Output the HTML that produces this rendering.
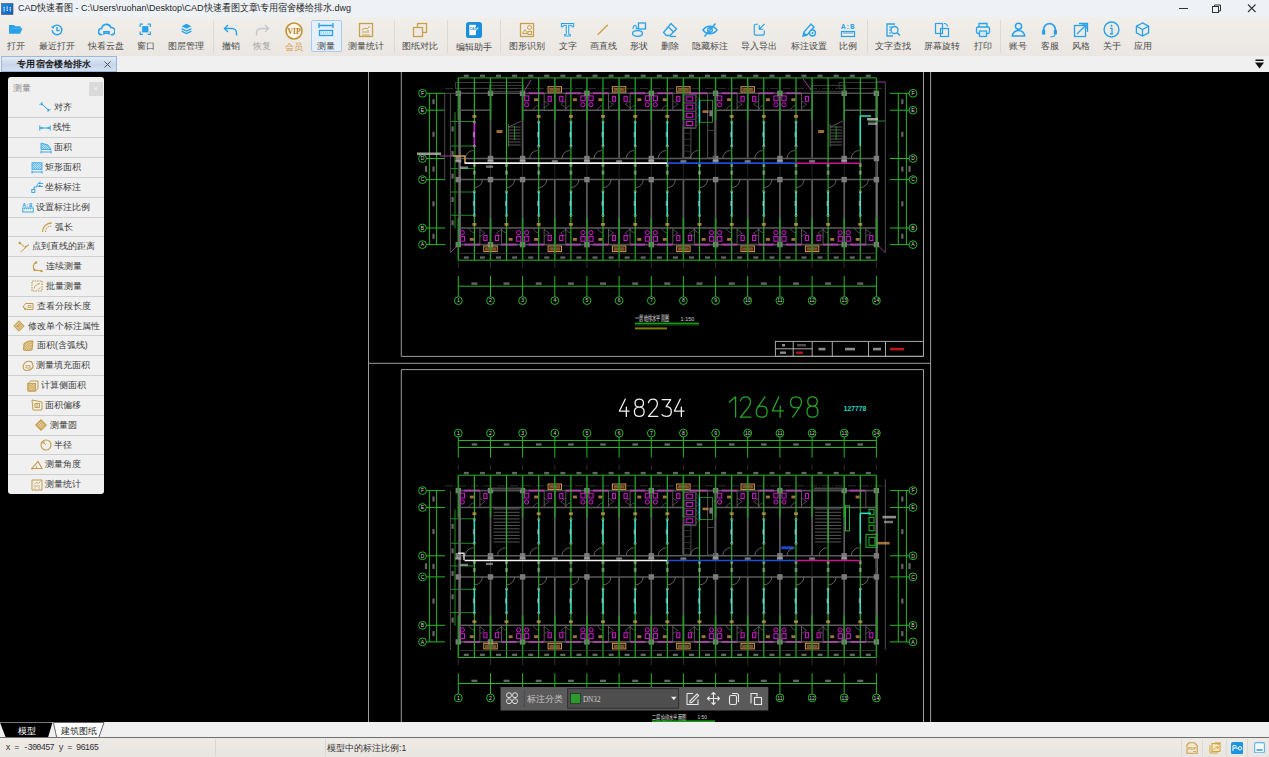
<!DOCTYPE html>
<html><head><meta charset="utf-8"><title>CAD快速看图</title>
<style>
*{margin:0;padding:0;box-sizing:border-box}
html,body{width:1269px;height:757px;overflow:hidden;background:#000;font-family:"Liberation Sans",sans-serif}
.abs{position:absolute}
#title{left:0;top:0;width:1269px;height:17px;background:#eef2f7}
#tb{left:0;top:17px;width:1269px;height:39px;background:linear-gradient(#f1efeb,#ebe6e1)}
#tabs{left:0;top:56px;width:1269px;height:16px;background:#f0f0f0}
.lbl{position:absolute;top:23px;font-size:8.6px;line-height:10px;color:#4a4a4a;white-space:nowrap;transform:translateX(-50%)}
.ico{position:absolute;top:6px;width:16px;height:16px}
.sep{position:absolute;top:3px;width:1px;height:33px;background:#dcd8d3}
#canvas{left:0;top:72px;width:1269px;height:650px;background:#000;overflow:hidden}
#btabs{left:0;top:722px;width:1269px;height:16px;background:#f0f0f0;border-bottom:1px solid #6e6e6e}
#status{left:0;top:738px;width:1269px;height:19px;background:linear-gradient(#eeebe7,#e9e5e0)}
#panel{left:7.7px;top:77.4px;width:96px;height:417px;background:#f0f0f0;border-radius:3px;overflow:hidden}
.pi{position:absolute;left:0;width:96px;height:19.82px;font-size:8.6px;color:#3c3c3c;white-space:nowrap}
</style></head><body>

<div id="title" class="abs">
<svg class="abs" style="left:1px;top:2.5px" width="12.5" height="12"><defs><linearGradient id="tg" x1="0" y1="0" x2="1" y2="1"><stop offset="0" stop-color="#1b8cf0"/><stop offset="1" stop-color="#0b5cb8"/></linearGradient></defs><rect x="0.5" y="0.5" width="11.5" height="11" fill="url(#tg)" stroke="#5a4a3a" stroke-width="0.6"/><path d="M3.2 4v4.5M6.3 3.5v5M9.3 4v4.5" stroke="#d8e8f8" stroke-width="1.4" stroke-dasharray="1.2 0.5"/></svg>
<div class="abs" style="left:18px;top:1px;font-size:9px;line-height:15px;color:#262626;white-space:nowrap;transform:scaleY(1.1);transform-origin:0 50%">CAD快速看图 - C:\Users\ruohan\Desktop\CAD快速看图文章\专用宿舍楼给排水.dwg</div>
<svg class="abs" style="left:1176px;top:2px" width="93" height="14"><path d="M3 6.5h9" stroke="#333" stroke-width="1"/><rect x="36.5" y="4.5" width="6" height="6" fill="none" stroke="#333"/><path d="M38.5 4.5v-1.5h6v6h-1.5" fill="none" stroke="#333"/><path d="M72 2.5l7.5 7.5M79.5 2.5L72 10" stroke="#333" stroke-width="1.1"/></svg>
</div>
<div id="tb" class="abs">
<svg class="ico" style="left:8.2px;top:4.8px;width:15.5px;height:15.5px" viewBox="0 0 16 16"><path d="M1 3h5l1.5 1.5H13v2H4L1 12z" fill="#27a2ea"/><path d="M3.5 6.5H15L12.5 12H1z" fill="#27a2ea"/></svg>
<div class="lbl" style="left:16.0px;top:24px;color:#4a4a4a">打开</div>
<svg class="ico" style="left:49.8px;top:5.6px;width:14px;height:14px" viewBox="0 0 16 16"><path d="M3.2 5.2A5.5 5.5 0 1 1 2.5 8" fill="none" stroke="#27a2ea" stroke-width="1.6"/><path d="M0.8 4.5l3.2-1 0.6 3.2z" fill="#27a2ea"/><path d="M8 4.5v4h3" fill="none" stroke="#27a2ea" stroke-width="1.6"/></svg>
<div class="lbl" style="left:56.8px;top:24px;color:#4a4a4a">最近打开</div>
<svg class="ico" style="left:97.5px;top:4.1px;width:17px;height:17px" viewBox="0 0 16 16"><path d="M4 13H3.5a3 3 0 0 1 0-6 4.5 4.5 0 0 1 8.7-0.8A3.4 3.4 0 0 1 13 13h-1" fill="none" stroke="#27a2ea" stroke-width="1.5"/><path d="M5.5 13v-3h5v3M5.5 11.5h5" fill="none" stroke="#27a2ea" stroke-width="1.3"/></svg>
<div class="lbl" style="left:106.0px;top:24px;color:#4a4a4a">快看云盘</div>
<svg class="ico" style="left:139.4px;top:6.3px;width:12.5px;height:12.5px" viewBox="0 0 16 16"><path d="M1.5 5V1.5H5M11 1.5h3.5V5M14.5 11v3.5H11M5 14.5H1.5V11" fill="none" stroke="#27a2ea" stroke-width="1.5"/><rect x="4" y="4" width="8" height="8" fill="#27a2ea"/></svg>
<div class="lbl" style="left:145.7px;top:24px;color:#4a4a4a">窗口</div>
<svg class="ico" style="left:179.5px;top:6.1px;width:13px;height:13px" viewBox="0 0 16 16"><path d="M8 1l6 3-6 3-6-3z" fill="#27a2ea"/><path d="M2 7l6 3 6-3M2 10l6 3 6-3" fill="none" stroke="#27a2ea" stroke-width="1.6"/></svg>
<div class="lbl" style="left:186.0px;top:24px;color:#4a4a4a">图层管理</div>
<div class="sep" style="left:212.9px"></div>
<svg class="ico" style="left:222.6px;top:4.6px;width:16px;height:16px" viewBox="0 0 16 16"><path d="M5 3L1.5 6.5 5 10" fill="none" stroke="#27a2ea" stroke-width="1.4"/><path d="M1.8 6.5H9a4.5 4.5 0 0 1 4.5 4.5v2.5" fill="none" stroke="#27a2ea" stroke-width="1.4"/></svg>
<div class="lbl" style="left:230.6px;top:24px;color:#4a4a4a">撤销</div>
<svg class="ico" style="left:253.8px;top:4.6px;width:16px;height:16px" viewBox="0 0 16 16"><path d="M11 3l3.5 3.5L11 10" fill="none" stroke="#c6c6c6" stroke-width="1.4"/><path d="M14.2 6.5H7a4.5 4.5 0 0 0-4.5 4.5v2.5" fill="none" stroke="#c6c6c6" stroke-width="1.4"/></svg>
<div class="lbl" style="left:261.8px;top:24px;color:#a8a8a8">恢复</div>
<svg class="ico" style="left:285.0px;top:4.5px;width:18px;height:18px" viewBox="0 0 18 18"><circle cx="9" cy="9" r="8" fill="#fff8e8" stroke="#c49136" stroke-width="1.6"/><text x="2.6" y="12" font-size="7.5" font-weight="bold" fill="#b27d20" font-family="Liberation Serif">VIP</text></svg>
<div class="lbl" style="left:294.0px;top:25px;color:#cf9f4d">会员</div>
<div class="abs" style="left:311.2px;top:3.1px;width:30.7px;height:32.3px;background:#e6f0fb;border:1px solid #a9c9ef;border-radius:2px"></div>
<svg class="ico" style="left:318.0px;top:4.6px;width:16px;height:16px" viewBox="0 0 16 16"><path d="M1 1v5M15 1v5M1 3.5h14" fill="none" stroke="#27a2ea" stroke-width="1.3"/><rect x="1.5" y="8.5" width="13" height="5" fill="none" stroke="#27a2ea" stroke-width="1.3"/><path d="M3 11h10" stroke="#27a2ea" stroke-width="0.8" stroke-dasharray="1 1"/></svg>
<div class="lbl" style="left:326.0px;top:24px;color:#4a4a4a">测量</div>
<svg class="ico" style="left:358.4px;top:4.6px;width:16px;height:16px" viewBox="0 0 16 16"><rect x="1.5" y="1.5" width="13" height="13" fill="none" stroke="#c9a04e" stroke-width="1.3"/><path d="M4 8l3-2 2 1 3-3M4 10h1M6 9v2M8 9v2M10 8v3" fill="none" stroke="#c9a04e" stroke-width="1"/><path d="M4 13h8" stroke="#c9a04e" stroke-width="1"/></svg>
<div class="lbl" style="left:366.4px;top:24px;color:#4a4a4a">测量统计</div>
<div class="sep" style="left:393.5px"></div>
<svg class="ico" style="left:412.2px;top:4.6px;width:16px;height:16px" viewBox="0 0 16 16"><rect x="5.5" y="1.5" width="9" height="9" fill="none" stroke="#c9a04e" stroke-width="1.3"/><rect x="1.5" y="5.5" width="9" height="9" fill="#eeeae5" stroke="#c9a04e" stroke-width="1.3"/></svg>
<div class="lbl" style="left:420.2px;top:24px;color:#4a4a4a">图纸对比</div>
<div class="sep" style="left:446.8px"></div>
<svg class="ico" style="left:465.6px;top:4.5px;width:16px;height:16px" viewBox="0 0 17 17"><rect x="0" y="0" width="17" height="17" rx="3" fill="#1a8fe0"/><path d="M3.5 3h7v11h-7z" fill="#fff"/><path d="M6 13l7-7" stroke="#fff" stroke-width="1.4"/><text x="4" y="8" font-size="3.5" fill="#1a8fe0" font-family="Liberation Sans" font-weight="bold">CAD</text></svg>
<div class="lbl" style="left:473.6px;top:25px;color:#4a4a4a">编辑助手</div>
<div class="sep" style="left:500.1px"></div>
<svg class="ico" style="left:519.2px;top:4.6px;width:16px;height:16px" viewBox="0 0 16 16"><rect x="1.5" y="1.5" width="13" height="13" fill="none" stroke="#c9a04e" stroke-width="1.3"/><path d="M3.5 11.5l2.5-4 2.5 4z" fill="none" stroke="#c9a04e" stroke-width="1"/><circle cx="10.5" cy="5.5" r="2" fill="none" stroke="#c9a04e" stroke-width="1"/><rect x="9" y="9.5" width="3.5" height="3" fill="none" stroke="#c9a04e" stroke-width="1"/></svg>
<div class="lbl" style="left:527.2px;top:24px;color:#4a4a4a">图形识别</div>
<svg class="ico" style="left:560.1px;top:5.1px;width:15px;height:15px" viewBox="0 0 16 16"><path d="M1.5 1.5h13v3.5h-1.5l-1-1.5H9.3v9.5l1.7 0.5v1.5H5v-1.5l1.7-0.5V3.5H4L3 5H1.5z" fill="#eaf5fc" stroke="#27a2ea" stroke-width="1.1"/></svg>
<div class="lbl" style="left:567.6px;top:24px;color:#4a4a4a">文字</div>
<svg class="ico" style="left:596.2px;top:5.8px;width:13.5px;height:13.5px" viewBox="0 0 16 16"><path d="M2 14L14 2" stroke="#c9a04e" stroke-width="1.5"/></svg>
<div class="lbl" style="left:603.0px;top:24px;color:#4a4a4a">画直线</div>
<svg class="ico" style="left:630.7px;top:4.6px;width:16px;height:16px" viewBox="0 0 16 16"><rect x="7.5" y="1" width="7" height="6" fill="none" stroke="#27a2ea" stroke-width="1.3"/><ellipse cx="6.5" cy="11.5" rx="5" ry="2.8" fill="none" stroke="#27a2ea" stroke-width="1.3"/><path d="M2 7c0-3 2-5 3-3s-1 4 2 2" fill="none" stroke="#27a2ea" stroke-width="1.1"/></svg>
<div class="lbl" style="left:638.7px;top:24px;color:#4a4a4a">形状</div>
<svg class="ico" style="left:662.0px;top:4.6px;width:16px;height:16px" viewBox="0 0 16 16"><path d="M9 1.5l5.5 5.5-6.5 6.5H4.5L1.5 10.5z" fill="none" stroke="#27a2ea" stroke-width="1.3"/><path d="M6 4.5l5.5 5.5" stroke="#27a2ea" stroke-width="1.3"/><path d="M8 14.5h6" stroke="#27a2ea" stroke-width="1.2"/></svg>
<div class="lbl" style="left:670.0px;top:24px;color:#4a4a4a">删除</div>
<svg class="ico" style="left:702.0px;top:4.6px;width:16px;height:16px" viewBox="0 0 16 16"><path d="M1 8c3.5-5 10.5-5 14 0-3.5 5-10.5 5-14 0z" fill="none" stroke="#27a2ea" stroke-width="1.4"/><circle cx="8" cy="8" r="2.3" fill="none" stroke="#27a2ea" stroke-width="1.4"/><path d="M2.5 14.5L13.5 1.5" stroke="#27a2ea" stroke-width="1.4"/></svg>
<div class="lbl" style="left:710.0px;top:24px;color:#4a4a4a">隐藏标注</div>
<svg class="ico" style="left:752.0px;top:5.3px;width:14.5px;height:14.5px" viewBox="0 0 16 16"><path d="M6.5 2.5H4a1.5 1.5 0 0 0-1.5 1.5v9a1.5 1.5 0 0 0 1.5 1.5h8a1.5 1.5 0 0 0 1.5-1.5V9.5" fill="none" stroke="#27a2ea" stroke-width="1.3"/><path d="M14 2L8 8M8 3.5V8h4.5" fill="none" stroke="#27a2ea" stroke-width="1.3"/></svg>
<div class="lbl" style="left:759.2px;top:24px;color:#4a4a4a">导入导出</div>
<svg class="ico" style="left:800.6px;top:4.6px;width:16px;height:16px" viewBox="0 0 16 16"><path d="M2 14l1-4 7-8 3 3-7 8z" fill="none" stroke="#27a2ea" stroke-width="1.4"/><path d="M2 14l1-4 3 3z" fill="#27a2ea"/><circle cx="11.5" cy="11" r="3" fill="#efebe6" stroke="#27a2ea" stroke-width="1.3"/><circle cx="11.5" cy="11" r="1" fill="#27a2ea"/></svg>
<div class="lbl" style="left:808.6px;top:24px;color:#4a4a4a">标注设置</div>
<svg class="ico" style="left:840.4px;top:4.6px;width:16px;height:16px" viewBox="0 0 16 16"><text x="1" y="7" font-size="7.5" font-family="Liberation Mono" font-weight="bold" fill="#27a2ea">A:B</text><rect x="1.5" y="9.5" width="13" height="5" fill="none" stroke="#27a2ea" stroke-width="1.2"/><path d="M4 10v2M6 10v2M8 10v2M10 10v2M12 10v2" stroke="#27a2ea" stroke-width="0.8"/></svg>
<div class="lbl" style="left:848.4px;top:24px;color:#4a4a4a">比例</div>
<div class="sep" style="left:866.8px"></div>
<svg class="ico" style="left:884.8px;top:4.6px;width:16px;height:16px" viewBox="0 0 16 16"><path d="M10 2H2v12h6" fill="none" stroke="#27a2ea" stroke-width="1.3"/><path d="M4 5h3M4 8h2M4 11h2" stroke="#27a2ea" stroke-width="1"/><circle cx="9.5" cy="8" r="3.5" fill="none" stroke="#27a2ea" stroke-width="1.3"/><path d="M12 10.5l3 3" stroke="#27a2ea" stroke-width="1.5"/></svg>
<div class="lbl" style="left:892.8px;top:24px;color:#4a4a4a">文字查找</div>
<svg class="ico" style="left:934.2px;top:4.6px;width:16px;height:16px" viewBox="0 0 16 16"><rect x="1.5" y="1.5" width="7" height="10" fill="none" stroke="#27a2ea" stroke-width="1.2"/><rect x="6.5" y="6.5" width="8" height="8" fill="none" stroke="#27a2ea" stroke-width="1.2"/><path d="M10 1.5c2 0 3.5 1 3.5 3" fill="none" stroke="#27a2ea" stroke-width="1.1"/></svg>
<div class="lbl" style="left:942.2px;top:24px;color:#4a4a4a">屏幕旋转</div>
<svg class="ico" style="left:974.5px;top:4.6px;width:16px;height:16px" viewBox="0 0 16 16"><path d="M4 5V1.5h8V5" fill="none" stroke="#27a2ea" stroke-width="1.3"/><rect x="1.5" y="5" width="13" height="6.5" rx="1.5" fill="none" stroke="#27a2ea" stroke-width="1.3"/><rect x="4.5" y="9" width="7" height="5.5" fill="#cfe9f8" stroke="#27a2ea" stroke-width="1.2"/></svg>
<div class="lbl" style="left:982.5px;top:24px;color:#4a4a4a">打印</div>
<div class="sep" style="left:1000.2px"></div>
<svg class="ico" style="left:1010.6px;top:5.1px;width:15px;height:15px" viewBox="0 0 16 16"><circle cx="8" cy="4.5" r="3.3" fill="none" stroke="#27a2ea" stroke-width="1.6"/><path d="M1.5 15a6.5 6 0 0 1 13 0z" fill="none" stroke="#27a2ea" stroke-width="1.6"/></svg>
<div class="lbl" style="left:1018.1px;top:24px;color:#4a4a4a">账号</div>
<svg class="ico" style="left:1041.0px;top:4.1px;width:17px;height:17px" viewBox="0 0 16 16"><path d="M2.5 10V8a5.5 5.5 0 0 1 11 0v2" fill="none" stroke="#27a2ea" stroke-width="1.5"/><rect x="1" y="8" width="3" height="5" rx="1.2" fill="#27a2ea"/><rect x="12" y="8" width="3" height="5" rx="1.2" fill="#27a2ea"/><path d="M13 13c0 1.5-2 2-4 2" fill="none" stroke="#27a2ea" stroke-width="1.1"/></svg>
<div class="lbl" style="left:1049.5px;top:24px;color:#4a4a4a">客服</div>
<svg class="ico" style="left:1072.6px;top:4.6px;width:16px;height:16px" viewBox="0 0 16 16"><path d="M6 1.5h8.5v8.5" fill="none" stroke="#27a2ea" stroke-width="1.3"/><rect x="1.5" y="3.5" width="11" height="11" fill="none" stroke="#27a2ea" stroke-width="1.3"/><path d="M4 12l9-9" stroke="#27a2ea" stroke-width="1.3"/><path d="M9 3h4v4" fill="none" stroke="#27a2ea" stroke-width="1.3"/></svg>
<div class="lbl" style="left:1080.6px;top:24px;color:#4a4a4a">风格</div>
<svg class="ico" style="left:1103.1px;top:4.1px;width:17px;height:17px" viewBox="0 0 16 16"><circle cx="8" cy="8" r="7" fill="none" stroke="#27a2ea" stroke-width="1.3"/><circle cx="8" cy="4.5" r="0.9" fill="#27a2ea"/><path d="M6.5 7h2v5M6.5 12h3" fill="none" stroke="#27a2ea" stroke-width="1.2"/></svg>
<div class="lbl" style="left:1111.6px;top:24px;color:#4a4a4a">关于</div>
<svg class="ico" style="left:1135.3px;top:5.1px;width:15px;height:15px" viewBox="0 0 16 16"><path d="M8 1l6.5 3.5v7L8 15 1.5 11.5v-7z" fill="none" stroke="#27a2ea" stroke-width="1.4"/><path d="M1.5 4.5L8 8l6.5-3.5M8 8v7" fill="none" stroke="#27a2ea" stroke-width="1.4"/></svg>
<div class="lbl" style="left:1142.8px;top:24px;color:#4a4a4a">应用</div>
</div>
<div id="tabs" class="abs">
<div class="abs" style="left:1px;top:0;width:116px;height:16px;border:1px solid #9bb7dc;background:linear-gradient(#e3ebf6,#c6d6eb 55%,#d5e1f1)"></div>
<div class="abs" style="left:17px;top:2px;font-size:9.4px;line-height:12px;font-weight:bold;color:#1e1e1e;white-space:nowrap;letter-spacing:0.35px">专用宿舍楼给排水</div>
<svg class="abs" style="left:103px;top:4px" width="9" height="9"><path d="M1.5 1.5l6 6M7.5 1.5l-6 6" stroke="#555" stroke-width="1"/></svg>
<svg class="abs" style="left:1254px;top:3px" width="11" height="10"><rect x="1.5" y="0.5" width="8" height="1.5" fill="#111"/><path d="M1 3.5h9l-4.5 6z" fill="#111"/></svg>
</div>
<div id="canvas" class="abs"><svg width="1269" height="650" viewBox="0 72 1269 650" shape-rendering="auto">
<line x1="368.5" y1="72.0" x2="368.5" y2="722.0" stroke="#9c9c9c" stroke-width="1"/>
<line x1="930.6" y1="72.0" x2="930.6" y2="722.0" stroke="#9c9c9c" stroke-width="1"/>
<line x1="368.5" y1="363.3" x2="930.6" y2="363.3" stroke="#9c9c9c" stroke-width="1"/>
<line x1="401.3" y1="72.0" x2="401.3" y2="356.4" stroke="#9c9c9c" stroke-width="1"/>
<line x1="923.5" y1="72.0" x2="923.5" y2="356.4" stroke="#9c9c9c" stroke-width="1"/>
<line x1="401.3" y1="356.4" x2="923.5" y2="356.4" stroke="#9c9c9c" stroke-width="1"/>
<line x1="401.3" y1="369.6" x2="923.5" y2="369.6" stroke="#9c9c9c" stroke-width="1"/>
<line x1="401.3" y1="369.6" x2="401.3" y2="722.0" stroke="#9c9c9c" stroke-width="1"/>
<line x1="923.5" y1="369.6" x2="923.5" y2="722.0" stroke="#9c9c9c" stroke-width="1"/>
<g transform="translate(0,0)">
<line x1="458.3" y1="77.9" x2="876.4" y2="77.9" stroke="#26b826" stroke-width="1"/>
<rect x="463.8" y="74.6" width="5.0" height="2.3" fill="#c8c8c8" opacity="0.5"/>
<rect x="479.9" y="74.6" width="5.0" height="2.3" fill="#c8c8c8" opacity="0.5"/>
<rect x="496.0" y="74.6" width="5.0" height="2.3" fill="#c8c8c8" opacity="0.5"/>
<rect x="512.1" y="74.6" width="5.0" height="2.3" fill="#c8c8c8" opacity="0.5"/>
<rect x="528.2" y="74.6" width="5.0" height="2.3" fill="#c8c8c8" opacity="0.5"/>
<rect x="544.2" y="74.6" width="5.0" height="2.3" fill="#c8c8c8" opacity="0.5"/>
<rect x="560.3" y="74.6" width="5.0" height="2.3" fill="#c8c8c8" opacity="0.5"/>
<rect x="576.4" y="74.6" width="5.0" height="2.3" fill="#c8c8c8" opacity="0.5"/>
<rect x="592.5" y="74.6" width="5.0" height="2.3" fill="#c8c8c8" opacity="0.5"/>
<rect x="608.6" y="74.6" width="5.0" height="2.3" fill="#c8c8c8" opacity="0.5"/>
<rect x="624.6" y="74.6" width="5.0" height="2.3" fill="#c8c8c8" opacity="0.5"/>
<rect x="640.7" y="74.6" width="5.0" height="2.3" fill="#c8c8c8" opacity="0.5"/>
<rect x="656.8" y="74.6" width="5.0" height="2.3" fill="#c8c8c8" opacity="0.5"/>
<rect x="672.9" y="74.6" width="5.0" height="2.3" fill="#c8c8c8" opacity="0.5"/>
<rect x="689.0" y="74.6" width="5.0" height="2.3" fill="#c8c8c8" opacity="0.5"/>
<rect x="705.0" y="74.6" width="5.0" height="2.3" fill="#c8c8c8" opacity="0.5"/>
<rect x="721.1" y="74.6" width="5.0" height="2.3" fill="#c8c8c8" opacity="0.5"/>
<rect x="737.2" y="74.6" width="5.0" height="2.3" fill="#c8c8c8" opacity="0.5"/>
<rect x="753.3" y="74.6" width="5.0" height="2.3" fill="#c8c8c8" opacity="0.5"/>
<rect x="769.4" y="74.6" width="5.0" height="2.3" fill="#c8c8c8" opacity="0.5"/>
<rect x="785.4" y="74.6" width="5.0" height="2.3" fill="#c8c8c8" opacity="0.5"/>
<rect x="801.5" y="74.6" width="5.0" height="2.3" fill="#c8c8c8" opacity="0.5"/>
<rect x="817.6" y="74.6" width="5.0" height="2.3" fill="#c8c8c8" opacity="0.5"/>
<rect x="833.7" y="74.6" width="5.0" height="2.3" fill="#c8c8c8" opacity="0.5"/>
<rect x="849.8" y="74.6" width="5.0" height="2.3" fill="#c8c8c8" opacity="0.5"/>
<rect x="865.8" y="74.6" width="5.0" height="2.3" fill="#c8c8c8" opacity="0.5"/>
<line x1="445.0" y1="88.6" x2="885.0" y2="88.6" stroke="#3c3c3c" stroke-width="0.8" stroke-dasharray="8 2 1 2"/>
<line x1="450.4" y1="93.3" x2="450.4" y2="252.6" stroke="#555" stroke-width="0.9"/>
<line x1="885.3" y1="82.0" x2="885.3" y2="252.6" stroke="#555" stroke-width="0.9"/>
<path d="M450.4 252.6L458.3 244.6" fill="none" stroke="#b040b0" stroke-width="0.8"/>
<path d="M877 244.6L885.3 252.6" fill="none" stroke="#b040b0" stroke-width="0.8"/>
<circle cx="422.5" cy="93.3" r="3.9" fill="none" stroke="#26b826" stroke-width="1"/>
<text x="422.5" y="95.1" font-size="5" text-anchor="middle" fill="#d8d8d8" font-family="Liberation Sans">F</text>
<circle cx="913.0" cy="93.3" r="3.9" fill="none" stroke="#26b826" stroke-width="1"/>
<text x="913.0" y="95.1" font-size="5" text-anchor="middle" fill="#d8d8d8" font-family="Liberation Sans">F</text>
<line x1="426.4" y1="93.3" x2="445.0" y2="93.3" stroke="#26b826" stroke-width="1"/>
<line x1="890.0" y1="93.3" x2="909.1" y2="93.3" stroke="#26b826" stroke-width="1"/>
<circle cx="422.5" cy="110.2" r="3.9" fill="none" stroke="#26b826" stroke-width="1"/>
<text x="422.5" y="112.0" font-size="5" text-anchor="middle" fill="#d8d8d8" font-family="Liberation Sans">E</text>
<circle cx="913.0" cy="110.2" r="3.9" fill="none" stroke="#26b826" stroke-width="1"/>
<text x="913.0" y="112.0" font-size="5" text-anchor="middle" fill="#d8d8d8" font-family="Liberation Sans">E</text>
<line x1="426.4" y1="110.2" x2="445.0" y2="110.2" stroke="#26b826" stroke-width="1"/>
<line x1="890.0" y1="110.2" x2="909.1" y2="110.2" stroke="#26b826" stroke-width="1"/>
<circle cx="422.5" cy="158.5" r="3.9" fill="none" stroke="#26b826" stroke-width="1"/>
<text x="422.5" y="160.3" font-size="5" text-anchor="middle" fill="#d8d8d8" font-family="Liberation Sans">D</text>
<circle cx="913.0" cy="158.5" r="3.9" fill="none" stroke="#26b826" stroke-width="1"/>
<text x="913.0" y="160.3" font-size="5" text-anchor="middle" fill="#d8d8d8" font-family="Liberation Sans">D</text>
<line x1="426.4" y1="158.5" x2="445.0" y2="158.5" stroke="#26b826" stroke-width="1"/>
<line x1="890.0" y1="158.5" x2="909.1" y2="158.5" stroke="#26b826" stroke-width="1"/>
<circle cx="422.5" cy="179.6" r="3.9" fill="none" stroke="#26b826" stroke-width="1"/>
<text x="422.5" y="181.4" font-size="5" text-anchor="middle" fill="#d8d8d8" font-family="Liberation Sans">C</text>
<circle cx="913.0" cy="179.6" r="3.9" fill="none" stroke="#26b826" stroke-width="1"/>
<text x="913.0" y="181.4" font-size="5" text-anchor="middle" fill="#d8d8d8" font-family="Liberation Sans">C</text>
<line x1="426.4" y1="179.6" x2="445.0" y2="179.6" stroke="#26b826" stroke-width="1"/>
<line x1="890.0" y1="179.6" x2="909.1" y2="179.6" stroke="#26b826" stroke-width="1"/>
<circle cx="422.5" cy="228.0" r="3.9" fill="none" stroke="#26b826" stroke-width="1"/>
<text x="422.5" y="229.8" font-size="5" text-anchor="middle" fill="#d8d8d8" font-family="Liberation Sans">B</text>
<circle cx="913.0" cy="228.0" r="3.9" fill="none" stroke="#26b826" stroke-width="1"/>
<text x="913.0" y="229.8" font-size="5" text-anchor="middle" fill="#d8d8d8" font-family="Liberation Sans">B</text>
<line x1="426.4" y1="228.0" x2="445.0" y2="228.0" stroke="#26b826" stroke-width="1"/>
<line x1="890.0" y1="228.0" x2="909.1" y2="228.0" stroke="#26b826" stroke-width="1"/>
<circle cx="422.5" cy="244.6" r="3.9" fill="none" stroke="#26b826" stroke-width="1"/>
<text x="422.5" y="246.4" font-size="5" text-anchor="middle" fill="#d8d8d8" font-family="Liberation Sans">A</text>
<circle cx="913.0" cy="244.6" r="3.9" fill="none" stroke="#26b826" stroke-width="1"/>
<text x="913.0" y="246.4" font-size="5" text-anchor="middle" fill="#d8d8d8" font-family="Liberation Sans">A</text>
<line x1="426.4" y1="244.6" x2="445.0" y2="244.6" stroke="#26b826" stroke-width="1"/>
<line x1="890.0" y1="244.6" x2="909.1" y2="244.6" stroke="#26b826" stroke-width="1"/>
<line x1="429.4" y1="93.3" x2="429.4" y2="244.6" stroke="#26b826" stroke-width="1"/>
<line x1="436.6" y1="93.3" x2="436.6" y2="244.6" stroke="#26b826" stroke-width="1"/>
<line x1="898.3" y1="93.3" x2="898.3" y2="244.6" stroke="#26b826" stroke-width="1"/>
<line x1="906.4" y1="93.3" x2="906.4" y2="244.6" stroke="#26b826" stroke-width="1"/>
<rect x="432.4" y="99.2" width="2.2" height="5.0" fill="#c8c8c8" opacity="0.5"/>
<rect x="901.2" y="99.2" width="2.2" height="5.0" fill="#c8c8c8" opacity="0.5"/>
<rect x="432.4" y="131.8" width="2.2" height="5.0" fill="#c8c8c8" opacity="0.5"/>
<rect x="901.2" y="131.8" width="2.2" height="5.0" fill="#c8c8c8" opacity="0.5"/>
<rect x="432.4" y="166.6" width="2.2" height="5.0" fill="#c8c8c8" opacity="0.5"/>
<rect x="901.2" y="166.6" width="2.2" height="5.0" fill="#c8c8c8" opacity="0.5"/>
<rect x="432.4" y="201.3" width="2.2" height="5.0" fill="#c8c8c8" opacity="0.5"/>
<rect x="901.2" y="201.3" width="2.2" height="5.0" fill="#c8c8c8" opacity="0.5"/>
<rect x="432.4" y="233.8" width="2.2" height="5.0" fill="#c8c8c8" opacity="0.5"/>
<rect x="901.2" y="233.8" width="2.2" height="5.0" fill="#c8c8c8" opacity="0.5"/>
<rect x="424.9" y="165.9" width="2.2" height="6.0" fill="#c8c8c8" opacity="0.5"/>
<rect x="908.4" y="165.9" width="2.2" height="6.0" fill="#c8c8c8" opacity="0.5"/>
<line x1="455.0" y1="112.2" x2="455.0" y2="228.6" stroke="#229a22" stroke-width="0.9"/>
<line x1="451.0" y1="121.5" x2="474.0" y2="121.5" stroke="#229a22" stroke-width="0.9"/>
<rect x="451.5" y="126.5" width="2.2" height="5.0" fill="#c8c8c8" opacity="0.5"/>
<line x1="451.0" y1="146.0" x2="474.0" y2="146.0" stroke="#229a22" stroke-width="0.9"/>
<rect x="451.5" y="151.0" width="2.2" height="5.0" fill="#c8c8c8" opacity="0.5"/>
<line x1="451.0" y1="168.6" x2="474.0" y2="168.6" stroke="#229a22" stroke-width="0.9"/>
<rect x="451.5" y="173.6" width="2.2" height="5.0" fill="#c8c8c8" opacity="0.5"/>
<line x1="451.0" y1="192.0" x2="474.0" y2="192.0" stroke="#229a22" stroke-width="0.9"/>
<rect x="451.5" y="197.0" width="2.2" height="5.0" fill="#c8c8c8" opacity="0.5"/>
<line x1="451.0" y1="215.3" x2="474.0" y2="215.3" stroke="#229a22" stroke-width="0.9"/>
<rect x="451.5" y="220.3" width="2.2" height="5.0" fill="#c8c8c8" opacity="0.5"/>
<line x1="459.6" y1="92.3" x2="459.6" y2="245.6" stroke="#6a6a6a" stroke-width="2.6"/>
<line x1="876.7" y1="92.3" x2="876.7" y2="245.6" stroke="#6a6a6a" stroke-width="2.4"/>
<line x1="459.6" y1="158.5" x2="876.7" y2="158.5" stroke="#5c5c5c" stroke-width="1.5"/>
<line x1="459.6" y1="179.6" x2="876.7" y2="179.6" stroke="#5c5c5c" stroke-width="1.5"/>
<line x1="459.6" y1="110.2" x2="490.5" y2="110.2" stroke="#5c5c5c" stroke-width="1.4"/>
<line x1="522.6" y1="110.2" x2="554.8" y2="110.2" stroke="#5c5c5c" stroke-width="1.4"/>
<line x1="554.8" y1="110.2" x2="586.9" y2="110.2" stroke="#5c5c5c" stroke-width="1.4"/>
<line x1="586.9" y1="110.2" x2="619.1" y2="110.2" stroke="#5c5c5c" stroke-width="1.4"/>
<line x1="619.1" y1="110.2" x2="651.3" y2="110.2" stroke="#5c5c5c" stroke-width="1.4"/>
<line x1="651.3" y1="110.2" x2="683.4" y2="110.2" stroke="#5c5c5c" stroke-width="1.4"/>
<line x1="715.6" y1="110.2" x2="747.7" y2="110.2" stroke="#5c5c5c" stroke-width="1.4"/>
<line x1="747.7" y1="110.2" x2="779.9" y2="110.2" stroke="#5c5c5c" stroke-width="1.4"/>
<line x1="779.9" y1="110.2" x2="812.1" y2="110.2" stroke="#5c5c5c" stroke-width="1.4"/>
<line x1="844.2" y1="110.2" x2="876.7" y2="110.2" stroke="#5c5c5c" stroke-width="1.4"/>
<line x1="459.6" y1="228.0" x2="876.7" y2="228.0" stroke="#5c5c5c" stroke-width="1.4"/>
<line x1="459.6" y1="93.3" x2="876.7" y2="93.3" stroke="#4e4e4e" stroke-width="1.6"/>
<line x1="459.6" y1="244.6" x2="876.7" y2="244.6" stroke="#4e4e4e" stroke-width="1.6"/>
<line x1="490.5" y1="93.3" x2="490.5" y2="158.5" stroke="#5c5c5c" stroke-width="1.7"/>
<line x1="490.5" y1="179.6" x2="490.5" y2="244.6" stroke="#5c5c5c" stroke-width="1.7"/>
<line x1="522.6" y1="93.3" x2="522.6" y2="158.5" stroke="#5c5c5c" stroke-width="1.7"/>
<line x1="522.6" y1="179.6" x2="522.6" y2="244.6" stroke="#5c5c5c" stroke-width="1.7"/>
<line x1="554.8" y1="93.3" x2="554.8" y2="158.5" stroke="#5c5c5c" stroke-width="1.7"/>
<line x1="554.8" y1="179.6" x2="554.8" y2="244.6" stroke="#5c5c5c" stroke-width="1.7"/>
<line x1="586.9" y1="93.3" x2="586.9" y2="158.5" stroke="#5c5c5c" stroke-width="1.7"/>
<line x1="586.9" y1="179.6" x2="586.9" y2="244.6" stroke="#5c5c5c" stroke-width="1.7"/>
<line x1="619.1" y1="93.3" x2="619.1" y2="158.5" stroke="#5c5c5c" stroke-width="1.7"/>
<line x1="619.1" y1="179.6" x2="619.1" y2="244.6" stroke="#5c5c5c" stroke-width="1.7"/>
<line x1="651.3" y1="93.3" x2="651.3" y2="158.5" stroke="#5c5c5c" stroke-width="1.7"/>
<line x1="651.3" y1="179.6" x2="651.3" y2="244.6" stroke="#5c5c5c" stroke-width="1.7"/>
<line x1="683.4" y1="93.3" x2="683.4" y2="158.5" stroke="#5c5c5c" stroke-width="1.7"/>
<line x1="683.4" y1="179.6" x2="683.4" y2="244.6" stroke="#5c5c5c" stroke-width="1.7"/>
<line x1="715.6" y1="93.3" x2="715.6" y2="158.5" stroke="#5c5c5c" stroke-width="1.7"/>
<line x1="715.6" y1="179.6" x2="715.6" y2="244.6" stroke="#5c5c5c" stroke-width="1.7"/>
<line x1="747.7" y1="93.3" x2="747.7" y2="158.5" stroke="#5c5c5c" stroke-width="1.7"/>
<line x1="747.7" y1="179.6" x2="747.7" y2="244.6" stroke="#5c5c5c" stroke-width="1.7"/>
<line x1="779.9" y1="93.3" x2="779.9" y2="158.5" stroke="#5c5c5c" stroke-width="1.7"/>
<line x1="779.9" y1="179.6" x2="779.9" y2="244.6" stroke="#5c5c5c" stroke-width="1.7"/>
<line x1="812.1" y1="93.3" x2="812.1" y2="158.5" stroke="#5c5c5c" stroke-width="1.7"/>
<line x1="812.1" y1="179.6" x2="812.1" y2="244.6" stroke="#5c5c5c" stroke-width="1.7"/>
<line x1="844.2" y1="93.3" x2="844.2" y2="158.5" stroke="#5c5c5c" stroke-width="1.7"/>
<line x1="844.2" y1="179.6" x2="844.2" y2="244.6" stroke="#5c5c5c" stroke-width="1.7"/>
<line x1="458.3" y1="158.5" x2="458.3" y2="179.6" stroke="#333" stroke-width="0.7"/>
<line x1="490.5" y1="158.5" x2="490.5" y2="179.6" stroke="#333" stroke-width="0.7"/>
<line x1="522.6" y1="158.5" x2="522.6" y2="179.6" stroke="#333" stroke-width="0.7"/>
<line x1="554.8" y1="158.5" x2="554.8" y2="179.6" stroke="#333" stroke-width="0.7"/>
<line x1="586.9" y1="158.5" x2="586.9" y2="179.6" stroke="#333" stroke-width="0.7"/>
<line x1="619.1" y1="158.5" x2="619.1" y2="179.6" stroke="#333" stroke-width="0.7"/>
<line x1="651.3" y1="158.5" x2="651.3" y2="179.6" stroke="#333" stroke-width="0.7"/>
<line x1="683.4" y1="158.5" x2="683.4" y2="179.6" stroke="#333" stroke-width="0.7"/>
<line x1="715.6" y1="158.5" x2="715.6" y2="179.6" stroke="#333" stroke-width="0.7"/>
<line x1="747.7" y1="158.5" x2="747.7" y2="179.6" stroke="#333" stroke-width="0.7"/>
<line x1="779.9" y1="158.5" x2="779.9" y2="179.6" stroke="#333" stroke-width="0.7"/>
<line x1="812.1" y1="158.5" x2="812.1" y2="179.6" stroke="#333" stroke-width="0.7"/>
<line x1="844.2" y1="158.5" x2="844.2" y2="179.6" stroke="#333" stroke-width="0.7"/>
<line x1="876.4" y1="158.5" x2="876.4" y2="179.6" stroke="#333" stroke-width="0.7"/>
<line x1="479.9" y1="228.0" x2="479.9" y2="244.6" stroke="#555" stroke-width="1.0"/>
<line x1="464.3" y1="244.6" x2="479.9" y2="244.6" stroke="#b040b0" stroke-width="1.8"/>
<circle cx="462.3" cy="232.6" r="2.1" fill="none" stroke="#e014e0" stroke-width="0.95"/>
<rect x="460.3" y="236.4" width="4.2" height="4.8" fill="none" stroke="#e014e0" stroke-width="0.95"/>
<rect x="483.8" y="235.5" width="3.2" height="5.0" fill="none" stroke="#e014e0" stroke-width="0.95"/>
<path d="M479.9 229.5l5 3.5-5 3.5" fill="none" stroke="#666" stroke-width="0.7"/>
<rect x="469.8" y="238.0" width="4.0" height="2.8" fill="#d89850" opacity="0.75"/>
<path d="M468.4 228.0q3 5 6 5" fill="none" stroke="#666" stroke-width="0.7"/>
<line x1="501.5" y1="228.0" x2="501.5" y2="244.6" stroke="#555" stroke-width="1.0"/>
<line x1="501.5" y1="244.6" x2="516.6" y2="244.6" stroke="#b040b0" stroke-width="1.8"/>
<circle cx="518.6" cy="232.6" r="2.1" fill="none" stroke="#e014e0" stroke-width="0.95"/>
<rect x="516.6" y="236.4" width="4.2" height="4.8" fill="none" stroke="#e014e0" stroke-width="0.95"/>
<rect x="495.4" y="235.5" width="3.2" height="5.0" fill="none" stroke="#e014e0" stroke-width="0.95"/>
<path d="M501.5 229.5l-5 3.5 5 3.5" fill="none" stroke="#666" stroke-width="0.7"/>
<rect x="508.6" y="238.0" width="4.0" height="2.8" fill="#d89850" opacity="0.75"/>
<path d="M500.5 228.0q3 5 6 5" fill="none" stroke="#666" stroke-width="0.7"/>
<line x1="544.2" y1="93.3" x2="544.2" y2="110.2" stroke="#555" stroke-width="1.0"/>
<line x1="528.6" y1="93.3" x2="544.2" y2="93.3" stroke="#b040b0" stroke-width="1.8"/>
<rect x="524.6" y="95.9" width="4.2" height="4.8" fill="none" stroke="#e014e0" stroke-width="0.95"/>
<circle cx="526.6" cy="104.7" r="2.1" fill="none" stroke="#e014e0" stroke-width="0.95"/>
<rect x="548.1" y="96.3" width="3.2" height="5.0" fill="none" stroke="#e014e0" stroke-width="0.95"/>
<path d="M544.2 100.8l5 3.5-5 3.5" fill="none" stroke="#666" stroke-width="0.7"/>
<rect x="534.1" y="98.3" width="4.0" height="2.8" fill="#d89850" opacity="0.75"/>
<path d="M532.7 110.2q3-5 6-5" fill="none" stroke="#666" stroke-width="0.7"/>
<line x1="544.2" y1="228.0" x2="544.2" y2="244.6" stroke="#555" stroke-width="1.0"/>
<line x1="528.6" y1="244.6" x2="544.2" y2="244.6" stroke="#b040b0" stroke-width="1.8"/>
<circle cx="526.6" cy="232.6" r="2.1" fill="none" stroke="#e014e0" stroke-width="0.95"/>
<rect x="524.6" y="236.4" width="4.2" height="4.8" fill="none" stroke="#e014e0" stroke-width="0.95"/>
<rect x="548.1" y="235.5" width="3.2" height="5.0" fill="none" stroke="#e014e0" stroke-width="0.95"/>
<path d="M544.2 229.5l5 3.5-5 3.5" fill="none" stroke="#666" stroke-width="0.7"/>
<rect x="534.1" y="238.0" width="4.0" height="2.8" fill="#d89850" opacity="0.75"/>
<path d="M532.7 228.0q3 5 6 5" fill="none" stroke="#666" stroke-width="0.7"/>
<line x1="565.8" y1="93.3" x2="565.8" y2="110.2" stroke="#555" stroke-width="1.0"/>
<line x1="565.8" y1="93.3" x2="580.9" y2="93.3" stroke="#b040b0" stroke-width="1.8"/>
<rect x="580.9" y="95.9" width="4.2" height="4.8" fill="none" stroke="#e014e0" stroke-width="0.95"/>
<circle cx="582.9" cy="104.7" r="2.1" fill="none" stroke="#e014e0" stroke-width="0.95"/>
<rect x="559.7" y="96.3" width="3.2" height="5.0" fill="none" stroke="#e014e0" stroke-width="0.95"/>
<path d="M565.8 100.8l-5 3.5 5 3.5" fill="none" stroke="#666" stroke-width="0.7"/>
<rect x="572.9" y="98.3" width="4.0" height="2.8" fill="#d89850" opacity="0.75"/>
<path d="M564.9 110.2q3-5 6-5" fill="none" stroke="#666" stroke-width="0.7"/>
<line x1="565.8" y1="228.0" x2="565.8" y2="244.6" stroke="#555" stroke-width="1.0"/>
<line x1="565.8" y1="244.6" x2="580.9" y2="244.6" stroke="#b040b0" stroke-width="1.8"/>
<circle cx="582.9" cy="232.6" r="2.1" fill="none" stroke="#e014e0" stroke-width="0.95"/>
<rect x="580.9" y="236.4" width="4.2" height="4.8" fill="none" stroke="#e014e0" stroke-width="0.95"/>
<rect x="559.7" y="235.5" width="3.2" height="5.0" fill="none" stroke="#e014e0" stroke-width="0.95"/>
<path d="M565.8 229.5l-5 3.5 5 3.5" fill="none" stroke="#666" stroke-width="0.7"/>
<rect x="572.9" y="238.0" width="4.0" height="2.8" fill="#d89850" opacity="0.75"/>
<path d="M564.9 228.0q3 5 6 5" fill="none" stroke="#666" stroke-width="0.7"/>
<line x1="608.5" y1="93.3" x2="608.5" y2="110.2" stroke="#555" stroke-width="1.0"/>
<line x1="592.9" y1="93.3" x2="608.5" y2="93.3" stroke="#b040b0" stroke-width="1.8"/>
<rect x="588.9" y="95.9" width="4.2" height="4.8" fill="none" stroke="#e014e0" stroke-width="0.95"/>
<circle cx="590.9" cy="104.7" r="2.1" fill="none" stroke="#e014e0" stroke-width="0.95"/>
<rect x="612.4" y="96.3" width="3.2" height="5.0" fill="none" stroke="#e014e0" stroke-width="0.95"/>
<path d="M608.5 100.8l5 3.5-5 3.5" fill="none" stroke="#666" stroke-width="0.7"/>
<rect x="598.4" y="98.3" width="4.0" height="2.8" fill="#d89850" opacity="0.75"/>
<path d="M597.0 110.2q3-5 6-5" fill="none" stroke="#666" stroke-width="0.7"/>
<line x1="608.5" y1="228.0" x2="608.5" y2="244.6" stroke="#555" stroke-width="1.0"/>
<line x1="592.9" y1="244.6" x2="608.5" y2="244.6" stroke="#b040b0" stroke-width="1.8"/>
<circle cx="590.9" cy="232.6" r="2.1" fill="none" stroke="#e014e0" stroke-width="0.95"/>
<rect x="588.9" y="236.4" width="4.2" height="4.8" fill="none" stroke="#e014e0" stroke-width="0.95"/>
<rect x="612.4" y="235.5" width="3.2" height="5.0" fill="none" stroke="#e014e0" stroke-width="0.95"/>
<path d="M608.5 229.5l5 3.5-5 3.5" fill="none" stroke="#666" stroke-width="0.7"/>
<rect x="598.4" y="238.0" width="4.0" height="2.8" fill="#d89850" opacity="0.75"/>
<path d="M597.0 228.0q3 5 6 5" fill="none" stroke="#666" stroke-width="0.7"/>
<line x1="630.1" y1="93.3" x2="630.1" y2="110.2" stroke="#555" stroke-width="1.0"/>
<line x1="630.1" y1="93.3" x2="645.3" y2="93.3" stroke="#b040b0" stroke-width="1.8"/>
<rect x="645.3" y="95.9" width="4.2" height="4.8" fill="none" stroke="#e014e0" stroke-width="0.95"/>
<circle cx="647.3" cy="104.7" r="2.1" fill="none" stroke="#e014e0" stroke-width="0.95"/>
<rect x="624.0" y="96.3" width="3.2" height="5.0" fill="none" stroke="#e014e0" stroke-width="0.95"/>
<path d="M630.1 100.8l-5 3.5 5 3.5" fill="none" stroke="#666" stroke-width="0.7"/>
<rect x="637.3" y="98.3" width="4.0" height="2.8" fill="#d89850" opacity="0.75"/>
<path d="M629.2 110.2q3-5 6-5" fill="none" stroke="#666" stroke-width="0.7"/>
<line x1="630.1" y1="228.0" x2="630.1" y2="244.6" stroke="#555" stroke-width="1.0"/>
<line x1="630.1" y1="244.6" x2="645.3" y2="244.6" stroke="#b040b0" stroke-width="1.8"/>
<circle cx="647.3" cy="232.6" r="2.1" fill="none" stroke="#e014e0" stroke-width="0.95"/>
<rect x="645.3" y="236.4" width="4.2" height="4.8" fill="none" stroke="#e014e0" stroke-width="0.95"/>
<rect x="624.0" y="235.5" width="3.2" height="5.0" fill="none" stroke="#e014e0" stroke-width="0.95"/>
<path d="M630.1 229.5l-5 3.5 5 3.5" fill="none" stroke="#666" stroke-width="0.7"/>
<rect x="637.3" y="238.0" width="4.0" height="2.8" fill="#d89850" opacity="0.75"/>
<path d="M629.2 228.0q3 5 6 5" fill="none" stroke="#666" stroke-width="0.7"/>
<line x1="672.8" y1="93.3" x2="672.8" y2="110.2" stroke="#555" stroke-width="1.0"/>
<line x1="657.3" y1="93.3" x2="672.8" y2="93.3" stroke="#b040b0" stroke-width="1.8"/>
<rect x="653.3" y="95.9" width="4.2" height="4.8" fill="none" stroke="#e014e0" stroke-width="0.95"/>
<circle cx="655.3" cy="104.7" r="2.1" fill="none" stroke="#e014e0" stroke-width="0.95"/>
<rect x="676.7" y="96.3" width="3.2" height="5.0" fill="none" stroke="#e014e0" stroke-width="0.95"/>
<path d="M672.8 100.8l5 3.5-5 3.5" fill="none" stroke="#666" stroke-width="0.7"/>
<rect x="662.8" y="98.3" width="4.0" height="2.8" fill="#d89850" opacity="0.75"/>
<path d="M661.3 110.2q3-5 6-5" fill="none" stroke="#666" stroke-width="0.7"/>
<line x1="672.8" y1="228.0" x2="672.8" y2="244.6" stroke="#555" stroke-width="1.0"/>
<line x1="657.3" y1="244.6" x2="672.8" y2="244.6" stroke="#b040b0" stroke-width="1.8"/>
<circle cx="655.3" cy="232.6" r="2.1" fill="none" stroke="#e014e0" stroke-width="0.95"/>
<rect x="653.3" y="236.4" width="4.2" height="4.8" fill="none" stroke="#e014e0" stroke-width="0.95"/>
<rect x="676.7" y="235.5" width="3.2" height="5.0" fill="none" stroke="#e014e0" stroke-width="0.95"/>
<path d="M672.8 229.5l5 3.5-5 3.5" fill="none" stroke="#666" stroke-width="0.7"/>
<rect x="662.8" y="238.0" width="4.0" height="2.8" fill="#d89850" opacity="0.75"/>
<path d="M661.3 228.0q3 5 6 5" fill="none" stroke="#666" stroke-width="0.7"/>
<line x1="694.4" y1="228.0" x2="694.4" y2="244.6" stroke="#555" stroke-width="1.0"/>
<line x1="694.4" y1="244.6" x2="709.6" y2="244.6" stroke="#b040b0" stroke-width="1.8"/>
<circle cx="711.6" cy="232.6" r="2.1" fill="none" stroke="#e014e0" stroke-width="0.95"/>
<rect x="709.6" y="236.4" width="4.2" height="4.8" fill="none" stroke="#e014e0" stroke-width="0.95"/>
<rect x="688.3" y="235.5" width="3.2" height="5.0" fill="none" stroke="#e014e0" stroke-width="0.95"/>
<path d="M694.4 229.5l-5 3.5 5 3.5" fill="none" stroke="#666" stroke-width="0.7"/>
<rect x="701.6" y="238.0" width="4.0" height="2.8" fill="#d89850" opacity="0.75"/>
<path d="M693.5 228.0q3 5 6 5" fill="none" stroke="#666" stroke-width="0.7"/>
<line x1="737.1" y1="93.3" x2="737.1" y2="110.2" stroke="#555" stroke-width="1.0"/>
<line x1="721.6" y1="93.3" x2="737.1" y2="93.3" stroke="#b040b0" stroke-width="1.8"/>
<rect x="717.6" y="95.9" width="4.2" height="4.8" fill="none" stroke="#e014e0" stroke-width="0.95"/>
<circle cx="719.6" cy="104.7" r="2.1" fill="none" stroke="#e014e0" stroke-width="0.95"/>
<rect x="741.0" y="96.3" width="3.2" height="5.0" fill="none" stroke="#e014e0" stroke-width="0.95"/>
<path d="M737.1 100.8l5 3.5-5 3.5" fill="none" stroke="#666" stroke-width="0.7"/>
<rect x="727.1" y="98.3" width="4.0" height="2.8" fill="#d89850" opacity="0.75"/>
<path d="M725.7 110.2q3-5 6-5" fill="none" stroke="#666" stroke-width="0.7"/>
<line x1="737.1" y1="228.0" x2="737.1" y2="244.6" stroke="#555" stroke-width="1.0"/>
<line x1="721.6" y1="244.6" x2="737.1" y2="244.6" stroke="#b040b0" stroke-width="1.8"/>
<circle cx="719.6" cy="232.6" r="2.1" fill="none" stroke="#e014e0" stroke-width="0.95"/>
<rect x="717.6" y="236.4" width="4.2" height="4.8" fill="none" stroke="#e014e0" stroke-width="0.95"/>
<rect x="741.0" y="235.5" width="3.2" height="5.0" fill="none" stroke="#e014e0" stroke-width="0.95"/>
<path d="M737.1 229.5l5 3.5-5 3.5" fill="none" stroke="#666" stroke-width="0.7"/>
<rect x="727.1" y="238.0" width="4.0" height="2.8" fill="#d89850" opacity="0.75"/>
<path d="M725.7 228.0q3 5 6 5" fill="none" stroke="#666" stroke-width="0.7"/>
<line x1="758.7" y1="93.3" x2="758.7" y2="110.2" stroke="#555" stroke-width="1.0"/>
<line x1="758.7" y1="93.3" x2="773.9" y2="93.3" stroke="#b040b0" stroke-width="1.8"/>
<rect x="773.9" y="95.9" width="4.2" height="4.8" fill="none" stroke="#e014e0" stroke-width="0.95"/>
<circle cx="775.9" cy="104.7" r="2.1" fill="none" stroke="#e014e0" stroke-width="0.95"/>
<rect x="752.6" y="96.3" width="3.2" height="5.0" fill="none" stroke="#e014e0" stroke-width="0.95"/>
<path d="M758.7 100.8l-5 3.5 5 3.5" fill="none" stroke="#666" stroke-width="0.7"/>
<rect x="765.9" y="98.3" width="4.0" height="2.8" fill="#d89850" opacity="0.75"/>
<path d="M757.8 110.2q3-5 6-5" fill="none" stroke="#666" stroke-width="0.7"/>
<line x1="758.7" y1="228.0" x2="758.7" y2="244.6" stroke="#555" stroke-width="1.0"/>
<line x1="758.7" y1="244.6" x2="773.9" y2="244.6" stroke="#b040b0" stroke-width="1.8"/>
<circle cx="775.9" cy="232.6" r="2.1" fill="none" stroke="#e014e0" stroke-width="0.95"/>
<rect x="773.9" y="236.4" width="4.2" height="4.8" fill="none" stroke="#e014e0" stroke-width="0.95"/>
<rect x="752.6" y="235.5" width="3.2" height="5.0" fill="none" stroke="#e014e0" stroke-width="0.95"/>
<path d="M758.7 229.5l-5 3.5 5 3.5" fill="none" stroke="#666" stroke-width="0.7"/>
<rect x="765.9" y="238.0" width="4.0" height="2.8" fill="#d89850" opacity="0.75"/>
<path d="M757.8 228.0q3 5 6 5" fill="none" stroke="#666" stroke-width="0.7"/>
<line x1="801.5" y1="93.3" x2="801.5" y2="110.2" stroke="#555" stroke-width="1.0"/>
<line x1="785.9" y1="93.3" x2="801.5" y2="93.3" stroke="#b040b0" stroke-width="1.8"/>
<rect x="781.9" y="95.9" width="4.2" height="4.8" fill="none" stroke="#e014e0" stroke-width="0.95"/>
<circle cx="783.9" cy="104.7" r="2.1" fill="none" stroke="#e014e0" stroke-width="0.95"/>
<rect x="805.4" y="96.3" width="3.2" height="5.0" fill="none" stroke="#e014e0" stroke-width="0.95"/>
<path d="M801.5 100.8l5 3.5-5 3.5" fill="none" stroke="#666" stroke-width="0.7"/>
<rect x="791.4" y="98.3" width="4.0" height="2.8" fill="#d89850" opacity="0.75"/>
<path d="M790.0 110.2q3-5 6-5" fill="none" stroke="#666" stroke-width="0.7"/>
<line x1="801.5" y1="228.0" x2="801.5" y2="244.6" stroke="#555" stroke-width="1.0"/>
<line x1="785.9" y1="244.6" x2="801.5" y2="244.6" stroke="#b040b0" stroke-width="1.8"/>
<circle cx="783.9" cy="232.6" r="2.1" fill="none" stroke="#e014e0" stroke-width="0.95"/>
<rect x="781.9" y="236.4" width="4.2" height="4.8" fill="none" stroke="#e014e0" stroke-width="0.95"/>
<rect x="805.4" y="235.5" width="3.2" height="5.0" fill="none" stroke="#e014e0" stroke-width="0.95"/>
<path d="M801.5 229.5l5 3.5-5 3.5" fill="none" stroke="#666" stroke-width="0.7"/>
<rect x="791.4" y="238.0" width="4.0" height="2.8" fill="#d89850" opacity="0.75"/>
<path d="M790.0 228.0q3 5 6 5" fill="none" stroke="#666" stroke-width="0.7"/>
<line x1="823.1" y1="228.0" x2="823.1" y2="244.6" stroke="#555" stroke-width="1.0"/>
<line x1="823.1" y1="244.6" x2="838.2" y2="244.6" stroke="#b040b0" stroke-width="1.8"/>
<circle cx="840.2" cy="232.6" r="2.1" fill="none" stroke="#e014e0" stroke-width="0.95"/>
<rect x="838.2" y="236.4" width="4.2" height="4.8" fill="none" stroke="#e014e0" stroke-width="0.95"/>
<rect x="817.0" y="235.5" width="3.2" height="5.0" fill="none" stroke="#e014e0" stroke-width="0.95"/>
<path d="M823.1 229.5l-5 3.5 5 3.5" fill="none" stroke="#666" stroke-width="0.7"/>
<rect x="830.2" y="238.0" width="4.0" height="2.8" fill="#d89850" opacity="0.75"/>
<path d="M822.1 228.0q3 5 6 5" fill="none" stroke="#666" stroke-width="0.7"/>
<line x1="865.8" y1="228.0" x2="865.8" y2="244.6" stroke="#555" stroke-width="1.0"/>
<line x1="850.2" y1="244.6" x2="865.8" y2="244.6" stroke="#b040b0" stroke-width="1.8"/>
<circle cx="848.2" cy="232.6" r="2.1" fill="none" stroke="#e014e0" stroke-width="0.95"/>
<rect x="846.2" y="236.4" width="4.2" height="4.8" fill="none" stroke="#e014e0" stroke-width="0.95"/>
<rect x="869.7" y="235.5" width="3.2" height="5.0" fill="none" stroke="#e014e0" stroke-width="0.95"/>
<path d="M865.8 229.5l5 3.5-5 3.5" fill="none" stroke="#666" stroke-width="0.7"/>
<rect x="855.7" y="238.0" width="4.0" height="2.8" fill="#d89850" opacity="0.75"/>
<path d="M854.3 228.0q3 5 6 5" fill="none" stroke="#666" stroke-width="0.7"/>
<rect x="455.6" y="90.6" width="5.4" height="5.4" fill="#7c7c7c" stroke="none" stroke-width="1"/>
<rect x="455.6" y="155.8" width="5.4" height="5.4" fill="#7c7c7c" stroke="none" stroke-width="1"/>
<rect x="455.6" y="176.9" width="5.4" height="5.4" fill="#7c7c7c" stroke="none" stroke-width="1"/>
<rect x="455.6" y="241.9" width="5.4" height="5.4" fill="#7c7c7c" stroke="none" stroke-width="1"/>
<rect x="487.8" y="90.6" width="5.4" height="5.4" fill="#7c7c7c" stroke="none" stroke-width="1"/>
<rect x="487.8" y="155.8" width="5.4" height="5.4" fill="#7c7c7c" stroke="none" stroke-width="1"/>
<rect x="487.8" y="176.9" width="5.4" height="5.4" fill="#7c7c7c" stroke="none" stroke-width="1"/>
<rect x="487.8" y="241.9" width="5.4" height="5.4" fill="#7c7c7c" stroke="none" stroke-width="1"/>
<rect x="519.9" y="90.6" width="5.4" height="5.4" fill="#7c7c7c" stroke="none" stroke-width="1"/>
<rect x="519.9" y="155.8" width="5.4" height="5.4" fill="#7c7c7c" stroke="none" stroke-width="1"/>
<rect x="519.9" y="176.9" width="5.4" height="5.4" fill="#7c7c7c" stroke="none" stroke-width="1"/>
<rect x="519.9" y="241.9" width="5.4" height="5.4" fill="#7c7c7c" stroke="none" stroke-width="1"/>
<rect x="584.2" y="90.6" width="5.4" height="5.4" fill="#7c7c7c" stroke="none" stroke-width="1"/>
<rect x="584.2" y="155.8" width="5.4" height="5.4" fill="#7c7c7c" stroke="none" stroke-width="1"/>
<rect x="584.2" y="176.9" width="5.4" height="5.4" fill="#7c7c7c" stroke="none" stroke-width="1"/>
<rect x="584.2" y="241.9" width="5.4" height="5.4" fill="#7c7c7c" stroke="none" stroke-width="1"/>
<rect x="648.6" y="90.6" width="5.4" height="5.4" fill="#7c7c7c" stroke="none" stroke-width="1"/>
<rect x="648.6" y="155.8" width="5.4" height="5.4" fill="#7c7c7c" stroke="none" stroke-width="1"/>
<rect x="648.6" y="176.9" width="5.4" height="5.4" fill="#7c7c7c" stroke="none" stroke-width="1"/>
<rect x="648.6" y="241.9" width="5.4" height="5.4" fill="#7c7c7c" stroke="none" stroke-width="1"/>
<rect x="712.9" y="90.6" width="5.4" height="5.4" fill="#7c7c7c" stroke="none" stroke-width="1"/>
<rect x="712.9" y="155.8" width="5.4" height="5.4" fill="#7c7c7c" stroke="none" stroke-width="1"/>
<rect x="712.9" y="176.9" width="5.4" height="5.4" fill="#7c7c7c" stroke="none" stroke-width="1"/>
<rect x="712.9" y="241.9" width="5.4" height="5.4" fill="#7c7c7c" stroke="none" stroke-width="1"/>
<rect x="777.2" y="90.6" width="5.4" height="5.4" fill="#7c7c7c" stroke="none" stroke-width="1"/>
<rect x="777.2" y="155.8" width="5.4" height="5.4" fill="#7c7c7c" stroke="none" stroke-width="1"/>
<rect x="777.2" y="176.9" width="5.4" height="5.4" fill="#7c7c7c" stroke="none" stroke-width="1"/>
<rect x="777.2" y="241.9" width="5.4" height="5.4" fill="#7c7c7c" stroke="none" stroke-width="1"/>
<rect x="841.5" y="90.6" width="5.4" height="5.4" fill="#7c7c7c" stroke="none" stroke-width="1"/>
<rect x="841.5" y="155.8" width="5.4" height="5.4" fill="#7c7c7c" stroke="none" stroke-width="1"/>
<rect x="841.5" y="176.9" width="5.4" height="5.4" fill="#7c7c7c" stroke="none" stroke-width="1"/>
<rect x="841.5" y="241.9" width="5.4" height="5.4" fill="#7c7c7c" stroke="none" stroke-width="1"/>
<rect x="873.7" y="90.6" width="5.4" height="5.4" fill="#7c7c7c" stroke="none" stroke-width="1"/>
<rect x="873.7" y="155.8" width="5.4" height="5.4" fill="#7c7c7c" stroke="none" stroke-width="1"/>
<rect x="873.7" y="176.9" width="5.4" height="5.4" fill="#7c7c7c" stroke="none" stroke-width="1"/>
<rect x="873.7" y="241.9" width="5.4" height="5.4" fill="#7c7c7c" stroke="none" stroke-width="1"/>
<rect x="548.1" y="86.7" width="13.4" height="5.4" fill="none" stroke="#d89850" stroke-width="1.0"/>
<rect x="549.3" y="87.9" width="11.0" height="3.4" fill="#d89850" opacity="0.55"/>
<rect x="612.4" y="86.7" width="13.4" height="5.4" fill="none" stroke="#d89850" stroke-width="1.0"/>
<rect x="613.6" y="87.9" width="11.0" height="3.4" fill="#d89850" opacity="0.55"/>
<rect x="676.7" y="86.7" width="13.4" height="5.4" fill="none" stroke="#d89850" stroke-width="1.0"/>
<rect x="677.9" y="87.9" width="11.0" height="3.4" fill="#d89850" opacity="0.55"/>
<rect x="741.0" y="86.7" width="13.4" height="5.4" fill="none" stroke="#d89850" stroke-width="1.0"/>
<rect x="742.2" y="87.9" width="11.0" height="3.4" fill="#d89850" opacity="0.55"/>
<rect x="483.8" y="246.0" width="13.4" height="5.6" fill="none" stroke="#d89850" stroke-width="1.0"/>
<rect x="485.0" y="247.2" width="11.0" height="3.6" fill="#d89850" opacity="0.55"/>
<rect x="548.1" y="246.0" width="13.4" height="5.6" fill="none" stroke="#d89850" stroke-width="1.0"/>
<rect x="549.3" y="247.2" width="11.0" height="3.6" fill="#d89850" opacity="0.55"/>
<rect x="612.4" y="246.0" width="13.4" height="5.6" fill="none" stroke="#d89850" stroke-width="1.0"/>
<rect x="613.6" y="247.2" width="11.0" height="3.6" fill="#d89850" opacity="0.55"/>
<rect x="676.7" y="246.0" width="13.4" height="5.6" fill="none" stroke="#d89850" stroke-width="1.0"/>
<rect x="677.9" y="247.2" width="11.0" height="3.6" fill="#d89850" opacity="0.55"/>
<rect x="741.0" y="246.0" width="13.4" height="5.6" fill="none" stroke="#d89850" stroke-width="1.0"/>
<rect x="742.2" y="247.2" width="11.0" height="3.6" fill="#d89850" opacity="0.55"/>
<rect x="805.4" y="246.0" width="13.4" height="5.6" fill="none" stroke="#d89850" stroke-width="1.0"/>
<rect x="806.6" y="247.2" width="11.0" height="3.6" fill="#d89850" opacity="0.55"/>
<line x1="689.4" y1="93.3" x2="707.4" y2="93.3" stroke="#b040b0" stroke-width="1.8"/>
<rect x="683.4" y="94.8" width="12.6" height="33.5" fill="none" stroke="#555" stroke-width="1.0"/>
<rect x="683.9" y="95.1" width="11.6" height="7.6" fill="none" stroke="#4a4a4a" stroke-width="0.8"/>
<rect x="686.2" y="96.9" width="6.5" height="4.0" fill="none" stroke="#e014e0" stroke-width="1.0"/>
<path d="M696.0 96.3l3 2.5-3 2.5" fill="none" stroke="#666" stroke-width="0.6"/>
<rect x="683.9" y="103.3" width="11.6" height="7.6" fill="none" stroke="#4a4a4a" stroke-width="0.8"/>
<rect x="686.2" y="105.1" width="6.5" height="4.0" fill="none" stroke="#e014e0" stroke-width="1.0"/>
<path d="M696.0 104.5l3 2.5-3 2.5" fill="none" stroke="#666" stroke-width="0.6"/>
<rect x="683.9" y="111.5" width="11.6" height="7.6" fill="none" stroke="#4a4a4a" stroke-width="0.8"/>
<rect x="686.2" y="113.3" width="6.5" height="4.0" fill="none" stroke="#e014e0" stroke-width="1.0"/>
<path d="M696.0 112.7l3 2.5-3 2.5" fill="none" stroke="#666" stroke-width="0.6"/>
<rect x="683.9" y="119.7" width="11.6" height="7.6" fill="none" stroke="#4a4a4a" stroke-width="0.8"/>
<rect x="686.2" y="121.5" width="6.5" height="4.0" fill="none" stroke="#e014e0" stroke-width="1.0"/>
<path d="M696.0 120.9l3 2.5-3 2.5" fill="none" stroke="#666" stroke-width="0.6"/>
<rect x="682.9" y="127.3" width="8.0" height="30.2" fill="none" stroke="#555" stroke-width="0.9"/>
<line x1="682.9" y1="133.3" x2="690.9" y2="133.3" stroke="#444" stroke-width="0.7"/>
<line x1="682.9" y1="139.3" x2="690.9" y2="139.3" stroke="#444" stroke-width="0.7"/>
<line x1="682.9" y1="145.3" x2="690.9" y2="145.3" stroke="#444" stroke-width="0.7"/>
<line x1="682.9" y1="151.3" x2="690.9" y2="151.3" stroke="#444" stroke-width="0.7"/>
<line x1="682.9" y1="157.3" x2="690.9" y2="157.3" stroke="#444" stroke-width="0.7"/>
<line x1="707.6" y1="93.3" x2="707.6" y2="158.5" stroke="#555" stroke-width="1.0"/>
<line x1="714.8" y1="93.3" x2="714.8" y2="158.5" stroke="#555" stroke-width="1.0"/>
<rect x="707.6" y="130.3" width="7.2" height="27.2" fill="none" stroke="#4a4a4a" stroke-width="0.8"/>
<rect x="699.5" y="100.3" width="13.0" height="22.0" fill="none" stroke="#229a22" stroke-width="0.9"/>
<rect x="702.5" y="110.3" width="6.0" height="2.6" fill="#d89850" opacity="0.75"/>
<rect x="709.4" y="110.3" width="3.0" height="6.0" fill="#c8c8c8" opacity="0.6"/>
<line x1="508.5" y1="127.0" x2="520.6" y2="127.0" stroke="#6a6a6a" stroke-width="0.8"/>
<line x1="508.5" y1="130.0" x2="520.6" y2="130.0" stroke="#6a6a6a" stroke-width="0.8"/>
<line x1="508.5" y1="133.0" x2="520.6" y2="133.0" stroke="#6a6a6a" stroke-width="0.8"/>
<line x1="508.5" y1="136.0" x2="520.6" y2="136.0" stroke="#6a6a6a" stroke-width="0.8"/>
<line x1="508.5" y1="139.0" x2="520.6" y2="139.0" stroke="#6a6a6a" stroke-width="0.8"/>
<line x1="508.5" y1="142.0" x2="520.6" y2="142.0" stroke="#6a6a6a" stroke-width="0.8"/>
<line x1="508.5" y1="145.0" x2="520.6" y2="145.0" stroke="#6a6a6a" stroke-width="0.8"/>
<path d="M508.5 127l13-6" fill="none" stroke="#6a6a6a" stroke-width="0.8"/>
<line x1="508.5" y1="124.0" x2="508.5" y2="147.0" stroke="#6a6a6a" stroke-width="0.8"/>
<line x1="514.5" y1="126.0" x2="514.5" y2="140.0" stroke="#229a22" stroke-width="0.9"/>
<rect x="496.5" y="130.0" width="6.0" height="3.0" fill="#d89850" opacity="0.7"/>
<rect x="489.5" y="85.3" width="34.2" height="6.0" fill="none" stroke="#4a4a4a" stroke-width="0.8"/>
<line x1="830.1" y1="127.0" x2="842.2" y2="127.0" stroke="#6a6a6a" stroke-width="0.8"/>
<line x1="830.1" y1="130.0" x2="842.2" y2="130.0" stroke="#6a6a6a" stroke-width="0.8"/>
<line x1="830.1" y1="133.0" x2="842.2" y2="133.0" stroke="#6a6a6a" stroke-width="0.8"/>
<line x1="830.1" y1="136.0" x2="842.2" y2="136.0" stroke="#6a6a6a" stroke-width="0.8"/>
<line x1="830.1" y1="139.0" x2="842.2" y2="139.0" stroke="#6a6a6a" stroke-width="0.8"/>
<line x1="830.1" y1="142.0" x2="842.2" y2="142.0" stroke="#6a6a6a" stroke-width="0.8"/>
<line x1="830.1" y1="145.0" x2="842.2" y2="145.0" stroke="#6a6a6a" stroke-width="0.8"/>
<path d="M830.1 127l13-6" fill="none" stroke="#6a6a6a" stroke-width="0.8"/>
<line x1="830.1" y1="124.0" x2="830.1" y2="147.0" stroke="#6a6a6a" stroke-width="0.8"/>
<line x1="836.1" y1="126.0" x2="836.1" y2="140.0" stroke="#229a22" stroke-width="0.9"/>
<rect x="818.1" y="130.0" width="6.0" height="3.0" fill="#d89850" opacity="0.7"/>
<rect x="811.1" y="85.3" width="34.2" height="6.0" fill="none" stroke="#4a4a4a" stroke-width="0.8"/>
<rect x="455.5" y="82.6" width="67.0" height="5.7" fill="none" stroke="#4a4a4a" stroke-width="0.8"/>
<line x1="444.7" y1="93.3" x2="444.7" y2="180.5" stroke="#555" stroke-width="0.9"/>
<line x1="444.7" y1="93.3" x2="459.6" y2="93.3" stroke="#555" stroke-width="0.9"/>
<path d="M524.6 90.5L531.1 80" fill="none" stroke="#b040b0" stroke-width="0.9"/>
<path d="M811.1 90L803.1 79" fill="none" stroke="#b040b0" stroke-width="0.9"/>
<rect x="839.0" y="82.5" width="38.0" height="6.0" fill="none" stroke="#444" stroke-width="0.8"/>
<line x1="877.0" y1="82.0" x2="885.3" y2="82.0" stroke="#b040b0" stroke-width="0.9"/>
<path d="M453 156h12v7" fill="none" stroke="#d89850" stroke-width="1.6"/>
<rect x="417.0" y="152.5" width="24.0" height="2.6" fill="#c8c8c8" opacity="0.75"/>
<line x1="440.0" y1="156.0" x2="453.0" y2="156.0" stroke="#b040b0" stroke-width="0.9"/>
<line x1="474.4" y1="77.9" x2="474.4" y2="260.2" stroke="#26b826" stroke-width="1.15"/>
<line x1="506.5" y1="77.9" x2="506.5" y2="260.2" stroke="#26b826" stroke-width="1.15"/>
<line x1="538.7" y1="77.9" x2="538.7" y2="260.2" stroke="#26b826" stroke-width="1.15"/>
<line x1="570.9" y1="77.9" x2="570.9" y2="260.2" stroke="#26b826" stroke-width="1.15"/>
<line x1="603.0" y1="77.9" x2="603.0" y2="260.2" stroke="#26b826" stroke-width="1.15"/>
<line x1="635.2" y1="77.9" x2="635.2" y2="260.2" stroke="#26b826" stroke-width="1.15"/>
<line x1="667.3" y1="77.9" x2="667.3" y2="260.2" stroke="#26b826" stroke-width="1.15"/>
<line x1="699.5" y1="77.9" x2="699.5" y2="260.2" stroke="#26b826" stroke-width="1.15"/>
<line x1="731.7" y1="77.9" x2="731.7" y2="260.2" stroke="#26b826" stroke-width="1.15"/>
<line x1="763.8" y1="77.9" x2="763.8" y2="260.2" stroke="#26b826" stroke-width="1.15"/>
<line x1="796.0" y1="77.9" x2="796.0" y2="260.2" stroke="#26b826" stroke-width="1.15"/>
<line x1="828.1" y1="77.9" x2="828.1" y2="260.2" stroke="#26b826" stroke-width="1.15"/>
<line x1="860.3" y1="77.9" x2="860.3" y2="260.2" stroke="#26b826" stroke-width="1.15"/>
<line x1="458.3" y1="77.9" x2="458.3" y2="119.8" stroke="#229a22" stroke-width="1.5"/>
<line x1="458.3" y1="218.2" x2="458.3" y2="260.2" stroke="#229a22" stroke-width="1.5"/>
<line x1="490.5" y1="77.9" x2="490.5" y2="119.8" stroke="#229a22" stroke-width="1.5"/>
<line x1="490.5" y1="218.2" x2="490.5" y2="260.2" stroke="#229a22" stroke-width="1.5"/>
<line x1="522.6" y1="77.9" x2="522.6" y2="119.8" stroke="#229a22" stroke-width="1.5"/>
<line x1="522.6" y1="218.2" x2="522.6" y2="260.2" stroke="#229a22" stroke-width="1.5"/>
<line x1="554.8" y1="77.9" x2="554.8" y2="119.8" stroke="#229a22" stroke-width="1.5"/>
<line x1="554.8" y1="218.2" x2="554.8" y2="260.2" stroke="#229a22" stroke-width="1.5"/>
<line x1="586.9" y1="77.9" x2="586.9" y2="119.8" stroke="#229a22" stroke-width="1.5"/>
<line x1="586.9" y1="218.2" x2="586.9" y2="260.2" stroke="#229a22" stroke-width="1.5"/>
<line x1="619.1" y1="77.9" x2="619.1" y2="119.8" stroke="#229a22" stroke-width="1.5"/>
<line x1="619.1" y1="218.2" x2="619.1" y2="260.2" stroke="#229a22" stroke-width="1.5"/>
<line x1="651.3" y1="77.9" x2="651.3" y2="119.8" stroke="#229a22" stroke-width="1.5"/>
<line x1="651.3" y1="218.2" x2="651.3" y2="260.2" stroke="#229a22" stroke-width="1.5"/>
<line x1="683.4" y1="77.9" x2="683.4" y2="119.8" stroke="#229a22" stroke-width="1.5"/>
<line x1="683.4" y1="218.2" x2="683.4" y2="260.2" stroke="#229a22" stroke-width="1.5"/>
<line x1="715.6" y1="77.9" x2="715.6" y2="119.8" stroke="#229a22" stroke-width="1.5"/>
<line x1="715.6" y1="218.2" x2="715.6" y2="260.2" stroke="#229a22" stroke-width="1.5"/>
<line x1="747.7" y1="77.9" x2="747.7" y2="119.8" stroke="#229a22" stroke-width="1.5"/>
<line x1="747.7" y1="218.2" x2="747.7" y2="260.2" stroke="#229a22" stroke-width="1.5"/>
<line x1="779.9" y1="77.9" x2="779.9" y2="119.8" stroke="#229a22" stroke-width="1.5"/>
<line x1="779.9" y1="218.2" x2="779.9" y2="260.2" stroke="#229a22" stroke-width="1.5"/>
<line x1="812.1" y1="77.9" x2="812.1" y2="119.8" stroke="#229a22" stroke-width="1.5"/>
<line x1="812.1" y1="218.2" x2="812.1" y2="260.2" stroke="#229a22" stroke-width="1.5"/>
<line x1="844.2" y1="77.9" x2="844.2" y2="119.8" stroke="#229a22" stroke-width="1.5"/>
<line x1="844.2" y1="218.2" x2="844.2" y2="260.2" stroke="#229a22" stroke-width="1.5"/>
<line x1="876.4" y1="77.9" x2="876.4" y2="119.8" stroke="#229a22" stroke-width="1.5"/>
<line x1="876.4" y1="218.2" x2="876.4" y2="260.2" stroke="#229a22" stroke-width="1.5"/>
<path d="M465.4 158.5A8 8 0 0 1 473.4 150.5" fill="none" stroke="#777" stroke-width="0.8"/>
<path d="M482.4 179.6A8 8 0 0 1 474.4 187.6" fill="none" stroke="#777" stroke-width="0.8"/>
<path d="M514.5 179.6A8 8 0 0 1 506.5 187.6" fill="none" stroke="#777" stroke-width="0.8"/>
<path d="M529.7 158.5A8 8 0 0 1 537.7 150.5" fill="none" stroke="#777" stroke-width="0.8"/>
<path d="M546.7 179.6A8 8 0 0 1 538.7 187.6" fill="none" stroke="#777" stroke-width="0.8"/>
<path d="M561.9 158.5A8 8 0 0 1 569.9 150.5" fill="none" stroke="#777" stroke-width="0.8"/>
<path d="M578.9 179.6A8 8 0 0 1 570.9 187.6" fill="none" stroke="#777" stroke-width="0.8"/>
<path d="M594.0 158.5A8 8 0 0 1 602.0 150.5" fill="none" stroke="#777" stroke-width="0.8"/>
<path d="M611.0 179.6A8 8 0 0 1 603.0 187.6" fill="none" stroke="#777" stroke-width="0.8"/>
<path d="M626.2 158.5A8 8 0 0 1 634.2 150.5" fill="none" stroke="#777" stroke-width="0.8"/>
<path d="M643.2 179.6A8 8 0 0 1 635.2 187.6" fill="none" stroke="#777" stroke-width="0.8"/>
<path d="M658.3 158.5A8 8 0 0 1 666.3 150.5" fill="none" stroke="#777" stroke-width="0.8"/>
<path d="M675.3 179.6A8 8 0 0 1 667.3 187.6" fill="none" stroke="#777" stroke-width="0.8"/>
<path d="M690.5 158.5A8 8 0 0 1 698.5 150.5" fill="none" stroke="#777" stroke-width="0.8"/>
<path d="M707.5 179.6A8 8 0 0 1 699.5 187.6" fill="none" stroke="#777" stroke-width="0.8"/>
<path d="M722.7 158.5A8 8 0 0 1 730.7 150.5" fill="none" stroke="#777" stroke-width="0.8"/>
<path d="M739.7 179.6A8 8 0 0 1 731.7 187.6" fill="none" stroke="#777" stroke-width="0.8"/>
<path d="M754.8 158.5A8 8 0 0 1 762.8 150.5" fill="none" stroke="#777" stroke-width="0.8"/>
<path d="M771.8 179.6A8 8 0 0 1 763.8 187.6" fill="none" stroke="#777" stroke-width="0.8"/>
<path d="M787.0 158.5A8 8 0 0 1 795.0 150.5" fill="none" stroke="#777" stroke-width="0.8"/>
<path d="M804.0 179.6A8 8 0 0 1 796.0 187.6" fill="none" stroke="#777" stroke-width="0.8"/>
<path d="M836.1 179.6A8 8 0 0 1 828.1 187.6" fill="none" stroke="#777" stroke-width="0.8"/>
<path d="M851.3 158.5A8 8 0 0 1 859.3 150.5" fill="none" stroke="#777" stroke-width="0.8"/>
<path d="M868.3 179.6A8 8 0 0 1 860.3 187.6" fill="none" stroke="#777" stroke-width="0.8"/>
<line x1="474.4" y1="122.2" x2="474.4" y2="146.0" stroke="#e014e0" stroke-width="1.5"/>
<circle cx="474.4" cy="122.2" r="1.2" fill="none" stroke="#bbb" stroke-width="0.6"/>
<circle cx="474.4" cy="146.0" r="1.2" fill="none" stroke="#bbb" stroke-width="0.6"/>
<rect x="472.8" y="132.0" width="2.0" height="5.0" fill="#c8c8c8" opacity="0.55"/>
<rect x="472.4" y="115.0" width="4.0" height="2.8" fill="#d89850" opacity="0.75"/>
<line x1="474.4" y1="191.8" x2="474.4" y2="215.5" stroke="#30e0c8" stroke-width="1.5"/>
<circle cx="474.4" cy="191.8" r="1.2" fill="none" stroke="#bbb" stroke-width="0.6"/>
<circle cx="474.4" cy="215.5" r="1.2" fill="none" stroke="#bbb" stroke-width="0.6"/>
<rect x="472.8" y="201.0" width="2.0" height="5.0" fill="#c8c8c8" opacity="0.55"/>
<rect x="472.4" y="223.0" width="4.0" height="2.8" fill="#d89850" opacity="0.75"/>
<rect x="472.9" y="163.0" width="3.0" height="4.0" fill="#c8c8c8" opacity="0.45"/>
<rect x="472.9" y="170.6" width="3.0" height="4.0" fill="#c8c8c8" opacity="0.45"/>
<line x1="506.5" y1="191.8" x2="506.5" y2="215.5" stroke="#30e0c8" stroke-width="1.5"/>
<circle cx="506.5" cy="191.8" r="1.2" fill="none" stroke="#bbb" stroke-width="0.6"/>
<circle cx="506.5" cy="215.5" r="1.2" fill="none" stroke="#bbb" stroke-width="0.6"/>
<rect x="504.9" y="201.0" width="2.0" height="5.0" fill="#c8c8c8" opacity="0.55"/>
<rect x="504.5" y="223.0" width="4.0" height="2.8" fill="#d89850" opacity="0.75"/>
<rect x="505.0" y="163.0" width="3.0" height="4.0" fill="#c8c8c8" opacity="0.45"/>
<rect x="505.0" y="170.6" width="3.0" height="4.0" fill="#c8c8c8" opacity="0.45"/>
<line x1="538.7" y1="122.2" x2="538.7" y2="146.0" stroke="#30e0c8" stroke-width="1.5"/>
<circle cx="538.7" cy="122.2" r="1.2" fill="none" stroke="#bbb" stroke-width="0.6"/>
<circle cx="538.7" cy="146.0" r="1.2" fill="none" stroke="#bbb" stroke-width="0.6"/>
<rect x="537.1" y="132.0" width="2.0" height="5.0" fill="#c8c8c8" opacity="0.55"/>
<rect x="536.7" y="115.0" width="4.0" height="2.8" fill="#d89850" opacity="0.75"/>
<line x1="538.7" y1="191.8" x2="538.7" y2="215.5" stroke="#30e0c8" stroke-width="1.5"/>
<circle cx="538.7" cy="191.8" r="1.2" fill="none" stroke="#bbb" stroke-width="0.6"/>
<circle cx="538.7" cy="215.5" r="1.2" fill="none" stroke="#bbb" stroke-width="0.6"/>
<rect x="537.1" y="201.0" width="2.0" height="5.0" fill="#c8c8c8" opacity="0.55"/>
<rect x="536.7" y="223.0" width="4.0" height="2.8" fill="#d89850" opacity="0.75"/>
<rect x="537.2" y="163.0" width="3.0" height="4.0" fill="#c8c8c8" opacity="0.45"/>
<rect x="537.2" y="170.6" width="3.0" height="4.0" fill="#c8c8c8" opacity="0.45"/>
<line x1="570.9" y1="122.2" x2="570.9" y2="146.0" stroke="#30e0c8" stroke-width="1.5"/>
<circle cx="570.9" cy="122.2" r="1.2" fill="none" stroke="#bbb" stroke-width="0.6"/>
<circle cx="570.9" cy="146.0" r="1.2" fill="none" stroke="#bbb" stroke-width="0.6"/>
<rect x="569.3" y="132.0" width="2.0" height="5.0" fill="#c8c8c8" opacity="0.55"/>
<rect x="568.9" y="115.0" width="4.0" height="2.8" fill="#d89850" opacity="0.75"/>
<line x1="570.9" y1="191.8" x2="570.9" y2="215.5" stroke="#30e0c8" stroke-width="1.5"/>
<circle cx="570.9" cy="191.8" r="1.2" fill="none" stroke="#bbb" stroke-width="0.6"/>
<circle cx="570.9" cy="215.5" r="1.2" fill="none" stroke="#bbb" stroke-width="0.6"/>
<rect x="569.3" y="201.0" width="2.0" height="5.0" fill="#c8c8c8" opacity="0.55"/>
<rect x="568.9" y="223.0" width="4.0" height="2.8" fill="#d89850" opacity="0.75"/>
<rect x="569.4" y="163.0" width="3.0" height="4.0" fill="#c8c8c8" opacity="0.45"/>
<rect x="569.4" y="170.6" width="3.0" height="4.0" fill="#c8c8c8" opacity="0.45"/>
<line x1="603.0" y1="122.2" x2="603.0" y2="146.0" stroke="#30e0c8" stroke-width="1.5"/>
<circle cx="603.0" cy="122.2" r="1.2" fill="none" stroke="#bbb" stroke-width="0.6"/>
<circle cx="603.0" cy="146.0" r="1.2" fill="none" stroke="#bbb" stroke-width="0.6"/>
<rect x="601.4" y="132.0" width="2.0" height="5.0" fill="#c8c8c8" opacity="0.55"/>
<rect x="601.0" y="115.0" width="4.0" height="2.8" fill="#d89850" opacity="0.75"/>
<line x1="603.0" y1="191.8" x2="603.0" y2="215.5" stroke="#30e0c8" stroke-width="1.5"/>
<circle cx="603.0" cy="191.8" r="1.2" fill="none" stroke="#bbb" stroke-width="0.6"/>
<circle cx="603.0" cy="215.5" r="1.2" fill="none" stroke="#bbb" stroke-width="0.6"/>
<rect x="601.4" y="201.0" width="2.0" height="5.0" fill="#c8c8c8" opacity="0.55"/>
<rect x="601.0" y="223.0" width="4.0" height="2.8" fill="#d89850" opacity="0.75"/>
<rect x="601.5" y="163.0" width="3.0" height="4.0" fill="#c8c8c8" opacity="0.45"/>
<rect x="601.5" y="170.6" width="3.0" height="4.0" fill="#c8c8c8" opacity="0.45"/>
<line x1="635.2" y1="122.2" x2="635.2" y2="146.0" stroke="#30e0c8" stroke-width="1.5"/>
<circle cx="635.2" cy="122.2" r="1.2" fill="none" stroke="#bbb" stroke-width="0.6"/>
<circle cx="635.2" cy="146.0" r="1.2" fill="none" stroke="#bbb" stroke-width="0.6"/>
<rect x="633.6" y="132.0" width="2.0" height="5.0" fill="#c8c8c8" opacity="0.55"/>
<rect x="633.2" y="115.0" width="4.0" height="2.8" fill="#d89850" opacity="0.75"/>
<line x1="635.2" y1="191.8" x2="635.2" y2="215.5" stroke="#30e0c8" stroke-width="1.5"/>
<circle cx="635.2" cy="191.8" r="1.2" fill="none" stroke="#bbb" stroke-width="0.6"/>
<circle cx="635.2" cy="215.5" r="1.2" fill="none" stroke="#bbb" stroke-width="0.6"/>
<rect x="633.6" y="201.0" width="2.0" height="5.0" fill="#c8c8c8" opacity="0.55"/>
<rect x="633.2" y="223.0" width="4.0" height="2.8" fill="#d89850" opacity="0.75"/>
<rect x="633.7" y="163.0" width="3.0" height="4.0" fill="#c8c8c8" opacity="0.45"/>
<rect x="633.7" y="170.6" width="3.0" height="4.0" fill="#c8c8c8" opacity="0.45"/>
<line x1="667.3" y1="122.2" x2="667.3" y2="146.0" stroke="#30e0c8" stroke-width="1.5"/>
<circle cx="667.3" cy="122.2" r="1.2" fill="none" stroke="#bbb" stroke-width="0.6"/>
<circle cx="667.3" cy="146.0" r="1.2" fill="none" stroke="#bbb" stroke-width="0.6"/>
<rect x="665.7" y="132.0" width="2.0" height="5.0" fill="#c8c8c8" opacity="0.55"/>
<rect x="665.3" y="115.0" width="4.0" height="2.8" fill="#d89850" opacity="0.75"/>
<line x1="667.3" y1="191.8" x2="667.3" y2="215.5" stroke="#30e0c8" stroke-width="1.5"/>
<circle cx="667.3" cy="191.8" r="1.2" fill="none" stroke="#bbb" stroke-width="0.6"/>
<circle cx="667.3" cy="215.5" r="1.2" fill="none" stroke="#bbb" stroke-width="0.6"/>
<rect x="665.7" y="201.0" width="2.0" height="5.0" fill="#c8c8c8" opacity="0.55"/>
<rect x="665.3" y="223.0" width="4.0" height="2.8" fill="#d89850" opacity="0.75"/>
<rect x="665.8" y="163.0" width="3.0" height="4.0" fill="#c8c8c8" opacity="0.45"/>
<rect x="665.8" y="170.6" width="3.0" height="4.0" fill="#c8c8c8" opacity="0.45"/>
<line x1="699.5" y1="191.8" x2="699.5" y2="215.5" stroke="#30e0c8" stroke-width="1.5"/>
<circle cx="699.5" cy="191.8" r="1.2" fill="none" stroke="#bbb" stroke-width="0.6"/>
<circle cx="699.5" cy="215.5" r="1.2" fill="none" stroke="#bbb" stroke-width="0.6"/>
<rect x="697.9" y="201.0" width="2.0" height="5.0" fill="#c8c8c8" opacity="0.55"/>
<rect x="697.5" y="223.0" width="4.0" height="2.8" fill="#d89850" opacity="0.75"/>
<rect x="698.0" y="163.0" width="3.0" height="4.0" fill="#c8c8c8" opacity="0.45"/>
<rect x="698.0" y="170.6" width="3.0" height="4.0" fill="#c8c8c8" opacity="0.45"/>
<line x1="731.7" y1="122.2" x2="731.7" y2="146.0" stroke="#30e0c8" stroke-width="1.5"/>
<circle cx="731.7" cy="122.2" r="1.2" fill="none" stroke="#bbb" stroke-width="0.6"/>
<circle cx="731.7" cy="146.0" r="1.2" fill="none" stroke="#bbb" stroke-width="0.6"/>
<rect x="730.1" y="132.0" width="2.0" height="5.0" fill="#c8c8c8" opacity="0.55"/>
<rect x="729.7" y="115.0" width="4.0" height="2.8" fill="#d89850" opacity="0.75"/>
<line x1="731.7" y1="191.8" x2="731.7" y2="215.5" stroke="#30e0c8" stroke-width="1.5"/>
<circle cx="731.7" cy="191.8" r="1.2" fill="none" stroke="#bbb" stroke-width="0.6"/>
<circle cx="731.7" cy="215.5" r="1.2" fill="none" stroke="#bbb" stroke-width="0.6"/>
<rect x="730.1" y="201.0" width="2.0" height="5.0" fill="#c8c8c8" opacity="0.55"/>
<rect x="729.7" y="223.0" width="4.0" height="2.8" fill="#d89850" opacity="0.75"/>
<rect x="730.2" y="163.0" width="3.0" height="4.0" fill="#c8c8c8" opacity="0.45"/>
<rect x="730.2" y="170.6" width="3.0" height="4.0" fill="#c8c8c8" opacity="0.45"/>
<line x1="763.8" y1="122.2" x2="763.8" y2="146.0" stroke="#30e0c8" stroke-width="1.5"/>
<circle cx="763.8" cy="122.2" r="1.2" fill="none" stroke="#bbb" stroke-width="0.6"/>
<circle cx="763.8" cy="146.0" r="1.2" fill="none" stroke="#bbb" stroke-width="0.6"/>
<rect x="762.2" y="132.0" width="2.0" height="5.0" fill="#c8c8c8" opacity="0.55"/>
<rect x="761.8" y="115.0" width="4.0" height="2.8" fill="#d89850" opacity="0.75"/>
<line x1="763.8" y1="191.8" x2="763.8" y2="215.5" stroke="#30e0c8" stroke-width="1.5"/>
<circle cx="763.8" cy="191.8" r="1.2" fill="none" stroke="#bbb" stroke-width="0.6"/>
<circle cx="763.8" cy="215.5" r="1.2" fill="none" stroke="#bbb" stroke-width="0.6"/>
<rect x="762.2" y="201.0" width="2.0" height="5.0" fill="#c8c8c8" opacity="0.55"/>
<rect x="761.8" y="223.0" width="4.0" height="2.8" fill="#d89850" opacity="0.75"/>
<rect x="762.3" y="163.0" width="3.0" height="4.0" fill="#c8c8c8" opacity="0.45"/>
<rect x="762.3" y="170.6" width="3.0" height="4.0" fill="#c8c8c8" opacity="0.45"/>
<line x1="796.0" y1="122.2" x2="796.0" y2="146.0" stroke="#30e0c8" stroke-width="1.5"/>
<circle cx="796.0" cy="122.2" r="1.2" fill="none" stroke="#bbb" stroke-width="0.6"/>
<circle cx="796.0" cy="146.0" r="1.2" fill="none" stroke="#bbb" stroke-width="0.6"/>
<rect x="794.4" y="132.0" width="2.0" height="5.0" fill="#c8c8c8" opacity="0.55"/>
<rect x="794.0" y="115.0" width="4.0" height="2.8" fill="#d89850" opacity="0.75"/>
<line x1="796.0" y1="191.8" x2="796.0" y2="215.5" stroke="#30e0c8" stroke-width="1.5"/>
<circle cx="796.0" cy="191.8" r="1.2" fill="none" stroke="#bbb" stroke-width="0.6"/>
<circle cx="796.0" cy="215.5" r="1.2" fill="none" stroke="#bbb" stroke-width="0.6"/>
<rect x="794.4" y="201.0" width="2.0" height="5.0" fill="#c8c8c8" opacity="0.55"/>
<rect x="794.0" y="223.0" width="4.0" height="2.8" fill="#d89850" opacity="0.75"/>
<rect x="794.5" y="163.0" width="3.0" height="4.0" fill="#c8c8c8" opacity="0.45"/>
<rect x="794.5" y="170.6" width="3.0" height="4.0" fill="#c8c8c8" opacity="0.45"/>
<line x1="828.1" y1="191.8" x2="828.1" y2="215.5" stroke="#30e0c8" stroke-width="1.5"/>
<circle cx="828.1" cy="191.8" r="1.2" fill="none" stroke="#bbb" stroke-width="0.6"/>
<circle cx="828.1" cy="215.5" r="1.2" fill="none" stroke="#bbb" stroke-width="0.6"/>
<rect x="826.5" y="201.0" width="2.0" height="5.0" fill="#c8c8c8" opacity="0.55"/>
<rect x="826.1" y="223.0" width="4.0" height="2.8" fill="#d89850" opacity="0.75"/>
<rect x="826.6" y="163.0" width="3.0" height="4.0" fill="#c8c8c8" opacity="0.45"/>
<rect x="826.6" y="170.6" width="3.0" height="4.0" fill="#c8c8c8" opacity="0.45"/>
<line x1="860.3" y1="191.8" x2="860.3" y2="215.5" stroke="#30e0c8" stroke-width="1.5"/>
<circle cx="860.3" cy="191.8" r="1.2" fill="none" stroke="#bbb" stroke-width="0.6"/>
<circle cx="860.3" cy="215.5" r="1.2" fill="none" stroke="#bbb" stroke-width="0.6"/>
<rect x="858.7" y="201.0" width="2.0" height="5.0" fill="#c8c8c8" opacity="0.55"/>
<rect x="858.3" y="223.0" width="4.0" height="2.8" fill="#d89850" opacity="0.75"/>
<rect x="858.8" y="163.0" width="3.0" height="4.0" fill="#c8c8c8" opacity="0.45"/>
<rect x="858.8" y="170.6" width="3.0" height="4.0" fill="#c8c8c8" opacity="0.45"/>
<line x1="699.5" y1="100.3" x2="699.5" y2="122.3" stroke="#30e0c8" stroke-width="1.5"/>
<line x1="860.3" y1="116.0" x2="860.3" y2="146.0" stroke="#30e0c8" stroke-width="1.5"/>
<line x1="860.3" y1="116.0" x2="871.0" y2="116.0" stroke="#30e0c8" stroke-width="1.5"/>
<line x1="868.0" y1="121.0" x2="885.0" y2="121.0" stroke="#229a22" stroke-width="0.9"/>
<rect x="867.0" y="118.0" width="11.0" height="2.4" fill="#c8c8c8" opacity="0.8"/>
<rect x="868.0" y="122.5" width="9.0" height="2.4" fill="#c8c8c8" opacity="0.65"/>
<line x1="464.6" y1="163.2" x2="667.3" y2="163.2" stroke="#f2f2f2" stroke-width="1.7"/>
<line x1="667.3" y1="163.2" x2="796.0" y2="163.2" stroke="#1e4ed8" stroke-width="1.7"/>
<line x1="796.0" y1="163.2" x2="860.3" y2="163.2" stroke="#d0108c" stroke-width="1.5"/>
<rect x="455.3" y="160.2" width="6.0" height="2.2" fill="#c8c8c8" opacity="0.6"/>
<rect x="487.5" y="160.2" width="6.0" height="2.2" fill="#c8c8c8" opacity="0.6"/>
<rect x="519.6" y="160.2" width="6.0" height="2.2" fill="#c8c8c8" opacity="0.6"/>
<rect x="551.8" y="160.2" width="6.0" height="2.2" fill="#c8c8c8" opacity="0.6"/>
<rect x="583.9" y="160.2" width="6.0" height="2.2" fill="#c8c8c8" opacity="0.6"/>
<rect x="616.1" y="160.2" width="6.0" height="2.2" fill="#c8c8c8" opacity="0.6"/>
<rect x="648.3" y="160.2" width="6.0" height="2.2" fill="#c8c8c8" opacity="0.6"/>
<rect x="680.4" y="160.2" width="6.0" height="2.2" fill="#c8c8c8" opacity="0.6"/>
<rect x="712.6" y="160.2" width="6.0" height="2.2" fill="#c8c8c8" opacity="0.6"/>
<rect x="744.7" y="160.2" width="6.0" height="2.2" fill="#c8c8c8" opacity="0.6"/>
<rect x="776.9" y="160.2" width="6.0" height="2.2" fill="#c8c8c8" opacity="0.6"/>
<rect x="809.1" y="160.2" width="6.0" height="2.2" fill="#c8c8c8" opacity="0.6"/>
<rect x="841.2" y="160.2" width="6.0" height="2.2" fill="#c8c8c8" opacity="0.6"/>
<rect x="460.0" y="166.5" width="8.0" height="2.3" fill="#c8c8c8" opacity="0.6"/>
<rect x="486.0" y="165.5" width="7.0" height="2.3" fill="#c8c8c8" opacity="0.6"/>
<line x1="459.6" y1="253.3" x2="876.7" y2="253.3" stroke="#444" stroke-width="0.8"/>
<line x1="458.3" y1="260.2" x2="876.4" y2="260.2" stroke="#26b826" stroke-width="1"/>
<rect x="463.8" y="256.4" width="5.0" height="2.3" fill="#c8c8c8" opacity="0.5"/>
<rect x="479.9" y="256.4" width="5.0" height="2.3" fill="#c8c8c8" opacity="0.5"/>
<rect x="496.0" y="256.4" width="5.0" height="2.3" fill="#c8c8c8" opacity="0.5"/>
<rect x="512.1" y="256.4" width="5.0" height="2.3" fill="#c8c8c8" opacity="0.5"/>
<rect x="528.2" y="256.4" width="5.0" height="2.3" fill="#c8c8c8" opacity="0.5"/>
<rect x="544.2" y="256.4" width="5.0" height="2.3" fill="#c8c8c8" opacity="0.5"/>
<rect x="560.3" y="256.4" width="5.0" height="2.3" fill="#c8c8c8" opacity="0.5"/>
<rect x="576.4" y="256.4" width="5.0" height="2.3" fill="#c8c8c8" opacity="0.5"/>
<rect x="592.5" y="256.4" width="5.0" height="2.3" fill="#c8c8c8" opacity="0.5"/>
<rect x="608.6" y="256.4" width="5.0" height="2.3" fill="#c8c8c8" opacity="0.5"/>
<rect x="624.6" y="256.4" width="5.0" height="2.3" fill="#c8c8c8" opacity="0.5"/>
<rect x="640.7" y="256.4" width="5.0" height="2.3" fill="#c8c8c8" opacity="0.5"/>
<rect x="656.8" y="256.4" width="5.0" height="2.3" fill="#c8c8c8" opacity="0.5"/>
<rect x="672.9" y="256.4" width="5.0" height="2.3" fill="#c8c8c8" opacity="0.5"/>
<rect x="689.0" y="256.4" width="5.0" height="2.3" fill="#c8c8c8" opacity="0.5"/>
<rect x="705.0" y="256.4" width="5.0" height="2.3" fill="#c8c8c8" opacity="0.5"/>
<rect x="721.1" y="256.4" width="5.0" height="2.3" fill="#c8c8c8" opacity="0.5"/>
<rect x="737.2" y="256.4" width="5.0" height="2.3" fill="#c8c8c8" opacity="0.5"/>
<rect x="753.3" y="256.4" width="5.0" height="2.3" fill="#c8c8c8" opacity="0.5"/>
<rect x="769.4" y="256.4" width="5.0" height="2.3" fill="#c8c8c8" opacity="0.5"/>
<rect x="785.4" y="256.4" width="5.0" height="2.3" fill="#c8c8c8" opacity="0.5"/>
<rect x="801.5" y="256.4" width="5.0" height="2.3" fill="#c8c8c8" opacity="0.5"/>
<rect x="817.6" y="256.4" width="5.0" height="2.3" fill="#c8c8c8" opacity="0.5"/>
<rect x="833.7" y="256.4" width="5.0" height="2.3" fill="#c8c8c8" opacity="0.5"/>
<rect x="849.8" y="256.4" width="5.0" height="2.3" fill="#c8c8c8" opacity="0.5"/>
<rect x="865.8" y="256.4" width="5.0" height="2.3" fill="#c8c8c8" opacity="0.5"/>
<line x1="458.3" y1="260.2" x2="458.3" y2="268.0" stroke="#3a3a3a" stroke-width="0.8"/>
<line x1="458.3" y1="276.0" x2="458.3" y2="296.7" stroke="#26b826" stroke-width="1"/>
<line x1="490.5" y1="260.2" x2="490.5" y2="268.0" stroke="#3a3a3a" stroke-width="0.8"/>
<line x1="490.5" y1="276.0" x2="490.5" y2="296.7" stroke="#26b826" stroke-width="1"/>
<line x1="522.6" y1="260.2" x2="522.6" y2="268.0" stroke="#3a3a3a" stroke-width="0.8"/>
<line x1="522.6" y1="276.0" x2="522.6" y2="296.7" stroke="#26b826" stroke-width="1"/>
<line x1="554.8" y1="260.2" x2="554.8" y2="268.0" stroke="#3a3a3a" stroke-width="0.8"/>
<line x1="554.8" y1="276.0" x2="554.8" y2="296.7" stroke="#26b826" stroke-width="1"/>
<line x1="586.9" y1="260.2" x2="586.9" y2="268.0" stroke="#3a3a3a" stroke-width="0.8"/>
<line x1="586.9" y1="276.0" x2="586.9" y2="296.7" stroke="#26b826" stroke-width="1"/>
<line x1="619.1" y1="260.2" x2="619.1" y2="268.0" stroke="#3a3a3a" stroke-width="0.8"/>
<line x1="619.1" y1="276.0" x2="619.1" y2="296.7" stroke="#26b826" stroke-width="1"/>
<line x1="651.3" y1="260.2" x2="651.3" y2="268.0" stroke="#3a3a3a" stroke-width="0.8"/>
<line x1="651.3" y1="276.0" x2="651.3" y2="296.7" stroke="#26b826" stroke-width="1"/>
<line x1="683.4" y1="260.2" x2="683.4" y2="268.0" stroke="#3a3a3a" stroke-width="0.8"/>
<line x1="683.4" y1="276.0" x2="683.4" y2="296.7" stroke="#26b826" stroke-width="1"/>
<line x1="715.6" y1="260.2" x2="715.6" y2="268.0" stroke="#3a3a3a" stroke-width="0.8"/>
<line x1="715.6" y1="276.0" x2="715.6" y2="296.7" stroke="#26b826" stroke-width="1"/>
<line x1="747.7" y1="260.2" x2="747.7" y2="268.0" stroke="#3a3a3a" stroke-width="0.8"/>
<line x1="747.7" y1="276.0" x2="747.7" y2="296.7" stroke="#26b826" stroke-width="1"/>
<line x1="779.9" y1="260.2" x2="779.9" y2="268.0" stroke="#3a3a3a" stroke-width="0.8"/>
<line x1="779.9" y1="276.0" x2="779.9" y2="296.7" stroke="#26b826" stroke-width="1"/>
<line x1="812.1" y1="260.2" x2="812.1" y2="268.0" stroke="#3a3a3a" stroke-width="0.8"/>
<line x1="812.1" y1="276.0" x2="812.1" y2="296.7" stroke="#26b826" stroke-width="1"/>
<line x1="844.2" y1="260.2" x2="844.2" y2="268.0" stroke="#3a3a3a" stroke-width="0.8"/>
<line x1="844.2" y1="276.0" x2="844.2" y2="296.7" stroke="#26b826" stroke-width="1"/>
<line x1="876.4" y1="260.2" x2="876.4" y2="268.0" stroke="#3a3a3a" stroke-width="0.8"/>
<line x1="876.4" y1="276.0" x2="876.4" y2="296.7" stroke="#26b826" stroke-width="1"/>
<line x1="458.3" y1="286.2" x2="876.4" y2="286.2" stroke="#26b826" stroke-width="1"/>
<rect x="471.4" y="282.4" width="6.0" height="2.4" fill="#c8c8c8" opacity="0.5"/>
<rect x="503.5" y="282.4" width="6.0" height="2.4" fill="#c8c8c8" opacity="0.5"/>
<rect x="535.7" y="282.4" width="6.0" height="2.4" fill="#c8c8c8" opacity="0.5"/>
<rect x="567.9" y="282.4" width="6.0" height="2.4" fill="#c8c8c8" opacity="0.5"/>
<rect x="600.0" y="282.4" width="6.0" height="2.4" fill="#c8c8c8" opacity="0.5"/>
<rect x="632.2" y="282.4" width="6.0" height="2.4" fill="#c8c8c8" opacity="0.5"/>
<rect x="664.3" y="282.4" width="6.0" height="2.4" fill="#c8c8c8" opacity="0.5"/>
<rect x="696.5" y="282.4" width="6.0" height="2.4" fill="#c8c8c8" opacity="0.5"/>
<rect x="728.7" y="282.4" width="6.0" height="2.4" fill="#c8c8c8" opacity="0.5"/>
<rect x="760.8" y="282.4" width="6.0" height="2.4" fill="#c8c8c8" opacity="0.5"/>
<rect x="793.0" y="282.4" width="6.0" height="2.4" fill="#c8c8c8" opacity="0.5"/>
<rect x="825.1" y="282.4" width="6.0" height="2.4" fill="#c8c8c8" opacity="0.5"/>
<rect x="857.3" y="282.4" width="6.0" height="2.4" fill="#c8c8c8" opacity="0.5"/>
<circle cx="458.3" cy="300.6" r="3.9" fill="none" stroke="#26b826" stroke-width="1"/>
<text x="458.3" y="302.4" font-size="5" text-anchor="middle" fill="#d8d8d8" font-family="Liberation Sans">1</text>
<circle cx="490.5" cy="300.6" r="3.9" fill="none" stroke="#26b826" stroke-width="1"/>
<text x="490.5" y="302.4" font-size="5" text-anchor="middle" fill="#d8d8d8" font-family="Liberation Sans">2</text>
<circle cx="522.6" cy="300.6" r="3.9" fill="none" stroke="#26b826" stroke-width="1"/>
<text x="522.6" y="302.4" font-size="5" text-anchor="middle" fill="#d8d8d8" font-family="Liberation Sans">3</text>
<circle cx="554.8" cy="300.6" r="3.9" fill="none" stroke="#26b826" stroke-width="1"/>
<text x="554.8" y="302.4" font-size="5" text-anchor="middle" fill="#d8d8d8" font-family="Liberation Sans">4</text>
<circle cx="586.9" cy="300.6" r="3.9" fill="none" stroke="#26b826" stroke-width="1"/>
<text x="586.9" y="302.4" font-size="5" text-anchor="middle" fill="#d8d8d8" font-family="Liberation Sans">5</text>
<circle cx="619.1" cy="300.6" r="3.9" fill="none" stroke="#26b826" stroke-width="1"/>
<text x="619.1" y="302.4" font-size="5" text-anchor="middle" fill="#d8d8d8" font-family="Liberation Sans">6</text>
<circle cx="651.3" cy="300.6" r="3.9" fill="none" stroke="#26b826" stroke-width="1"/>
<text x="651.3" y="302.4" font-size="5" text-anchor="middle" fill="#d8d8d8" font-family="Liberation Sans">7</text>
<circle cx="683.4" cy="300.6" r="3.9" fill="none" stroke="#26b826" stroke-width="1"/>
<text x="683.4" y="302.4" font-size="5" text-anchor="middle" fill="#d8d8d8" font-family="Liberation Sans">8</text>
<circle cx="715.6" cy="300.6" r="3.9" fill="none" stroke="#26b826" stroke-width="1"/>
<text x="715.6" y="302.4" font-size="5" text-anchor="middle" fill="#d8d8d8" font-family="Liberation Sans">9</text>
<circle cx="747.7" cy="300.6" r="3.9" fill="none" stroke="#26b826" stroke-width="1"/>
<text x="747.7" y="302.4" font-size="5" text-anchor="middle" fill="#d8d8d8" font-family="Liberation Sans">10</text>
<circle cx="779.9" cy="300.6" r="3.9" fill="none" stroke="#26b826" stroke-width="1"/>
<text x="779.9" y="302.4" font-size="5" text-anchor="middle" fill="#d8d8d8" font-family="Liberation Sans">11</text>
<circle cx="812.1" cy="300.6" r="3.9" fill="none" stroke="#26b826" stroke-width="1"/>
<text x="812.1" y="302.4" font-size="5" text-anchor="middle" fill="#d8d8d8" font-family="Liberation Sans">12</text>
<circle cx="844.2" cy="300.6" r="3.9" fill="none" stroke="#26b826" stroke-width="1"/>
<text x="844.2" y="302.4" font-size="5" text-anchor="middle" fill="#d8d8d8" font-family="Liberation Sans">13</text>
<circle cx="876.4" cy="300.6" r="3.9" fill="none" stroke="#26b826" stroke-width="1"/>
<text x="876.4" y="302.4" font-size="5" text-anchor="middle" fill="#d8d8d8" font-family="Liberation Sans">14</text>
</g>
<g transform="translate(0,397.3)">
<circle cx="458.3" cy="35.8" r="3.9" fill="none" stroke="#26b826" stroke-width="1"/>
<text x="458.3" y="37.6" font-size="5" text-anchor="middle" fill="#d8d8d8" font-family="Liberation Sans">1</text>
<line x1="458.3" y1="39.7" x2="458.3" y2="60.3" stroke="#26b826" stroke-width="1"/>
<circle cx="490.5" cy="35.8" r="3.9" fill="none" stroke="#26b826" stroke-width="1"/>
<text x="490.5" y="37.6" font-size="5" text-anchor="middle" fill="#d8d8d8" font-family="Liberation Sans">2</text>
<line x1="490.5" y1="39.7" x2="490.5" y2="60.3" stroke="#26b826" stroke-width="1"/>
<circle cx="522.6" cy="35.8" r="3.9" fill="none" stroke="#26b826" stroke-width="1"/>
<text x="522.6" y="37.6" font-size="5" text-anchor="middle" fill="#d8d8d8" font-family="Liberation Sans">3</text>
<line x1="522.6" y1="39.7" x2="522.6" y2="60.3" stroke="#26b826" stroke-width="1"/>
<circle cx="554.8" cy="35.8" r="3.9" fill="none" stroke="#26b826" stroke-width="1"/>
<text x="554.8" y="37.6" font-size="5" text-anchor="middle" fill="#d8d8d8" font-family="Liberation Sans">4</text>
<line x1="554.8" y1="39.7" x2="554.8" y2="60.3" stroke="#26b826" stroke-width="1"/>
<circle cx="586.9" cy="35.8" r="3.9" fill="none" stroke="#26b826" stroke-width="1"/>
<text x="586.9" y="37.6" font-size="5" text-anchor="middle" fill="#d8d8d8" font-family="Liberation Sans">5</text>
<line x1="586.9" y1="39.7" x2="586.9" y2="60.3" stroke="#26b826" stroke-width="1"/>
<circle cx="619.1" cy="35.8" r="3.9" fill="none" stroke="#26b826" stroke-width="1"/>
<text x="619.1" y="37.6" font-size="5" text-anchor="middle" fill="#d8d8d8" font-family="Liberation Sans">6</text>
<line x1="619.1" y1="39.7" x2="619.1" y2="60.3" stroke="#26b826" stroke-width="1"/>
<circle cx="651.3" cy="35.8" r="3.9" fill="none" stroke="#26b826" stroke-width="1"/>
<text x="651.3" y="37.6" font-size="5" text-anchor="middle" fill="#d8d8d8" font-family="Liberation Sans">7</text>
<line x1="651.3" y1="39.7" x2="651.3" y2="60.3" stroke="#26b826" stroke-width="1"/>
<circle cx="683.4" cy="35.8" r="3.9" fill="none" stroke="#26b826" stroke-width="1"/>
<text x="683.4" y="37.6" font-size="5" text-anchor="middle" fill="#d8d8d8" font-family="Liberation Sans">8</text>
<line x1="683.4" y1="39.7" x2="683.4" y2="60.3" stroke="#26b826" stroke-width="1"/>
<circle cx="715.6" cy="35.8" r="3.9" fill="none" stroke="#26b826" stroke-width="1"/>
<text x="715.6" y="37.6" font-size="5" text-anchor="middle" fill="#d8d8d8" font-family="Liberation Sans">9</text>
<line x1="715.6" y1="39.7" x2="715.6" y2="60.3" stroke="#26b826" stroke-width="1"/>
<circle cx="747.7" cy="35.8" r="3.9" fill="none" stroke="#26b826" stroke-width="1"/>
<text x="747.7" y="37.6" font-size="5" text-anchor="middle" fill="#d8d8d8" font-family="Liberation Sans">10</text>
<line x1="747.7" y1="39.7" x2="747.7" y2="60.3" stroke="#26b826" stroke-width="1"/>
<circle cx="779.9" cy="35.8" r="3.9" fill="none" stroke="#26b826" stroke-width="1"/>
<text x="779.9" y="37.6" font-size="5" text-anchor="middle" fill="#d8d8d8" font-family="Liberation Sans">11</text>
<line x1="779.9" y1="39.7" x2="779.9" y2="60.3" stroke="#26b826" stroke-width="1"/>
<circle cx="812.1" cy="35.8" r="3.9" fill="none" stroke="#26b826" stroke-width="1"/>
<text x="812.1" y="37.6" font-size="5" text-anchor="middle" fill="#d8d8d8" font-family="Liberation Sans">12</text>
<line x1="812.1" y1="39.7" x2="812.1" y2="60.3" stroke="#26b826" stroke-width="1"/>
<circle cx="844.2" cy="35.8" r="3.9" fill="none" stroke="#26b826" stroke-width="1"/>
<text x="844.2" y="37.6" font-size="5" text-anchor="middle" fill="#d8d8d8" font-family="Liberation Sans">13</text>
<line x1="844.2" y1="39.7" x2="844.2" y2="60.3" stroke="#26b826" stroke-width="1"/>
<circle cx="876.4" cy="35.8" r="3.9" fill="none" stroke="#26b826" stroke-width="1"/>
<text x="876.4" y="37.6" font-size="5" text-anchor="middle" fill="#d8d8d8" font-family="Liberation Sans">14</text>
<line x1="876.4" y1="39.7" x2="876.4" y2="60.3" stroke="#26b826" stroke-width="1"/>
<line x1="458.3" y1="43.2" x2="876.4" y2="43.2" stroke="#26b826" stroke-width="1"/>
<line x1="458.3" y1="50.2" x2="876.4" y2="50.2" stroke="#26b826" stroke-width="1"/>
<rect x="471.6" y="46.0" width="5.6" height="2.4" fill="#c8c8c8" opacity="0.5"/>
<rect x="503.7" y="46.0" width="5.6" height="2.4" fill="#c8c8c8" opacity="0.5"/>
<rect x="535.9" y="46.0" width="5.6" height="2.4" fill="#c8c8c8" opacity="0.5"/>
<rect x="568.1" y="46.0" width="5.6" height="2.4" fill="#c8c8c8" opacity="0.5"/>
<rect x="600.2" y="46.0" width="5.6" height="2.4" fill="#c8c8c8" opacity="0.5"/>
<rect x="632.4" y="46.0" width="5.6" height="2.4" fill="#c8c8c8" opacity="0.5"/>
<rect x="664.5" y="46.0" width="5.6" height="2.4" fill="#c8c8c8" opacity="0.5"/>
<rect x="696.7" y="46.0" width="5.6" height="2.4" fill="#c8c8c8" opacity="0.5"/>
<rect x="728.9" y="46.0" width="5.6" height="2.4" fill="#c8c8c8" opacity="0.5"/>
<rect x="761.0" y="46.0" width="5.6" height="2.4" fill="#c8c8c8" opacity="0.5"/>
<rect x="793.2" y="46.0" width="5.6" height="2.4" fill="#c8c8c8" opacity="0.5"/>
<rect x="825.3" y="46.0" width="5.6" height="2.4" fill="#c8c8c8" opacity="0.5"/>
<rect x="857.5" y="46.0" width="5.6" height="2.4" fill="#c8c8c8" opacity="0.5"/>
<line x1="458.3" y1="67.5" x2="458.3" y2="72.5" stroke="#3a3a3a" stroke-width="0.8"/>
<line x1="490.5" y1="67.5" x2="490.5" y2="72.5" stroke="#3a3a3a" stroke-width="0.8"/>
<line x1="522.6" y1="67.5" x2="522.6" y2="72.5" stroke="#3a3a3a" stroke-width="0.8"/>
<line x1="554.8" y1="67.5" x2="554.8" y2="72.5" stroke="#3a3a3a" stroke-width="0.8"/>
<line x1="586.9" y1="67.5" x2="586.9" y2="72.5" stroke="#3a3a3a" stroke-width="0.8"/>
<line x1="619.1" y1="67.5" x2="619.1" y2="72.5" stroke="#3a3a3a" stroke-width="0.8"/>
<line x1="651.3" y1="67.5" x2="651.3" y2="72.5" stroke="#3a3a3a" stroke-width="0.8"/>
<line x1="683.4" y1="67.5" x2="683.4" y2="72.5" stroke="#3a3a3a" stroke-width="0.8"/>
<line x1="715.6" y1="67.5" x2="715.6" y2="72.5" stroke="#3a3a3a" stroke-width="0.8"/>
<line x1="747.7" y1="67.5" x2="747.7" y2="72.5" stroke="#3a3a3a" stroke-width="0.8"/>
<line x1="779.9" y1="67.5" x2="779.9" y2="72.5" stroke="#3a3a3a" stroke-width="0.8"/>
<line x1="812.1" y1="67.5" x2="812.1" y2="72.5" stroke="#3a3a3a" stroke-width="0.8"/>
<line x1="844.2" y1="67.5" x2="844.2" y2="72.5" stroke="#3a3a3a" stroke-width="0.8"/>
<line x1="876.4" y1="67.5" x2="876.4" y2="72.5" stroke="#3a3a3a" stroke-width="0.8"/>
<line x1="458.3" y1="77.9" x2="876.4" y2="77.9" stroke="#26b826" stroke-width="1"/>
<rect x="463.8" y="74.6" width="5.0" height="2.3" fill="#c8c8c8" opacity="0.5"/>
<rect x="479.9" y="74.6" width="5.0" height="2.3" fill="#c8c8c8" opacity="0.5"/>
<rect x="496.0" y="74.6" width="5.0" height="2.3" fill="#c8c8c8" opacity="0.5"/>
<rect x="512.1" y="74.6" width="5.0" height="2.3" fill="#c8c8c8" opacity="0.5"/>
<rect x="528.2" y="74.6" width="5.0" height="2.3" fill="#c8c8c8" opacity="0.5"/>
<rect x="544.2" y="74.6" width="5.0" height="2.3" fill="#c8c8c8" opacity="0.5"/>
<rect x="560.3" y="74.6" width="5.0" height="2.3" fill="#c8c8c8" opacity="0.5"/>
<rect x="576.4" y="74.6" width="5.0" height="2.3" fill="#c8c8c8" opacity="0.5"/>
<rect x="592.5" y="74.6" width="5.0" height="2.3" fill="#c8c8c8" opacity="0.5"/>
<rect x="608.6" y="74.6" width="5.0" height="2.3" fill="#c8c8c8" opacity="0.5"/>
<rect x="624.6" y="74.6" width="5.0" height="2.3" fill="#c8c8c8" opacity="0.5"/>
<rect x="640.7" y="74.6" width="5.0" height="2.3" fill="#c8c8c8" opacity="0.5"/>
<rect x="656.8" y="74.6" width="5.0" height="2.3" fill="#c8c8c8" opacity="0.5"/>
<rect x="672.9" y="74.6" width="5.0" height="2.3" fill="#c8c8c8" opacity="0.5"/>
<rect x="689.0" y="74.6" width="5.0" height="2.3" fill="#c8c8c8" opacity="0.5"/>
<rect x="705.0" y="74.6" width="5.0" height="2.3" fill="#c8c8c8" opacity="0.5"/>
<rect x="721.1" y="74.6" width="5.0" height="2.3" fill="#c8c8c8" opacity="0.5"/>
<rect x="737.2" y="74.6" width="5.0" height="2.3" fill="#c8c8c8" opacity="0.5"/>
<rect x="753.3" y="74.6" width="5.0" height="2.3" fill="#c8c8c8" opacity="0.5"/>
<rect x="769.4" y="74.6" width="5.0" height="2.3" fill="#c8c8c8" opacity="0.5"/>
<rect x="785.4" y="74.6" width="5.0" height="2.3" fill="#c8c8c8" opacity="0.5"/>
<rect x="801.5" y="74.6" width="5.0" height="2.3" fill="#c8c8c8" opacity="0.5"/>
<rect x="817.6" y="74.6" width="5.0" height="2.3" fill="#c8c8c8" opacity="0.5"/>
<rect x="833.7" y="74.6" width="5.0" height="2.3" fill="#c8c8c8" opacity="0.5"/>
<rect x="849.8" y="74.6" width="5.0" height="2.3" fill="#c8c8c8" opacity="0.5"/>
<rect x="865.8" y="74.6" width="5.0" height="2.3" fill="#c8c8c8" opacity="0.5"/>
<line x1="445.0" y1="88.6" x2="885.0" y2="88.6" stroke="#3c3c3c" stroke-width="0.8" stroke-dasharray="8 2 1 2"/>
<line x1="450.4" y1="93.3" x2="450.4" y2="252.6" stroke="#555" stroke-width="0.9"/>
<line x1="885.3" y1="82.0" x2="885.3" y2="252.6" stroke="#555" stroke-width="0.9"/>
<circle cx="422.5" cy="93.3" r="3.9" fill="none" stroke="#26b826" stroke-width="1"/>
<text x="422.5" y="95.1" font-size="5" text-anchor="middle" fill="#d8d8d8" font-family="Liberation Sans">F</text>
<circle cx="913.0" cy="93.3" r="3.9" fill="none" stroke="#26b826" stroke-width="1"/>
<text x="913.0" y="95.1" font-size="5" text-anchor="middle" fill="#d8d8d8" font-family="Liberation Sans">F</text>
<line x1="426.4" y1="93.3" x2="445.0" y2="93.3" stroke="#26b826" stroke-width="1"/>
<line x1="890.0" y1="93.3" x2="909.1" y2="93.3" stroke="#26b826" stroke-width="1"/>
<circle cx="422.5" cy="110.2" r="3.9" fill="none" stroke="#26b826" stroke-width="1"/>
<text x="422.5" y="112.0" font-size="5" text-anchor="middle" fill="#d8d8d8" font-family="Liberation Sans">E</text>
<circle cx="913.0" cy="110.2" r="3.9" fill="none" stroke="#26b826" stroke-width="1"/>
<text x="913.0" y="112.0" font-size="5" text-anchor="middle" fill="#d8d8d8" font-family="Liberation Sans">E</text>
<line x1="426.4" y1="110.2" x2="445.0" y2="110.2" stroke="#26b826" stroke-width="1"/>
<line x1="890.0" y1="110.2" x2="909.1" y2="110.2" stroke="#26b826" stroke-width="1"/>
<circle cx="422.5" cy="158.5" r="3.9" fill="none" stroke="#26b826" stroke-width="1"/>
<text x="422.5" y="160.3" font-size="5" text-anchor="middle" fill="#d8d8d8" font-family="Liberation Sans">D</text>
<circle cx="913.0" cy="158.5" r="3.9" fill="none" stroke="#26b826" stroke-width="1"/>
<text x="913.0" y="160.3" font-size="5" text-anchor="middle" fill="#d8d8d8" font-family="Liberation Sans">D</text>
<line x1="426.4" y1="158.5" x2="445.0" y2="158.5" stroke="#26b826" stroke-width="1"/>
<line x1="890.0" y1="158.5" x2="909.1" y2="158.5" stroke="#26b826" stroke-width="1"/>
<circle cx="422.5" cy="179.6" r="3.9" fill="none" stroke="#26b826" stroke-width="1"/>
<text x="422.5" y="181.4" font-size="5" text-anchor="middle" fill="#d8d8d8" font-family="Liberation Sans">C</text>
<circle cx="913.0" cy="179.6" r="3.9" fill="none" stroke="#26b826" stroke-width="1"/>
<text x="913.0" y="181.4" font-size="5" text-anchor="middle" fill="#d8d8d8" font-family="Liberation Sans">C</text>
<line x1="426.4" y1="179.6" x2="445.0" y2="179.6" stroke="#26b826" stroke-width="1"/>
<line x1="890.0" y1="179.6" x2="909.1" y2="179.6" stroke="#26b826" stroke-width="1"/>
<circle cx="422.5" cy="228.0" r="3.9" fill="none" stroke="#26b826" stroke-width="1"/>
<text x="422.5" y="229.8" font-size="5" text-anchor="middle" fill="#d8d8d8" font-family="Liberation Sans">B</text>
<circle cx="913.0" cy="228.0" r="3.9" fill="none" stroke="#26b826" stroke-width="1"/>
<text x="913.0" y="229.8" font-size="5" text-anchor="middle" fill="#d8d8d8" font-family="Liberation Sans">B</text>
<line x1="426.4" y1="228.0" x2="445.0" y2="228.0" stroke="#26b826" stroke-width="1"/>
<line x1="890.0" y1="228.0" x2="909.1" y2="228.0" stroke="#26b826" stroke-width="1"/>
<circle cx="422.5" cy="244.6" r="3.9" fill="none" stroke="#26b826" stroke-width="1"/>
<text x="422.5" y="246.4" font-size="5" text-anchor="middle" fill="#d8d8d8" font-family="Liberation Sans">A</text>
<circle cx="913.0" cy="244.6" r="3.9" fill="none" stroke="#26b826" stroke-width="1"/>
<text x="913.0" y="246.4" font-size="5" text-anchor="middle" fill="#d8d8d8" font-family="Liberation Sans">A</text>
<line x1="426.4" y1="244.6" x2="445.0" y2="244.6" stroke="#26b826" stroke-width="1"/>
<line x1="890.0" y1="244.6" x2="909.1" y2="244.6" stroke="#26b826" stroke-width="1"/>
<line x1="429.4" y1="93.3" x2="429.4" y2="244.6" stroke="#26b826" stroke-width="1"/>
<line x1="436.6" y1="93.3" x2="436.6" y2="244.6" stroke="#26b826" stroke-width="1"/>
<line x1="898.3" y1="93.3" x2="898.3" y2="244.6" stroke="#26b826" stroke-width="1"/>
<line x1="906.4" y1="93.3" x2="906.4" y2="244.6" stroke="#26b826" stroke-width="1"/>
<rect x="432.4" y="99.2" width="2.2" height="5.0" fill="#c8c8c8" opacity="0.5"/>
<rect x="901.2" y="99.2" width="2.2" height="5.0" fill="#c8c8c8" opacity="0.5"/>
<rect x="432.4" y="131.8" width="2.2" height="5.0" fill="#c8c8c8" opacity="0.5"/>
<rect x="901.2" y="131.8" width="2.2" height="5.0" fill="#c8c8c8" opacity="0.5"/>
<rect x="432.4" y="166.6" width="2.2" height="5.0" fill="#c8c8c8" opacity="0.5"/>
<rect x="901.2" y="166.6" width="2.2" height="5.0" fill="#c8c8c8" opacity="0.5"/>
<rect x="432.4" y="201.3" width="2.2" height="5.0" fill="#c8c8c8" opacity="0.5"/>
<rect x="901.2" y="201.3" width="2.2" height="5.0" fill="#c8c8c8" opacity="0.5"/>
<rect x="432.4" y="233.8" width="2.2" height="5.0" fill="#c8c8c8" opacity="0.5"/>
<rect x="901.2" y="233.8" width="2.2" height="5.0" fill="#c8c8c8" opacity="0.5"/>
<rect x="424.9" y="165.9" width="2.2" height="6.0" fill="#c8c8c8" opacity="0.5"/>
<rect x="908.4" y="165.9" width="2.2" height="6.0" fill="#c8c8c8" opacity="0.5"/>
<line x1="455.0" y1="112.2" x2="455.0" y2="228.6" stroke="#229a22" stroke-width="0.9"/>
<line x1="451.0" y1="121.5" x2="474.0" y2="121.5" stroke="#229a22" stroke-width="0.9"/>
<rect x="451.5" y="126.5" width="2.2" height="5.0" fill="#c8c8c8" opacity="0.5"/>
<line x1="451.0" y1="146.0" x2="474.0" y2="146.0" stroke="#229a22" stroke-width="0.9"/>
<rect x="451.5" y="151.0" width="2.2" height="5.0" fill="#c8c8c8" opacity="0.5"/>
<line x1="451.0" y1="168.6" x2="474.0" y2="168.6" stroke="#229a22" stroke-width="0.9"/>
<rect x="451.5" y="173.6" width="2.2" height="5.0" fill="#c8c8c8" opacity="0.5"/>
<line x1="451.0" y1="192.0" x2="474.0" y2="192.0" stroke="#229a22" stroke-width="0.9"/>
<rect x="451.5" y="197.0" width="2.2" height="5.0" fill="#c8c8c8" opacity="0.5"/>
<line x1="451.0" y1="215.3" x2="474.0" y2="215.3" stroke="#229a22" stroke-width="0.9"/>
<rect x="451.5" y="220.3" width="2.2" height="5.0" fill="#c8c8c8" opacity="0.5"/>
<line x1="459.6" y1="92.3" x2="459.6" y2="245.6" stroke="#6a6a6a" stroke-width="2.6"/>
<line x1="876.7" y1="92.3" x2="876.7" y2="245.6" stroke="#6a6a6a" stroke-width="2.4"/>
<line x1="459.6" y1="158.5" x2="876.7" y2="158.5" stroke="#5c5c5c" stroke-width="1.5"/>
<line x1="459.6" y1="179.6" x2="876.7" y2="179.6" stroke="#5c5c5c" stroke-width="1.5"/>
<line x1="459.6" y1="110.2" x2="490.5" y2="110.2" stroke="#5c5c5c" stroke-width="1.4"/>
<line x1="490.5" y1="110.2" x2="522.6" y2="110.2" stroke="#5c5c5c" stroke-width="1.4"/>
<line x1="522.6" y1="110.2" x2="554.8" y2="110.2" stroke="#5c5c5c" stroke-width="1.4"/>
<line x1="554.8" y1="110.2" x2="586.9" y2="110.2" stroke="#5c5c5c" stroke-width="1.4"/>
<line x1="586.9" y1="110.2" x2="619.1" y2="110.2" stroke="#5c5c5c" stroke-width="1.4"/>
<line x1="619.1" y1="110.2" x2="651.3" y2="110.2" stroke="#5c5c5c" stroke-width="1.4"/>
<line x1="651.3" y1="110.2" x2="683.4" y2="110.2" stroke="#5c5c5c" stroke-width="1.4"/>
<line x1="715.6" y1="110.2" x2="747.7" y2="110.2" stroke="#5c5c5c" stroke-width="1.4"/>
<line x1="747.7" y1="110.2" x2="779.9" y2="110.2" stroke="#5c5c5c" stroke-width="1.4"/>
<line x1="779.9" y1="110.2" x2="812.1" y2="110.2" stroke="#5c5c5c" stroke-width="1.4"/>
<line x1="812.1" y1="110.2" x2="844.2" y2="110.2" stroke="#5c5c5c" stroke-width="1.4"/>
<line x1="844.2" y1="110.2" x2="876.7" y2="110.2" stroke="#5c5c5c" stroke-width="1.4"/>
<line x1="459.6" y1="228.0" x2="876.7" y2="228.0" stroke="#5c5c5c" stroke-width="1.4"/>
<line x1="459.6" y1="93.3" x2="876.7" y2="93.3" stroke="#4e4e4e" stroke-width="1.6"/>
<line x1="459.6" y1="244.6" x2="876.7" y2="244.6" stroke="#4e4e4e" stroke-width="1.6"/>
<line x1="490.5" y1="93.3" x2="490.5" y2="158.5" stroke="#5c5c5c" stroke-width="1.7"/>
<line x1="490.5" y1="179.6" x2="490.5" y2="244.6" stroke="#5c5c5c" stroke-width="1.7"/>
<line x1="522.6" y1="93.3" x2="522.6" y2="158.5" stroke="#5c5c5c" stroke-width="1.7"/>
<line x1="522.6" y1="179.6" x2="522.6" y2="244.6" stroke="#5c5c5c" stroke-width="1.7"/>
<line x1="554.8" y1="93.3" x2="554.8" y2="158.5" stroke="#5c5c5c" stroke-width="1.7"/>
<line x1="554.8" y1="179.6" x2="554.8" y2="244.6" stroke="#5c5c5c" stroke-width="1.7"/>
<line x1="586.9" y1="93.3" x2="586.9" y2="158.5" stroke="#5c5c5c" stroke-width="1.7"/>
<line x1="586.9" y1="179.6" x2="586.9" y2="244.6" stroke="#5c5c5c" stroke-width="1.7"/>
<line x1="619.1" y1="93.3" x2="619.1" y2="158.5" stroke="#5c5c5c" stroke-width="1.7"/>
<line x1="619.1" y1="179.6" x2="619.1" y2="244.6" stroke="#5c5c5c" stroke-width="1.7"/>
<line x1="651.3" y1="93.3" x2="651.3" y2="158.5" stroke="#5c5c5c" stroke-width="1.7"/>
<line x1="651.3" y1="179.6" x2="651.3" y2="244.6" stroke="#5c5c5c" stroke-width="1.7"/>
<line x1="683.4" y1="93.3" x2="683.4" y2="158.5" stroke="#5c5c5c" stroke-width="1.7"/>
<line x1="683.4" y1="179.6" x2="683.4" y2="244.6" stroke="#5c5c5c" stroke-width="1.7"/>
<line x1="715.6" y1="93.3" x2="715.6" y2="158.5" stroke="#5c5c5c" stroke-width="1.7"/>
<line x1="715.6" y1="179.6" x2="715.6" y2="244.6" stroke="#5c5c5c" stroke-width="1.7"/>
<line x1="747.7" y1="93.3" x2="747.7" y2="158.5" stroke="#5c5c5c" stroke-width="1.7"/>
<line x1="747.7" y1="179.6" x2="747.7" y2="244.6" stroke="#5c5c5c" stroke-width="1.7"/>
<line x1="779.9" y1="93.3" x2="779.9" y2="158.5" stroke="#5c5c5c" stroke-width="1.7"/>
<line x1="779.9" y1="179.6" x2="779.9" y2="244.6" stroke="#5c5c5c" stroke-width="1.7"/>
<line x1="812.1" y1="93.3" x2="812.1" y2="158.5" stroke="#5c5c5c" stroke-width="1.7"/>
<line x1="812.1" y1="179.6" x2="812.1" y2="244.6" stroke="#5c5c5c" stroke-width="1.7"/>
<line x1="844.2" y1="93.3" x2="844.2" y2="158.5" stroke="#5c5c5c" stroke-width="1.7"/>
<line x1="844.2" y1="179.6" x2="844.2" y2="244.6" stroke="#5c5c5c" stroke-width="1.7"/>
<line x1="458.3" y1="158.5" x2="458.3" y2="179.6" stroke="#333" stroke-width="0.7"/>
<line x1="490.5" y1="158.5" x2="490.5" y2="179.6" stroke="#333" stroke-width="0.7"/>
<line x1="522.6" y1="158.5" x2="522.6" y2="179.6" stroke="#333" stroke-width="0.7"/>
<line x1="554.8" y1="158.5" x2="554.8" y2="179.6" stroke="#333" stroke-width="0.7"/>
<line x1="586.9" y1="158.5" x2="586.9" y2="179.6" stroke="#333" stroke-width="0.7"/>
<line x1="619.1" y1="158.5" x2="619.1" y2="179.6" stroke="#333" stroke-width="0.7"/>
<line x1="651.3" y1="158.5" x2="651.3" y2="179.6" stroke="#333" stroke-width="0.7"/>
<line x1="683.4" y1="158.5" x2="683.4" y2="179.6" stroke="#333" stroke-width="0.7"/>
<line x1="715.6" y1="158.5" x2="715.6" y2="179.6" stroke="#333" stroke-width="0.7"/>
<line x1="747.7" y1="158.5" x2="747.7" y2="179.6" stroke="#333" stroke-width="0.7"/>
<line x1="779.9" y1="158.5" x2="779.9" y2="179.6" stroke="#333" stroke-width="0.7"/>
<line x1="812.1" y1="158.5" x2="812.1" y2="179.6" stroke="#333" stroke-width="0.7"/>
<line x1="844.2" y1="158.5" x2="844.2" y2="179.6" stroke="#333" stroke-width="0.7"/>
<line x1="876.4" y1="158.5" x2="876.4" y2="179.6" stroke="#333" stroke-width="0.7"/>
<line x1="479.9" y1="93.3" x2="479.9" y2="110.2" stroke="#555" stroke-width="1.0"/>
<line x1="464.3" y1="93.3" x2="479.9" y2="93.3" stroke="#b040b0" stroke-width="1.8"/>
<rect x="460.3" y="95.9" width="4.2" height="4.8" fill="none" stroke="#e014e0" stroke-width="0.95"/>
<circle cx="462.3" cy="104.7" r="2.1" fill="none" stroke="#e014e0" stroke-width="0.95"/>
<rect x="483.8" y="96.3" width="3.2" height="5.0" fill="none" stroke="#e014e0" stroke-width="0.95"/>
<path d="M479.9 100.8l5 3.5-5 3.5" fill="none" stroke="#666" stroke-width="0.7"/>
<rect x="469.8" y="98.3" width="4.0" height="2.8" fill="#d89850" opacity="0.75"/>
<path d="M468.4 110.2q3-5 6-5" fill="none" stroke="#666" stroke-width="0.7"/>
<line x1="479.9" y1="228.0" x2="479.9" y2="244.6" stroke="#555" stroke-width="1.0"/>
<line x1="464.3" y1="244.6" x2="479.9" y2="244.6" stroke="#b040b0" stroke-width="1.8"/>
<circle cx="462.3" cy="232.6" r="2.1" fill="none" stroke="#e014e0" stroke-width="0.95"/>
<rect x="460.3" y="236.4" width="4.2" height="4.8" fill="none" stroke="#e014e0" stroke-width="0.95"/>
<rect x="483.8" y="235.5" width="3.2" height="5.0" fill="none" stroke="#e014e0" stroke-width="0.95"/>
<path d="M479.9 229.5l5 3.5-5 3.5" fill="none" stroke="#666" stroke-width="0.7"/>
<rect x="469.8" y="238.0" width="4.0" height="2.8" fill="#d89850" opacity="0.75"/>
<path d="M468.4 228.0q3 5 6 5" fill="none" stroke="#666" stroke-width="0.7"/>
<line x1="501.5" y1="228.0" x2="501.5" y2="244.6" stroke="#555" stroke-width="1.0"/>
<line x1="501.5" y1="244.6" x2="516.6" y2="244.6" stroke="#b040b0" stroke-width="1.8"/>
<circle cx="518.6" cy="232.6" r="2.1" fill="none" stroke="#e014e0" stroke-width="0.95"/>
<rect x="516.6" y="236.4" width="4.2" height="4.8" fill="none" stroke="#e014e0" stroke-width="0.95"/>
<rect x="495.4" y="235.5" width="3.2" height="5.0" fill="none" stroke="#e014e0" stroke-width="0.95"/>
<path d="M501.5 229.5l-5 3.5 5 3.5" fill="none" stroke="#666" stroke-width="0.7"/>
<rect x="508.6" y="238.0" width="4.0" height="2.8" fill="#d89850" opacity="0.75"/>
<path d="M500.5 228.0q3 5 6 5" fill="none" stroke="#666" stroke-width="0.7"/>
<line x1="544.2" y1="93.3" x2="544.2" y2="110.2" stroke="#555" stroke-width="1.0"/>
<line x1="528.6" y1="93.3" x2="544.2" y2="93.3" stroke="#b040b0" stroke-width="1.8"/>
<rect x="524.6" y="95.9" width="4.2" height="4.8" fill="none" stroke="#e014e0" stroke-width="0.95"/>
<circle cx="526.6" cy="104.7" r="2.1" fill="none" stroke="#e014e0" stroke-width="0.95"/>
<rect x="548.1" y="96.3" width="3.2" height="5.0" fill="none" stroke="#e014e0" stroke-width="0.95"/>
<path d="M544.2 100.8l5 3.5-5 3.5" fill="none" stroke="#666" stroke-width="0.7"/>
<rect x="534.1" y="98.3" width="4.0" height="2.8" fill="#d89850" opacity="0.75"/>
<path d="M532.7 110.2q3-5 6-5" fill="none" stroke="#666" stroke-width="0.7"/>
<line x1="544.2" y1="228.0" x2="544.2" y2="244.6" stroke="#555" stroke-width="1.0"/>
<line x1="528.6" y1="244.6" x2="544.2" y2="244.6" stroke="#b040b0" stroke-width="1.8"/>
<circle cx="526.6" cy="232.6" r="2.1" fill="none" stroke="#e014e0" stroke-width="0.95"/>
<rect x="524.6" y="236.4" width="4.2" height="4.8" fill="none" stroke="#e014e0" stroke-width="0.95"/>
<rect x="548.1" y="235.5" width="3.2" height="5.0" fill="none" stroke="#e014e0" stroke-width="0.95"/>
<path d="M544.2 229.5l5 3.5-5 3.5" fill="none" stroke="#666" stroke-width="0.7"/>
<rect x="534.1" y="238.0" width="4.0" height="2.8" fill="#d89850" opacity="0.75"/>
<path d="M532.7 228.0q3 5 6 5" fill="none" stroke="#666" stroke-width="0.7"/>
<line x1="565.8" y1="93.3" x2="565.8" y2="110.2" stroke="#555" stroke-width="1.0"/>
<line x1="565.8" y1="93.3" x2="580.9" y2="93.3" stroke="#b040b0" stroke-width="1.8"/>
<rect x="580.9" y="95.9" width="4.2" height="4.8" fill="none" stroke="#e014e0" stroke-width="0.95"/>
<circle cx="582.9" cy="104.7" r="2.1" fill="none" stroke="#e014e0" stroke-width="0.95"/>
<rect x="559.7" y="96.3" width="3.2" height="5.0" fill="none" stroke="#e014e0" stroke-width="0.95"/>
<path d="M565.8 100.8l-5 3.5 5 3.5" fill="none" stroke="#666" stroke-width="0.7"/>
<rect x="572.9" y="98.3" width="4.0" height="2.8" fill="#d89850" opacity="0.75"/>
<path d="M564.9 110.2q3-5 6-5" fill="none" stroke="#666" stroke-width="0.7"/>
<line x1="565.8" y1="228.0" x2="565.8" y2="244.6" stroke="#555" stroke-width="1.0"/>
<line x1="565.8" y1="244.6" x2="580.9" y2="244.6" stroke="#b040b0" stroke-width="1.8"/>
<circle cx="582.9" cy="232.6" r="2.1" fill="none" stroke="#e014e0" stroke-width="0.95"/>
<rect x="580.9" y="236.4" width="4.2" height="4.8" fill="none" stroke="#e014e0" stroke-width="0.95"/>
<rect x="559.7" y="235.5" width="3.2" height="5.0" fill="none" stroke="#e014e0" stroke-width="0.95"/>
<path d="M565.8 229.5l-5 3.5 5 3.5" fill="none" stroke="#666" stroke-width="0.7"/>
<rect x="572.9" y="238.0" width="4.0" height="2.8" fill="#d89850" opacity="0.75"/>
<path d="M564.9 228.0q3 5 6 5" fill="none" stroke="#666" stroke-width="0.7"/>
<line x1="608.5" y1="93.3" x2="608.5" y2="110.2" stroke="#555" stroke-width="1.0"/>
<line x1="592.9" y1="93.3" x2="608.5" y2="93.3" stroke="#b040b0" stroke-width="1.8"/>
<rect x="588.9" y="95.9" width="4.2" height="4.8" fill="none" stroke="#e014e0" stroke-width="0.95"/>
<circle cx="590.9" cy="104.7" r="2.1" fill="none" stroke="#e014e0" stroke-width="0.95"/>
<rect x="612.4" y="96.3" width="3.2" height="5.0" fill="none" stroke="#e014e0" stroke-width="0.95"/>
<path d="M608.5 100.8l5 3.5-5 3.5" fill="none" stroke="#666" stroke-width="0.7"/>
<rect x="598.4" y="98.3" width="4.0" height="2.8" fill="#d89850" opacity="0.75"/>
<path d="M597.0 110.2q3-5 6-5" fill="none" stroke="#666" stroke-width="0.7"/>
<line x1="608.5" y1="228.0" x2="608.5" y2="244.6" stroke="#555" stroke-width="1.0"/>
<line x1="592.9" y1="244.6" x2="608.5" y2="244.6" stroke="#b040b0" stroke-width="1.8"/>
<circle cx="590.9" cy="232.6" r="2.1" fill="none" stroke="#e014e0" stroke-width="0.95"/>
<rect x="588.9" y="236.4" width="4.2" height="4.8" fill="none" stroke="#e014e0" stroke-width="0.95"/>
<rect x="612.4" y="235.5" width="3.2" height="5.0" fill="none" stroke="#e014e0" stroke-width="0.95"/>
<path d="M608.5 229.5l5 3.5-5 3.5" fill="none" stroke="#666" stroke-width="0.7"/>
<rect x="598.4" y="238.0" width="4.0" height="2.8" fill="#d89850" opacity="0.75"/>
<path d="M597.0 228.0q3 5 6 5" fill="none" stroke="#666" stroke-width="0.7"/>
<line x1="630.1" y1="93.3" x2="630.1" y2="110.2" stroke="#555" stroke-width="1.0"/>
<line x1="630.1" y1="93.3" x2="645.3" y2="93.3" stroke="#b040b0" stroke-width="1.8"/>
<rect x="645.3" y="95.9" width="4.2" height="4.8" fill="none" stroke="#e014e0" stroke-width="0.95"/>
<circle cx="647.3" cy="104.7" r="2.1" fill="none" stroke="#e014e0" stroke-width="0.95"/>
<rect x="624.0" y="96.3" width="3.2" height="5.0" fill="none" stroke="#e014e0" stroke-width="0.95"/>
<path d="M630.1 100.8l-5 3.5 5 3.5" fill="none" stroke="#666" stroke-width="0.7"/>
<rect x="637.3" y="98.3" width="4.0" height="2.8" fill="#d89850" opacity="0.75"/>
<path d="M629.2 110.2q3-5 6-5" fill="none" stroke="#666" stroke-width="0.7"/>
<line x1="630.1" y1="228.0" x2="630.1" y2="244.6" stroke="#555" stroke-width="1.0"/>
<line x1="630.1" y1="244.6" x2="645.3" y2="244.6" stroke="#b040b0" stroke-width="1.8"/>
<circle cx="647.3" cy="232.6" r="2.1" fill="none" stroke="#e014e0" stroke-width="0.95"/>
<rect x="645.3" y="236.4" width="4.2" height="4.8" fill="none" stroke="#e014e0" stroke-width="0.95"/>
<rect x="624.0" y="235.5" width="3.2" height="5.0" fill="none" stroke="#e014e0" stroke-width="0.95"/>
<path d="M630.1 229.5l-5 3.5 5 3.5" fill="none" stroke="#666" stroke-width="0.7"/>
<rect x="637.3" y="238.0" width="4.0" height="2.8" fill="#d89850" opacity="0.75"/>
<path d="M629.2 228.0q3 5 6 5" fill="none" stroke="#666" stroke-width="0.7"/>
<line x1="672.8" y1="93.3" x2="672.8" y2="110.2" stroke="#555" stroke-width="1.0"/>
<line x1="657.3" y1="93.3" x2="672.8" y2="93.3" stroke="#b040b0" stroke-width="1.8"/>
<rect x="653.3" y="95.9" width="4.2" height="4.8" fill="none" stroke="#e014e0" stroke-width="0.95"/>
<circle cx="655.3" cy="104.7" r="2.1" fill="none" stroke="#e014e0" stroke-width="0.95"/>
<rect x="676.7" y="96.3" width="3.2" height="5.0" fill="none" stroke="#e014e0" stroke-width="0.95"/>
<path d="M672.8 100.8l5 3.5-5 3.5" fill="none" stroke="#666" stroke-width="0.7"/>
<rect x="662.8" y="98.3" width="4.0" height="2.8" fill="#d89850" opacity="0.75"/>
<path d="M661.3 110.2q3-5 6-5" fill="none" stroke="#666" stroke-width="0.7"/>
<line x1="672.8" y1="228.0" x2="672.8" y2="244.6" stroke="#555" stroke-width="1.0"/>
<line x1="657.3" y1="244.6" x2="672.8" y2="244.6" stroke="#b040b0" stroke-width="1.8"/>
<circle cx="655.3" cy="232.6" r="2.1" fill="none" stroke="#e014e0" stroke-width="0.95"/>
<rect x="653.3" y="236.4" width="4.2" height="4.8" fill="none" stroke="#e014e0" stroke-width="0.95"/>
<rect x="676.7" y="235.5" width="3.2" height="5.0" fill="none" stroke="#e014e0" stroke-width="0.95"/>
<path d="M672.8 229.5l5 3.5-5 3.5" fill="none" stroke="#666" stroke-width="0.7"/>
<rect x="662.8" y="238.0" width="4.0" height="2.8" fill="#d89850" opacity="0.75"/>
<path d="M661.3 228.0q3 5 6 5" fill="none" stroke="#666" stroke-width="0.7"/>
<line x1="694.4" y1="228.0" x2="694.4" y2="244.6" stroke="#555" stroke-width="1.0"/>
<line x1="694.4" y1="244.6" x2="709.6" y2="244.6" stroke="#b040b0" stroke-width="1.8"/>
<circle cx="711.6" cy="232.6" r="2.1" fill="none" stroke="#e014e0" stroke-width="0.95"/>
<rect x="709.6" y="236.4" width="4.2" height="4.8" fill="none" stroke="#e014e0" stroke-width="0.95"/>
<rect x="688.3" y="235.5" width="3.2" height="5.0" fill="none" stroke="#e014e0" stroke-width="0.95"/>
<path d="M694.4 229.5l-5 3.5 5 3.5" fill="none" stroke="#666" stroke-width="0.7"/>
<rect x="701.6" y="238.0" width="4.0" height="2.8" fill="#d89850" opacity="0.75"/>
<path d="M693.5 228.0q3 5 6 5" fill="none" stroke="#666" stroke-width="0.7"/>
<line x1="737.1" y1="93.3" x2="737.1" y2="110.2" stroke="#555" stroke-width="1.0"/>
<line x1="721.6" y1="93.3" x2="737.1" y2="93.3" stroke="#b040b0" stroke-width="1.8"/>
<rect x="717.6" y="95.9" width="4.2" height="4.8" fill="none" stroke="#e014e0" stroke-width="0.95"/>
<circle cx="719.6" cy="104.7" r="2.1" fill="none" stroke="#e014e0" stroke-width="0.95"/>
<rect x="741.0" y="96.3" width="3.2" height="5.0" fill="none" stroke="#e014e0" stroke-width="0.95"/>
<path d="M737.1 100.8l5 3.5-5 3.5" fill="none" stroke="#666" stroke-width="0.7"/>
<rect x="727.1" y="98.3" width="4.0" height="2.8" fill="#d89850" opacity="0.75"/>
<path d="M725.7 110.2q3-5 6-5" fill="none" stroke="#666" stroke-width="0.7"/>
<line x1="737.1" y1="228.0" x2="737.1" y2="244.6" stroke="#555" stroke-width="1.0"/>
<line x1="721.6" y1="244.6" x2="737.1" y2="244.6" stroke="#b040b0" stroke-width="1.8"/>
<circle cx="719.6" cy="232.6" r="2.1" fill="none" stroke="#e014e0" stroke-width="0.95"/>
<rect x="717.6" y="236.4" width="4.2" height="4.8" fill="none" stroke="#e014e0" stroke-width="0.95"/>
<rect x="741.0" y="235.5" width="3.2" height="5.0" fill="none" stroke="#e014e0" stroke-width="0.95"/>
<path d="M737.1 229.5l5 3.5-5 3.5" fill="none" stroke="#666" stroke-width="0.7"/>
<rect x="727.1" y="238.0" width="4.0" height="2.8" fill="#d89850" opacity="0.75"/>
<path d="M725.7 228.0q3 5 6 5" fill="none" stroke="#666" stroke-width="0.7"/>
<line x1="758.7" y1="93.3" x2="758.7" y2="110.2" stroke="#555" stroke-width="1.0"/>
<line x1="758.7" y1="93.3" x2="773.9" y2="93.3" stroke="#b040b0" stroke-width="1.8"/>
<rect x="773.9" y="95.9" width="4.2" height="4.8" fill="none" stroke="#e014e0" stroke-width="0.95"/>
<circle cx="775.9" cy="104.7" r="2.1" fill="none" stroke="#e014e0" stroke-width="0.95"/>
<rect x="752.6" y="96.3" width="3.2" height="5.0" fill="none" stroke="#e014e0" stroke-width="0.95"/>
<path d="M758.7 100.8l-5 3.5 5 3.5" fill="none" stroke="#666" stroke-width="0.7"/>
<rect x="765.9" y="98.3" width="4.0" height="2.8" fill="#d89850" opacity="0.75"/>
<path d="M757.8 110.2q3-5 6-5" fill="none" stroke="#666" stroke-width="0.7"/>
<line x1="758.7" y1="228.0" x2="758.7" y2="244.6" stroke="#555" stroke-width="1.0"/>
<line x1="758.7" y1="244.6" x2="773.9" y2="244.6" stroke="#b040b0" stroke-width="1.8"/>
<circle cx="775.9" cy="232.6" r="2.1" fill="none" stroke="#e014e0" stroke-width="0.95"/>
<rect x="773.9" y="236.4" width="4.2" height="4.8" fill="none" stroke="#e014e0" stroke-width="0.95"/>
<rect x="752.6" y="235.5" width="3.2" height="5.0" fill="none" stroke="#e014e0" stroke-width="0.95"/>
<path d="M758.7 229.5l-5 3.5 5 3.5" fill="none" stroke="#666" stroke-width="0.7"/>
<rect x="765.9" y="238.0" width="4.0" height="2.8" fill="#d89850" opacity="0.75"/>
<path d="M757.8 228.0q3 5 6 5" fill="none" stroke="#666" stroke-width="0.7"/>
<line x1="801.5" y1="93.3" x2="801.5" y2="110.2" stroke="#555" stroke-width="1.0"/>
<line x1="785.9" y1="93.3" x2="801.5" y2="93.3" stroke="#b040b0" stroke-width="1.8"/>
<rect x="781.9" y="95.9" width="4.2" height="4.8" fill="none" stroke="#e014e0" stroke-width="0.95"/>
<circle cx="783.9" cy="104.7" r="2.1" fill="none" stroke="#e014e0" stroke-width="0.95"/>
<rect x="805.4" y="96.3" width="3.2" height="5.0" fill="none" stroke="#e014e0" stroke-width="0.95"/>
<path d="M801.5 100.8l5 3.5-5 3.5" fill="none" stroke="#666" stroke-width="0.7"/>
<rect x="791.4" y="98.3" width="4.0" height="2.8" fill="#d89850" opacity="0.75"/>
<path d="M790.0 110.2q3-5 6-5" fill="none" stroke="#666" stroke-width="0.7"/>
<line x1="801.5" y1="228.0" x2="801.5" y2="244.6" stroke="#555" stroke-width="1.0"/>
<line x1="785.9" y1="244.6" x2="801.5" y2="244.6" stroke="#b040b0" stroke-width="1.8"/>
<circle cx="783.9" cy="232.6" r="2.1" fill="none" stroke="#e014e0" stroke-width="0.95"/>
<rect x="781.9" y="236.4" width="4.2" height="4.8" fill="none" stroke="#e014e0" stroke-width="0.95"/>
<rect x="805.4" y="235.5" width="3.2" height="5.0" fill="none" stroke="#e014e0" stroke-width="0.95"/>
<path d="M801.5 229.5l5 3.5-5 3.5" fill="none" stroke="#666" stroke-width="0.7"/>
<rect x="791.4" y="238.0" width="4.0" height="2.8" fill="#d89850" opacity="0.75"/>
<path d="M790.0 228.0q3 5 6 5" fill="none" stroke="#666" stroke-width="0.7"/>
<line x1="823.1" y1="228.0" x2="823.1" y2="244.6" stroke="#555" stroke-width="1.0"/>
<line x1="823.1" y1="244.6" x2="838.2" y2="244.6" stroke="#b040b0" stroke-width="1.8"/>
<circle cx="840.2" cy="232.6" r="2.1" fill="none" stroke="#e014e0" stroke-width="0.95"/>
<rect x="838.2" y="236.4" width="4.2" height="4.8" fill="none" stroke="#e014e0" stroke-width="0.95"/>
<rect x="817.0" y="235.5" width="3.2" height="5.0" fill="none" stroke="#e014e0" stroke-width="0.95"/>
<path d="M823.1 229.5l-5 3.5 5 3.5" fill="none" stroke="#666" stroke-width="0.7"/>
<rect x="830.2" y="238.0" width="4.0" height="2.8" fill="#d89850" opacity="0.75"/>
<path d="M822.1 228.0q3 5 6 5" fill="none" stroke="#666" stroke-width="0.7"/>
<line x1="865.8" y1="228.0" x2="865.8" y2="244.6" stroke="#555" stroke-width="1.0"/>
<line x1="850.2" y1="244.6" x2="865.8" y2="244.6" stroke="#b040b0" stroke-width="1.8"/>
<circle cx="848.2" cy="232.6" r="2.1" fill="none" stroke="#e014e0" stroke-width="0.95"/>
<rect x="846.2" y="236.4" width="4.2" height="4.8" fill="none" stroke="#e014e0" stroke-width="0.95"/>
<rect x="869.7" y="235.5" width="3.2" height="5.0" fill="none" stroke="#e014e0" stroke-width="0.95"/>
<path d="M865.8 229.5l5 3.5-5 3.5" fill="none" stroke="#666" stroke-width="0.7"/>
<rect x="855.7" y="238.0" width="4.0" height="2.8" fill="#d89850" opacity="0.75"/>
<path d="M854.3 228.0q3 5 6 5" fill="none" stroke="#666" stroke-width="0.7"/>
<rect x="455.6" y="90.6" width="5.4" height="5.4" fill="#7c7c7c" stroke="none" stroke-width="1"/>
<rect x="455.6" y="155.8" width="5.4" height="5.4" fill="#7c7c7c" stroke="none" stroke-width="1"/>
<rect x="455.6" y="176.9" width="5.4" height="5.4" fill="#7c7c7c" stroke="none" stroke-width="1"/>
<rect x="455.6" y="241.9" width="5.4" height="5.4" fill="#7c7c7c" stroke="none" stroke-width="1"/>
<rect x="487.8" y="90.6" width="5.4" height="5.4" fill="#7c7c7c" stroke="none" stroke-width="1"/>
<rect x="487.8" y="155.8" width="5.4" height="5.4" fill="#7c7c7c" stroke="none" stroke-width="1"/>
<rect x="487.8" y="176.9" width="5.4" height="5.4" fill="#7c7c7c" stroke="none" stroke-width="1"/>
<rect x="487.8" y="241.9" width="5.4" height="5.4" fill="#7c7c7c" stroke="none" stroke-width="1"/>
<rect x="519.9" y="90.6" width="5.4" height="5.4" fill="#7c7c7c" stroke="none" stroke-width="1"/>
<rect x="519.9" y="155.8" width="5.4" height="5.4" fill="#7c7c7c" stroke="none" stroke-width="1"/>
<rect x="519.9" y="176.9" width="5.4" height="5.4" fill="#7c7c7c" stroke="none" stroke-width="1"/>
<rect x="519.9" y="241.9" width="5.4" height="5.4" fill="#7c7c7c" stroke="none" stroke-width="1"/>
<rect x="584.2" y="90.6" width="5.4" height="5.4" fill="#7c7c7c" stroke="none" stroke-width="1"/>
<rect x="584.2" y="155.8" width="5.4" height="5.4" fill="#7c7c7c" stroke="none" stroke-width="1"/>
<rect x="584.2" y="176.9" width="5.4" height="5.4" fill="#7c7c7c" stroke="none" stroke-width="1"/>
<rect x="584.2" y="241.9" width="5.4" height="5.4" fill="#7c7c7c" stroke="none" stroke-width="1"/>
<rect x="648.6" y="90.6" width="5.4" height="5.4" fill="#7c7c7c" stroke="none" stroke-width="1"/>
<rect x="648.6" y="155.8" width="5.4" height="5.4" fill="#7c7c7c" stroke="none" stroke-width="1"/>
<rect x="648.6" y="176.9" width="5.4" height="5.4" fill="#7c7c7c" stroke="none" stroke-width="1"/>
<rect x="648.6" y="241.9" width="5.4" height="5.4" fill="#7c7c7c" stroke="none" stroke-width="1"/>
<rect x="712.9" y="90.6" width="5.4" height="5.4" fill="#7c7c7c" stroke="none" stroke-width="1"/>
<rect x="712.9" y="155.8" width="5.4" height="5.4" fill="#7c7c7c" stroke="none" stroke-width="1"/>
<rect x="712.9" y="176.9" width="5.4" height="5.4" fill="#7c7c7c" stroke="none" stroke-width="1"/>
<rect x="712.9" y="241.9" width="5.4" height="5.4" fill="#7c7c7c" stroke="none" stroke-width="1"/>
<rect x="777.2" y="90.6" width="5.4" height="5.4" fill="#7c7c7c" stroke="none" stroke-width="1"/>
<rect x="777.2" y="155.8" width="5.4" height="5.4" fill="#7c7c7c" stroke="none" stroke-width="1"/>
<rect x="777.2" y="176.9" width="5.4" height="5.4" fill="#7c7c7c" stroke="none" stroke-width="1"/>
<rect x="777.2" y="241.9" width="5.4" height="5.4" fill="#7c7c7c" stroke="none" stroke-width="1"/>
<rect x="841.5" y="90.6" width="5.4" height="5.4" fill="#7c7c7c" stroke="none" stroke-width="1"/>
<rect x="841.5" y="155.8" width="5.4" height="5.4" fill="#7c7c7c" stroke="none" stroke-width="1"/>
<rect x="841.5" y="176.9" width="5.4" height="5.4" fill="#7c7c7c" stroke="none" stroke-width="1"/>
<rect x="841.5" y="241.9" width="5.4" height="5.4" fill="#7c7c7c" stroke="none" stroke-width="1"/>
<rect x="873.7" y="90.6" width="5.4" height="5.4" fill="#7c7c7c" stroke="none" stroke-width="1"/>
<rect x="873.7" y="155.8" width="5.4" height="5.4" fill="#7c7c7c" stroke="none" stroke-width="1"/>
<rect x="873.7" y="176.9" width="5.4" height="5.4" fill="#7c7c7c" stroke="none" stroke-width="1"/>
<rect x="873.7" y="241.9" width="5.4" height="5.4" fill="#7c7c7c" stroke="none" stroke-width="1"/>
<rect x="548.1" y="86.7" width="13.4" height="5.4" fill="none" stroke="#d89850" stroke-width="1.0"/>
<rect x="549.3" y="87.9" width="11.0" height="3.4" fill="#d89850" opacity="0.55"/>
<rect x="612.4" y="86.7" width="13.4" height="5.4" fill="none" stroke="#d89850" stroke-width="1.0"/>
<rect x="613.6" y="87.9" width="11.0" height="3.4" fill="#d89850" opacity="0.55"/>
<rect x="676.7" y="86.7" width="13.4" height="5.4" fill="none" stroke="#d89850" stroke-width="1.0"/>
<rect x="677.9" y="87.9" width="11.0" height="3.4" fill="#d89850" opacity="0.55"/>
<rect x="741.0" y="86.7" width="13.4" height="5.4" fill="none" stroke="#d89850" stroke-width="1.0"/>
<rect x="742.2" y="87.9" width="11.0" height="3.4" fill="#d89850" opacity="0.55"/>
<rect x="483.8" y="246.0" width="13.4" height="5.6" fill="none" stroke="#d89850" stroke-width="1.0"/>
<rect x="485.0" y="247.2" width="11.0" height="3.6" fill="#d89850" opacity="0.55"/>
<rect x="548.1" y="246.0" width="13.4" height="5.6" fill="none" stroke="#d89850" stroke-width="1.0"/>
<rect x="549.3" y="247.2" width="11.0" height="3.6" fill="#d89850" opacity="0.55"/>
<rect x="612.4" y="246.0" width="13.4" height="5.6" fill="none" stroke="#d89850" stroke-width="1.0"/>
<rect x="613.6" y="247.2" width="11.0" height="3.6" fill="#d89850" opacity="0.55"/>
<rect x="676.7" y="246.0" width="13.4" height="5.6" fill="none" stroke="#d89850" stroke-width="1.0"/>
<rect x="677.9" y="247.2" width="11.0" height="3.6" fill="#d89850" opacity="0.55"/>
<rect x="741.0" y="246.0" width="13.4" height="5.6" fill="none" stroke="#d89850" stroke-width="1.0"/>
<rect x="742.2" y="247.2" width="11.0" height="3.6" fill="#d89850" opacity="0.55"/>
<rect x="805.4" y="246.0" width="13.4" height="5.6" fill="none" stroke="#d89850" stroke-width="1.0"/>
<rect x="806.6" y="247.2" width="11.0" height="3.6" fill="#d89850" opacity="0.55"/>
<line x1="689.4" y1="93.3" x2="707.4" y2="93.3" stroke="#b040b0" stroke-width="1.8"/>
<rect x="683.4" y="94.8" width="12.6" height="33.5" fill="none" stroke="#555" stroke-width="1.0"/>
<rect x="683.9" y="95.1" width="11.6" height="7.6" fill="none" stroke="#4a4a4a" stroke-width="0.8"/>
<rect x="686.2" y="96.9" width="6.5" height="4.0" fill="none" stroke="#e014e0" stroke-width="1.0"/>
<path d="M696.0 96.3l3 2.5-3 2.5" fill="none" stroke="#666" stroke-width="0.6"/>
<rect x="683.9" y="103.3" width="11.6" height="7.6" fill="none" stroke="#4a4a4a" stroke-width="0.8"/>
<rect x="686.2" y="105.1" width="6.5" height="4.0" fill="none" stroke="#e014e0" stroke-width="1.0"/>
<path d="M696.0 104.5l3 2.5-3 2.5" fill="none" stroke="#666" stroke-width="0.6"/>
<rect x="683.9" y="111.5" width="11.6" height="7.6" fill="none" stroke="#4a4a4a" stroke-width="0.8"/>
<rect x="686.2" y="113.3" width="6.5" height="4.0" fill="none" stroke="#e014e0" stroke-width="1.0"/>
<path d="M696.0 112.7l3 2.5-3 2.5" fill="none" stroke="#666" stroke-width="0.6"/>
<rect x="683.9" y="119.7" width="11.6" height="7.6" fill="none" stroke="#4a4a4a" stroke-width="0.8"/>
<rect x="686.2" y="121.5" width="6.5" height="4.0" fill="none" stroke="#e014e0" stroke-width="1.0"/>
<path d="M696.0 120.9l3 2.5-3 2.5" fill="none" stroke="#666" stroke-width="0.6"/>
<rect x="682.9" y="127.3" width="8.0" height="30.2" fill="none" stroke="#555" stroke-width="0.9"/>
<line x1="682.9" y1="133.3" x2="690.9" y2="133.3" stroke="#444" stroke-width="0.7"/>
<line x1="682.9" y1="139.3" x2="690.9" y2="139.3" stroke="#444" stroke-width="0.7"/>
<line x1="682.9" y1="145.3" x2="690.9" y2="145.3" stroke="#444" stroke-width="0.7"/>
<line x1="682.9" y1="151.3" x2="690.9" y2="151.3" stroke="#444" stroke-width="0.7"/>
<line x1="682.9" y1="157.3" x2="690.9" y2="157.3" stroke="#444" stroke-width="0.7"/>
<line x1="707.6" y1="93.3" x2="707.6" y2="158.5" stroke="#555" stroke-width="1.0"/>
<line x1="714.8" y1="93.3" x2="714.8" y2="158.5" stroke="#555" stroke-width="1.0"/>
<rect x="707.6" y="130.3" width="7.2" height="27.2" fill="none" stroke="#4a4a4a" stroke-width="0.8"/>
<rect x="699.5" y="100.3" width="13.0" height="22.0" fill="none" stroke="#229a22" stroke-width="0.9"/>
<rect x="702.5" y="110.3" width="6.0" height="2.6" fill="#d89850" opacity="0.75"/>
<rect x="709.4" y="110.3" width="3.0" height="6.0" fill="#c8c8c8" opacity="0.6"/>
<line x1="493.5" y1="111.7" x2="519.6" y2="111.7" stroke="#6a6a6a" stroke-width="0.8"/>
<line x1="493.5" y1="115.0" x2="519.6" y2="115.0" stroke="#6a6a6a" stroke-width="0.8"/>
<line x1="493.5" y1="118.3" x2="519.6" y2="118.3" stroke="#6a6a6a" stroke-width="0.8"/>
<line x1="493.5" y1="121.6" x2="519.6" y2="121.6" stroke="#6a6a6a" stroke-width="0.8"/>
<line x1="493.5" y1="124.9" x2="519.6" y2="124.9" stroke="#6a6a6a" stroke-width="0.8"/>
<line x1="493.5" y1="128.2" x2="519.6" y2="128.2" stroke="#6a6a6a" stroke-width="0.8"/>
<line x1="493.5" y1="131.5" x2="519.6" y2="131.5" stroke="#6a6a6a" stroke-width="0.8"/>
<line x1="493.5" y1="134.8" x2="519.6" y2="134.8" stroke="#6a6a6a" stroke-width="0.8"/>
<line x1="493.5" y1="138.1" x2="519.6" y2="138.1" stroke="#6a6a6a" stroke-width="0.8"/>
<line x1="493.5" y1="141.4" x2="519.6" y2="141.4" stroke="#6a6a6a" stroke-width="0.8"/>
<line x1="493.5" y1="144.7" x2="519.6" y2="144.7" stroke="#6a6a6a" stroke-width="0.8"/>
<line x1="506.5" y1="112.2" x2="506.5" y2="144.5" stroke="#777" stroke-width="1.2"/>
<rect x="492.0" y="90.3" width="29.2" height="2.0" fill="#444" stroke="none" stroke-width="1"/>
<line x1="815.1" y1="111.7" x2="841.2" y2="111.7" stroke="#6a6a6a" stroke-width="0.8"/>
<line x1="815.1" y1="115.0" x2="841.2" y2="115.0" stroke="#6a6a6a" stroke-width="0.8"/>
<line x1="815.1" y1="118.3" x2="841.2" y2="118.3" stroke="#6a6a6a" stroke-width="0.8"/>
<line x1="815.1" y1="121.6" x2="841.2" y2="121.6" stroke="#6a6a6a" stroke-width="0.8"/>
<line x1="815.1" y1="124.9" x2="841.2" y2="124.9" stroke="#6a6a6a" stroke-width="0.8"/>
<line x1="815.1" y1="128.2" x2="841.2" y2="128.2" stroke="#6a6a6a" stroke-width="0.8"/>
<line x1="815.1" y1="131.5" x2="841.2" y2="131.5" stroke="#6a6a6a" stroke-width="0.8"/>
<line x1="815.1" y1="134.8" x2="841.2" y2="134.8" stroke="#6a6a6a" stroke-width="0.8"/>
<line x1="815.1" y1="138.1" x2="841.2" y2="138.1" stroke="#6a6a6a" stroke-width="0.8"/>
<line x1="815.1" y1="141.4" x2="841.2" y2="141.4" stroke="#6a6a6a" stroke-width="0.8"/>
<line x1="815.1" y1="144.7" x2="841.2" y2="144.7" stroke="#6a6a6a" stroke-width="0.8"/>
<line x1="828.1" y1="112.2" x2="828.1" y2="144.5" stroke="#777" stroke-width="1.2"/>
<rect x="813.6" y="90.3" width="29.2" height="2.0" fill="#444" stroke="none" stroke-width="1"/>
<rect x="845.5" y="108.5" width="4.0" height="25.0" fill="none" stroke="#26b826" stroke-width="1.0"/>
<rect x="869.0" y="112.0" width="5.0" height="5.5" fill="none" stroke="#26b826" stroke-width="1.0"/>
<rect x="869.0" y="120.0" width="5.0" height="5.5" fill="none" stroke="#26b826" stroke-width="1.0"/>
<rect x="869.0" y="128.0" width="5.0" height="5.5" fill="none" stroke="#26b826" stroke-width="1.0"/>
<rect x="866.0" y="137.0" width="11.0" height="13.0" fill="none" stroke="#26b826" stroke-width="1.0"/>
<rect x="869.0" y="140.0" width="6.0" height="8.0" fill="none" stroke="#26b826" stroke-width="1.0"/>
<rect x="882.5" y="118.5" width="13.5" height="2.6" fill="#c8c8c8" opacity="0.7"/>
<rect x="884.0" y="123.5" width="9.0" height="2.4" fill="#c8c8c8" opacity="0.6"/>
<rect x="877.6" y="144.6" width="12.0" height="2.6" fill="#d89850" opacity="0.75"/>
<rect x="781.4" y="149.0" width="12.0" height="3.0" fill="#2050e0" opacity="0.9"/>
<line x1="849.5" y1="93.3" x2="865.8" y2="93.3" stroke="#b040b0" stroke-width="1.8"/>
<line x1="865.8" y1="93.3" x2="865.8" y2="110.2" stroke="#555" stroke-width="1.0"/>
<rect x="855.6" y="98.3" width="4.0" height="2.8" fill="#d89850" opacity="0.75"/>
<path d="M458 156h6v7" fill="none" stroke="#e0e0e0" stroke-width="1.4"/>
<line x1="474.4" y1="77.9" x2="474.4" y2="260.2" stroke="#26b826" stroke-width="1.15"/>
<line x1="506.5" y1="77.9" x2="506.5" y2="260.2" stroke="#26b826" stroke-width="1.15"/>
<line x1="538.7" y1="77.9" x2="538.7" y2="260.2" stroke="#26b826" stroke-width="1.15"/>
<line x1="570.9" y1="77.9" x2="570.9" y2="260.2" stroke="#26b826" stroke-width="1.15"/>
<line x1="603.0" y1="77.9" x2="603.0" y2="260.2" stroke="#26b826" stroke-width="1.15"/>
<line x1="635.2" y1="77.9" x2="635.2" y2="260.2" stroke="#26b826" stroke-width="1.15"/>
<line x1="667.3" y1="77.9" x2="667.3" y2="260.2" stroke="#26b826" stroke-width="1.15"/>
<line x1="699.5" y1="77.9" x2="699.5" y2="260.2" stroke="#26b826" stroke-width="1.15"/>
<line x1="731.7" y1="77.9" x2="731.7" y2="260.2" stroke="#26b826" stroke-width="1.15"/>
<line x1="763.8" y1="77.9" x2="763.8" y2="260.2" stroke="#26b826" stroke-width="1.15"/>
<line x1="796.0" y1="77.9" x2="796.0" y2="260.2" stroke="#26b826" stroke-width="1.15"/>
<line x1="828.1" y1="77.9" x2="828.1" y2="260.2" stroke="#26b826" stroke-width="1.15"/>
<line x1="860.3" y1="77.9" x2="860.3" y2="260.2" stroke="#26b826" stroke-width="1.15"/>
<line x1="458.3" y1="77.9" x2="458.3" y2="119.8" stroke="#229a22" stroke-width="1.5"/>
<line x1="458.3" y1="218.2" x2="458.3" y2="260.2" stroke="#229a22" stroke-width="1.5"/>
<line x1="490.5" y1="77.9" x2="490.5" y2="119.8" stroke="#229a22" stroke-width="1.5"/>
<line x1="490.5" y1="218.2" x2="490.5" y2="260.2" stroke="#229a22" stroke-width="1.5"/>
<line x1="522.6" y1="77.9" x2="522.6" y2="119.8" stroke="#229a22" stroke-width="1.5"/>
<line x1="522.6" y1="218.2" x2="522.6" y2="260.2" stroke="#229a22" stroke-width="1.5"/>
<line x1="554.8" y1="77.9" x2="554.8" y2="119.8" stroke="#229a22" stroke-width="1.5"/>
<line x1="554.8" y1="218.2" x2="554.8" y2="260.2" stroke="#229a22" stroke-width="1.5"/>
<line x1="586.9" y1="77.9" x2="586.9" y2="119.8" stroke="#229a22" stroke-width="1.5"/>
<line x1="586.9" y1="218.2" x2="586.9" y2="260.2" stroke="#229a22" stroke-width="1.5"/>
<line x1="619.1" y1="77.9" x2="619.1" y2="119.8" stroke="#229a22" stroke-width="1.5"/>
<line x1="619.1" y1="218.2" x2="619.1" y2="260.2" stroke="#229a22" stroke-width="1.5"/>
<line x1="651.3" y1="77.9" x2="651.3" y2="119.8" stroke="#229a22" stroke-width="1.5"/>
<line x1="651.3" y1="218.2" x2="651.3" y2="260.2" stroke="#229a22" stroke-width="1.5"/>
<line x1="683.4" y1="77.9" x2="683.4" y2="119.8" stroke="#229a22" stroke-width="1.5"/>
<line x1="683.4" y1="218.2" x2="683.4" y2="260.2" stroke="#229a22" stroke-width="1.5"/>
<line x1="715.6" y1="77.9" x2="715.6" y2="119.8" stroke="#229a22" stroke-width="1.5"/>
<line x1="715.6" y1="218.2" x2="715.6" y2="260.2" stroke="#229a22" stroke-width="1.5"/>
<line x1="747.7" y1="77.9" x2="747.7" y2="119.8" stroke="#229a22" stroke-width="1.5"/>
<line x1="747.7" y1="218.2" x2="747.7" y2="260.2" stroke="#229a22" stroke-width="1.5"/>
<line x1="779.9" y1="77.9" x2="779.9" y2="119.8" stroke="#229a22" stroke-width="1.5"/>
<line x1="779.9" y1="218.2" x2="779.9" y2="260.2" stroke="#229a22" stroke-width="1.5"/>
<line x1="812.1" y1="77.9" x2="812.1" y2="119.8" stroke="#229a22" stroke-width="1.5"/>
<line x1="812.1" y1="218.2" x2="812.1" y2="260.2" stroke="#229a22" stroke-width="1.5"/>
<line x1="844.2" y1="77.9" x2="844.2" y2="119.8" stroke="#229a22" stroke-width="1.5"/>
<line x1="844.2" y1="218.2" x2="844.2" y2="260.2" stroke="#229a22" stroke-width="1.5"/>
<line x1="876.4" y1="77.9" x2="876.4" y2="119.8" stroke="#229a22" stroke-width="1.5"/>
<line x1="876.4" y1="218.2" x2="876.4" y2="260.2" stroke="#229a22" stroke-width="1.5"/>
<path d="M465.4 158.5A8 8 0 0 1 473.4 150.5" fill="none" stroke="#777" stroke-width="0.8"/>
<path d="M482.4 179.6A8 8 0 0 1 474.4 187.6" fill="none" stroke="#777" stroke-width="0.8"/>
<path d="M497.5 158.5A8 8 0 0 1 505.5 150.5" fill="none" stroke="#777" stroke-width="0.8"/>
<path d="M514.5 179.6A8 8 0 0 1 506.5 187.6" fill="none" stroke="#777" stroke-width="0.8"/>
<path d="M529.7 158.5A8 8 0 0 1 537.7 150.5" fill="none" stroke="#777" stroke-width="0.8"/>
<path d="M546.7 179.6A8 8 0 0 1 538.7 187.6" fill="none" stroke="#777" stroke-width="0.8"/>
<path d="M561.9 158.5A8 8 0 0 1 569.9 150.5" fill="none" stroke="#777" stroke-width="0.8"/>
<path d="M578.9 179.6A8 8 0 0 1 570.9 187.6" fill="none" stroke="#777" stroke-width="0.8"/>
<path d="M594.0 158.5A8 8 0 0 1 602.0 150.5" fill="none" stroke="#777" stroke-width="0.8"/>
<path d="M611.0 179.6A8 8 0 0 1 603.0 187.6" fill="none" stroke="#777" stroke-width="0.8"/>
<path d="M626.2 158.5A8 8 0 0 1 634.2 150.5" fill="none" stroke="#777" stroke-width="0.8"/>
<path d="M643.2 179.6A8 8 0 0 1 635.2 187.6" fill="none" stroke="#777" stroke-width="0.8"/>
<path d="M658.3 158.5A8 8 0 0 1 666.3 150.5" fill="none" stroke="#777" stroke-width="0.8"/>
<path d="M675.3 179.6A8 8 0 0 1 667.3 187.6" fill="none" stroke="#777" stroke-width="0.8"/>
<path d="M690.5 158.5A8 8 0 0 1 698.5 150.5" fill="none" stroke="#777" stroke-width="0.8"/>
<path d="M707.5 179.6A8 8 0 0 1 699.5 187.6" fill="none" stroke="#777" stroke-width="0.8"/>
<path d="M722.7 158.5A8 8 0 0 1 730.7 150.5" fill="none" stroke="#777" stroke-width="0.8"/>
<path d="M739.7 179.6A8 8 0 0 1 731.7 187.6" fill="none" stroke="#777" stroke-width="0.8"/>
<path d="M754.8 158.5A8 8 0 0 1 762.8 150.5" fill="none" stroke="#777" stroke-width="0.8"/>
<path d="M771.8 179.6A8 8 0 0 1 763.8 187.6" fill="none" stroke="#777" stroke-width="0.8"/>
<path d="M787.0 158.5A8 8 0 0 1 795.0 150.5" fill="none" stroke="#777" stroke-width="0.8"/>
<path d="M804.0 179.6A8 8 0 0 1 796.0 187.6" fill="none" stroke="#777" stroke-width="0.8"/>
<path d="M819.1 158.5A8 8 0 0 1 827.1 150.5" fill="none" stroke="#777" stroke-width="0.8"/>
<path d="M836.1 179.6A8 8 0 0 1 828.1 187.6" fill="none" stroke="#777" stroke-width="0.8"/>
<path d="M851.3 158.5A8 8 0 0 1 859.3 150.5" fill="none" stroke="#777" stroke-width="0.8"/>
<path d="M868.3 179.6A8 8 0 0 1 860.3 187.6" fill="none" stroke="#777" stroke-width="0.8"/>
<line x1="474.4" y1="122.2" x2="474.4" y2="146.0" stroke="#30e0c8" stroke-width="1.5"/>
<circle cx="474.4" cy="122.2" r="1.2" fill="none" stroke="#bbb" stroke-width="0.6"/>
<circle cx="474.4" cy="146.0" r="1.2" fill="none" stroke="#bbb" stroke-width="0.6"/>
<rect x="472.8" y="132.0" width="2.0" height="5.0" fill="#c8c8c8" opacity="0.55"/>
<rect x="472.4" y="115.0" width="4.0" height="2.8" fill="#d89850" opacity="0.75"/>
<line x1="474.4" y1="191.8" x2="474.4" y2="215.5" stroke="#30e0c8" stroke-width="1.5"/>
<circle cx="474.4" cy="191.8" r="1.2" fill="none" stroke="#bbb" stroke-width="0.6"/>
<circle cx="474.4" cy="215.5" r="1.2" fill="none" stroke="#bbb" stroke-width="0.6"/>
<rect x="472.8" y="201.0" width="2.0" height="5.0" fill="#c8c8c8" opacity="0.55"/>
<rect x="472.4" y="223.0" width="4.0" height="2.8" fill="#d89850" opacity="0.75"/>
<rect x="472.9" y="163.0" width="3.0" height="4.0" fill="#c8c8c8" opacity="0.45"/>
<rect x="472.9" y="170.6" width="3.0" height="4.0" fill="#c8c8c8" opacity="0.45"/>
<line x1="506.5" y1="191.8" x2="506.5" y2="215.5" stroke="#30e0c8" stroke-width="1.5"/>
<circle cx="506.5" cy="191.8" r="1.2" fill="none" stroke="#bbb" stroke-width="0.6"/>
<circle cx="506.5" cy="215.5" r="1.2" fill="none" stroke="#bbb" stroke-width="0.6"/>
<rect x="504.9" y="201.0" width="2.0" height="5.0" fill="#c8c8c8" opacity="0.55"/>
<rect x="504.5" y="223.0" width="4.0" height="2.8" fill="#d89850" opacity="0.75"/>
<rect x="505.0" y="163.0" width="3.0" height="4.0" fill="#c8c8c8" opacity="0.45"/>
<rect x="505.0" y="170.6" width="3.0" height="4.0" fill="#c8c8c8" opacity="0.45"/>
<line x1="538.7" y1="122.2" x2="538.7" y2="146.0" stroke="#30e0c8" stroke-width="1.5"/>
<circle cx="538.7" cy="122.2" r="1.2" fill="none" stroke="#bbb" stroke-width="0.6"/>
<circle cx="538.7" cy="146.0" r="1.2" fill="none" stroke="#bbb" stroke-width="0.6"/>
<rect x="537.1" y="132.0" width="2.0" height="5.0" fill="#c8c8c8" opacity="0.55"/>
<rect x="536.7" y="115.0" width="4.0" height="2.8" fill="#d89850" opacity="0.75"/>
<line x1="538.7" y1="191.8" x2="538.7" y2="215.5" stroke="#30e0c8" stroke-width="1.5"/>
<circle cx="538.7" cy="191.8" r="1.2" fill="none" stroke="#bbb" stroke-width="0.6"/>
<circle cx="538.7" cy="215.5" r="1.2" fill="none" stroke="#bbb" stroke-width="0.6"/>
<rect x="537.1" y="201.0" width="2.0" height="5.0" fill="#c8c8c8" opacity="0.55"/>
<rect x="536.7" y="223.0" width="4.0" height="2.8" fill="#d89850" opacity="0.75"/>
<rect x="537.2" y="163.0" width="3.0" height="4.0" fill="#c8c8c8" opacity="0.45"/>
<rect x="537.2" y="170.6" width="3.0" height="4.0" fill="#c8c8c8" opacity="0.45"/>
<line x1="570.9" y1="122.2" x2="570.9" y2="146.0" stroke="#30e0c8" stroke-width="1.5"/>
<circle cx="570.9" cy="122.2" r="1.2" fill="none" stroke="#bbb" stroke-width="0.6"/>
<circle cx="570.9" cy="146.0" r="1.2" fill="none" stroke="#bbb" stroke-width="0.6"/>
<rect x="569.3" y="132.0" width="2.0" height="5.0" fill="#c8c8c8" opacity="0.55"/>
<rect x="568.9" y="115.0" width="4.0" height="2.8" fill="#d89850" opacity="0.75"/>
<line x1="570.9" y1="191.8" x2="570.9" y2="215.5" stroke="#30e0c8" stroke-width="1.5"/>
<circle cx="570.9" cy="191.8" r="1.2" fill="none" stroke="#bbb" stroke-width="0.6"/>
<circle cx="570.9" cy="215.5" r="1.2" fill="none" stroke="#bbb" stroke-width="0.6"/>
<rect x="569.3" y="201.0" width="2.0" height="5.0" fill="#c8c8c8" opacity="0.55"/>
<rect x="568.9" y="223.0" width="4.0" height="2.8" fill="#d89850" opacity="0.75"/>
<rect x="569.4" y="163.0" width="3.0" height="4.0" fill="#c8c8c8" opacity="0.45"/>
<rect x="569.4" y="170.6" width="3.0" height="4.0" fill="#c8c8c8" opacity="0.45"/>
<line x1="603.0" y1="122.2" x2="603.0" y2="146.0" stroke="#30e0c8" stroke-width="1.5"/>
<circle cx="603.0" cy="122.2" r="1.2" fill="none" stroke="#bbb" stroke-width="0.6"/>
<circle cx="603.0" cy="146.0" r="1.2" fill="none" stroke="#bbb" stroke-width="0.6"/>
<rect x="601.4" y="132.0" width="2.0" height="5.0" fill="#c8c8c8" opacity="0.55"/>
<rect x="601.0" y="115.0" width="4.0" height="2.8" fill="#d89850" opacity="0.75"/>
<line x1="603.0" y1="191.8" x2="603.0" y2="215.5" stroke="#30e0c8" stroke-width="1.5"/>
<circle cx="603.0" cy="191.8" r="1.2" fill="none" stroke="#bbb" stroke-width="0.6"/>
<circle cx="603.0" cy="215.5" r="1.2" fill="none" stroke="#bbb" stroke-width="0.6"/>
<rect x="601.4" y="201.0" width="2.0" height="5.0" fill="#c8c8c8" opacity="0.55"/>
<rect x="601.0" y="223.0" width="4.0" height="2.8" fill="#d89850" opacity="0.75"/>
<rect x="601.5" y="163.0" width="3.0" height="4.0" fill="#c8c8c8" opacity="0.45"/>
<rect x="601.5" y="170.6" width="3.0" height="4.0" fill="#c8c8c8" opacity="0.45"/>
<line x1="635.2" y1="122.2" x2="635.2" y2="146.0" stroke="#30e0c8" stroke-width="1.5"/>
<circle cx="635.2" cy="122.2" r="1.2" fill="none" stroke="#bbb" stroke-width="0.6"/>
<circle cx="635.2" cy="146.0" r="1.2" fill="none" stroke="#bbb" stroke-width="0.6"/>
<rect x="633.6" y="132.0" width="2.0" height="5.0" fill="#c8c8c8" opacity="0.55"/>
<rect x="633.2" y="115.0" width="4.0" height="2.8" fill="#d89850" opacity="0.75"/>
<line x1="635.2" y1="191.8" x2="635.2" y2="215.5" stroke="#30e0c8" stroke-width="1.5"/>
<circle cx="635.2" cy="191.8" r="1.2" fill="none" stroke="#bbb" stroke-width="0.6"/>
<circle cx="635.2" cy="215.5" r="1.2" fill="none" stroke="#bbb" stroke-width="0.6"/>
<rect x="633.6" y="201.0" width="2.0" height="5.0" fill="#c8c8c8" opacity="0.55"/>
<rect x="633.2" y="223.0" width="4.0" height="2.8" fill="#d89850" opacity="0.75"/>
<rect x="633.7" y="163.0" width="3.0" height="4.0" fill="#c8c8c8" opacity="0.45"/>
<rect x="633.7" y="170.6" width="3.0" height="4.0" fill="#c8c8c8" opacity="0.45"/>
<line x1="667.3" y1="122.2" x2="667.3" y2="146.0" stroke="#30e0c8" stroke-width="1.5"/>
<circle cx="667.3" cy="122.2" r="1.2" fill="none" stroke="#bbb" stroke-width="0.6"/>
<circle cx="667.3" cy="146.0" r="1.2" fill="none" stroke="#bbb" stroke-width="0.6"/>
<rect x="665.7" y="132.0" width="2.0" height="5.0" fill="#c8c8c8" opacity="0.55"/>
<rect x="665.3" y="115.0" width="4.0" height="2.8" fill="#d89850" opacity="0.75"/>
<line x1="667.3" y1="191.8" x2="667.3" y2="215.5" stroke="#30e0c8" stroke-width="1.5"/>
<circle cx="667.3" cy="191.8" r="1.2" fill="none" stroke="#bbb" stroke-width="0.6"/>
<circle cx="667.3" cy="215.5" r="1.2" fill="none" stroke="#bbb" stroke-width="0.6"/>
<rect x="665.7" y="201.0" width="2.0" height="5.0" fill="#c8c8c8" opacity="0.55"/>
<rect x="665.3" y="223.0" width="4.0" height="2.8" fill="#d89850" opacity="0.75"/>
<rect x="665.8" y="163.0" width="3.0" height="4.0" fill="#c8c8c8" opacity="0.45"/>
<rect x="665.8" y="170.6" width="3.0" height="4.0" fill="#c8c8c8" opacity="0.45"/>
<line x1="699.5" y1="191.8" x2="699.5" y2="215.5" stroke="#30e0c8" stroke-width="1.5"/>
<circle cx="699.5" cy="191.8" r="1.2" fill="none" stroke="#bbb" stroke-width="0.6"/>
<circle cx="699.5" cy="215.5" r="1.2" fill="none" stroke="#bbb" stroke-width="0.6"/>
<rect x="697.9" y="201.0" width="2.0" height="5.0" fill="#c8c8c8" opacity="0.55"/>
<rect x="697.5" y="223.0" width="4.0" height="2.8" fill="#d89850" opacity="0.75"/>
<rect x="698.0" y="163.0" width="3.0" height="4.0" fill="#c8c8c8" opacity="0.45"/>
<rect x="698.0" y="170.6" width="3.0" height="4.0" fill="#c8c8c8" opacity="0.45"/>
<line x1="731.7" y1="122.2" x2="731.7" y2="146.0" stroke="#30e0c8" stroke-width="1.5"/>
<circle cx="731.7" cy="122.2" r="1.2" fill="none" stroke="#bbb" stroke-width="0.6"/>
<circle cx="731.7" cy="146.0" r="1.2" fill="none" stroke="#bbb" stroke-width="0.6"/>
<rect x="730.1" y="132.0" width="2.0" height="5.0" fill="#c8c8c8" opacity="0.55"/>
<rect x="729.7" y="115.0" width="4.0" height="2.8" fill="#d89850" opacity="0.75"/>
<line x1="731.7" y1="191.8" x2="731.7" y2="215.5" stroke="#30e0c8" stroke-width="1.5"/>
<circle cx="731.7" cy="191.8" r="1.2" fill="none" stroke="#bbb" stroke-width="0.6"/>
<circle cx="731.7" cy="215.5" r="1.2" fill="none" stroke="#bbb" stroke-width="0.6"/>
<rect x="730.1" y="201.0" width="2.0" height="5.0" fill="#c8c8c8" opacity="0.55"/>
<rect x="729.7" y="223.0" width="4.0" height="2.8" fill="#d89850" opacity="0.75"/>
<rect x="730.2" y="163.0" width="3.0" height="4.0" fill="#c8c8c8" opacity="0.45"/>
<rect x="730.2" y="170.6" width="3.0" height="4.0" fill="#c8c8c8" opacity="0.45"/>
<line x1="763.8" y1="122.2" x2="763.8" y2="146.0" stroke="#30e0c8" stroke-width="1.5"/>
<circle cx="763.8" cy="122.2" r="1.2" fill="none" stroke="#bbb" stroke-width="0.6"/>
<circle cx="763.8" cy="146.0" r="1.2" fill="none" stroke="#bbb" stroke-width="0.6"/>
<rect x="762.2" y="132.0" width="2.0" height="5.0" fill="#c8c8c8" opacity="0.55"/>
<rect x="761.8" y="115.0" width="4.0" height="2.8" fill="#d89850" opacity="0.75"/>
<line x1="763.8" y1="191.8" x2="763.8" y2="215.5" stroke="#30e0c8" stroke-width="1.5"/>
<circle cx="763.8" cy="191.8" r="1.2" fill="none" stroke="#bbb" stroke-width="0.6"/>
<circle cx="763.8" cy="215.5" r="1.2" fill="none" stroke="#bbb" stroke-width="0.6"/>
<rect x="762.2" y="201.0" width="2.0" height="5.0" fill="#c8c8c8" opacity="0.55"/>
<rect x="761.8" y="223.0" width="4.0" height="2.8" fill="#d89850" opacity="0.75"/>
<rect x="762.3" y="163.0" width="3.0" height="4.0" fill="#c8c8c8" opacity="0.45"/>
<rect x="762.3" y="170.6" width="3.0" height="4.0" fill="#c8c8c8" opacity="0.45"/>
<line x1="796.0" y1="122.2" x2="796.0" y2="146.0" stroke="#30e0c8" stroke-width="1.5"/>
<circle cx="796.0" cy="122.2" r="1.2" fill="none" stroke="#bbb" stroke-width="0.6"/>
<circle cx="796.0" cy="146.0" r="1.2" fill="none" stroke="#bbb" stroke-width="0.6"/>
<rect x="794.4" y="132.0" width="2.0" height="5.0" fill="#c8c8c8" opacity="0.55"/>
<rect x="794.0" y="115.0" width="4.0" height="2.8" fill="#d89850" opacity="0.75"/>
<line x1="796.0" y1="191.8" x2="796.0" y2="215.5" stroke="#30e0c8" stroke-width="1.5"/>
<circle cx="796.0" cy="191.8" r="1.2" fill="none" stroke="#bbb" stroke-width="0.6"/>
<circle cx="796.0" cy="215.5" r="1.2" fill="none" stroke="#bbb" stroke-width="0.6"/>
<rect x="794.4" y="201.0" width="2.0" height="5.0" fill="#c8c8c8" opacity="0.55"/>
<rect x="794.0" y="223.0" width="4.0" height="2.8" fill="#d89850" opacity="0.75"/>
<rect x="794.5" y="163.0" width="3.0" height="4.0" fill="#c8c8c8" opacity="0.45"/>
<rect x="794.5" y="170.6" width="3.0" height="4.0" fill="#c8c8c8" opacity="0.45"/>
<line x1="828.1" y1="191.8" x2="828.1" y2="215.5" stroke="#30e0c8" stroke-width="1.5"/>
<circle cx="828.1" cy="191.8" r="1.2" fill="none" stroke="#bbb" stroke-width="0.6"/>
<circle cx="828.1" cy="215.5" r="1.2" fill="none" stroke="#bbb" stroke-width="0.6"/>
<rect x="826.5" y="201.0" width="2.0" height="5.0" fill="#c8c8c8" opacity="0.55"/>
<rect x="826.1" y="223.0" width="4.0" height="2.8" fill="#d89850" opacity="0.75"/>
<rect x="826.6" y="163.0" width="3.0" height="4.0" fill="#c8c8c8" opacity="0.45"/>
<rect x="826.6" y="170.6" width="3.0" height="4.0" fill="#c8c8c8" opacity="0.45"/>
<line x1="860.3" y1="191.8" x2="860.3" y2="215.5" stroke="#30e0c8" stroke-width="1.5"/>
<circle cx="860.3" cy="191.8" r="1.2" fill="none" stroke="#bbb" stroke-width="0.6"/>
<circle cx="860.3" cy="215.5" r="1.2" fill="none" stroke="#bbb" stroke-width="0.6"/>
<rect x="858.7" y="201.0" width="2.0" height="5.0" fill="#c8c8c8" opacity="0.55"/>
<rect x="858.3" y="223.0" width="4.0" height="2.8" fill="#d89850" opacity="0.75"/>
<rect x="858.8" y="163.0" width="3.0" height="4.0" fill="#c8c8c8" opacity="0.45"/>
<rect x="858.8" y="170.6" width="3.0" height="4.0" fill="#c8c8c8" opacity="0.45"/>
<line x1="699.5" y1="100.3" x2="699.5" y2="122.3" stroke="#30e0c8" stroke-width="1.5"/>
<line x1="860.3" y1="116.0" x2="860.3" y2="146.0" stroke="#30e0c8" stroke-width="1.5"/>
<line x1="860.3" y1="116.0" x2="871.0" y2="116.0" stroke="#30e0c8" stroke-width="1.5"/>
<line x1="464.6" y1="163.2" x2="667.3" y2="163.2" stroke="#f2f2f2" stroke-width="1.7"/>
<line x1="667.3" y1="163.2" x2="796.0" y2="163.2" stroke="#1e4ed8" stroke-width="1.7"/>
<line x1="796.0" y1="163.2" x2="860.3" y2="163.2" stroke="#d0108c" stroke-width="1.5"/>
<rect x="455.3" y="160.2" width="6.0" height="2.2" fill="#c8c8c8" opacity="0.6"/>
<rect x="487.5" y="160.2" width="6.0" height="2.2" fill="#c8c8c8" opacity="0.6"/>
<rect x="519.6" y="160.2" width="6.0" height="2.2" fill="#c8c8c8" opacity="0.6"/>
<rect x="551.8" y="160.2" width="6.0" height="2.2" fill="#c8c8c8" opacity="0.6"/>
<rect x="583.9" y="160.2" width="6.0" height="2.2" fill="#c8c8c8" opacity="0.6"/>
<rect x="616.1" y="160.2" width="6.0" height="2.2" fill="#c8c8c8" opacity="0.6"/>
<rect x="648.3" y="160.2" width="6.0" height="2.2" fill="#c8c8c8" opacity="0.6"/>
<rect x="680.4" y="160.2" width="6.0" height="2.2" fill="#c8c8c8" opacity="0.6"/>
<rect x="712.6" y="160.2" width="6.0" height="2.2" fill="#c8c8c8" opacity="0.6"/>
<rect x="744.7" y="160.2" width="6.0" height="2.2" fill="#c8c8c8" opacity="0.6"/>
<rect x="776.9" y="160.2" width="6.0" height="2.2" fill="#c8c8c8" opacity="0.6"/>
<rect x="809.1" y="160.2" width="6.0" height="2.2" fill="#c8c8c8" opacity="0.6"/>
<rect x="841.2" y="160.2" width="6.0" height="2.2" fill="#c8c8c8" opacity="0.6"/>
<rect x="460.0" y="166.5" width="8.0" height="2.3" fill="#c8c8c8" opacity="0.6"/>
<rect x="486.0" y="165.5" width="7.0" height="2.3" fill="#c8c8c8" opacity="0.6"/>
<line x1="459.6" y1="253.3" x2="876.7" y2="253.3" stroke="#444" stroke-width="0.8"/>
<line x1="458.3" y1="260.2" x2="876.4" y2="260.2" stroke="#26b826" stroke-width="1"/>
<rect x="463.8" y="256.4" width="5.0" height="2.3" fill="#c8c8c8" opacity="0.5"/>
<rect x="479.9" y="256.4" width="5.0" height="2.3" fill="#c8c8c8" opacity="0.5"/>
<rect x="496.0" y="256.4" width="5.0" height="2.3" fill="#c8c8c8" opacity="0.5"/>
<rect x="512.1" y="256.4" width="5.0" height="2.3" fill="#c8c8c8" opacity="0.5"/>
<rect x="528.2" y="256.4" width="5.0" height="2.3" fill="#c8c8c8" opacity="0.5"/>
<rect x="544.2" y="256.4" width="5.0" height="2.3" fill="#c8c8c8" opacity="0.5"/>
<rect x="560.3" y="256.4" width="5.0" height="2.3" fill="#c8c8c8" opacity="0.5"/>
<rect x="576.4" y="256.4" width="5.0" height="2.3" fill="#c8c8c8" opacity="0.5"/>
<rect x="592.5" y="256.4" width="5.0" height="2.3" fill="#c8c8c8" opacity="0.5"/>
<rect x="608.6" y="256.4" width="5.0" height="2.3" fill="#c8c8c8" opacity="0.5"/>
<rect x="624.6" y="256.4" width="5.0" height="2.3" fill="#c8c8c8" opacity="0.5"/>
<rect x="640.7" y="256.4" width="5.0" height="2.3" fill="#c8c8c8" opacity="0.5"/>
<rect x="656.8" y="256.4" width="5.0" height="2.3" fill="#c8c8c8" opacity="0.5"/>
<rect x="672.9" y="256.4" width="5.0" height="2.3" fill="#c8c8c8" opacity="0.5"/>
<rect x="689.0" y="256.4" width="5.0" height="2.3" fill="#c8c8c8" opacity="0.5"/>
<rect x="705.0" y="256.4" width="5.0" height="2.3" fill="#c8c8c8" opacity="0.5"/>
<rect x="721.1" y="256.4" width="5.0" height="2.3" fill="#c8c8c8" opacity="0.5"/>
<rect x="737.2" y="256.4" width="5.0" height="2.3" fill="#c8c8c8" opacity="0.5"/>
<rect x="753.3" y="256.4" width="5.0" height="2.3" fill="#c8c8c8" opacity="0.5"/>
<rect x="769.4" y="256.4" width="5.0" height="2.3" fill="#c8c8c8" opacity="0.5"/>
<rect x="785.4" y="256.4" width="5.0" height="2.3" fill="#c8c8c8" opacity="0.5"/>
<rect x="801.5" y="256.4" width="5.0" height="2.3" fill="#c8c8c8" opacity="0.5"/>
<rect x="817.6" y="256.4" width="5.0" height="2.3" fill="#c8c8c8" opacity="0.5"/>
<rect x="833.7" y="256.4" width="5.0" height="2.3" fill="#c8c8c8" opacity="0.5"/>
<rect x="849.8" y="256.4" width="5.0" height="2.3" fill="#c8c8c8" opacity="0.5"/>
<rect x="865.8" y="256.4" width="5.0" height="2.3" fill="#c8c8c8" opacity="0.5"/>
<line x1="458.3" y1="260.2" x2="458.3" y2="268.0" stroke="#3a3a3a" stroke-width="0.8"/>
<line x1="458.3" y1="276.0" x2="458.3" y2="296.7" stroke="#26b826" stroke-width="1"/>
<line x1="490.5" y1="260.2" x2="490.5" y2="268.0" stroke="#3a3a3a" stroke-width="0.8"/>
<line x1="490.5" y1="276.0" x2="490.5" y2="296.7" stroke="#26b826" stroke-width="1"/>
<line x1="522.6" y1="260.2" x2="522.6" y2="268.0" stroke="#3a3a3a" stroke-width="0.8"/>
<line x1="522.6" y1="276.0" x2="522.6" y2="296.7" stroke="#26b826" stroke-width="1"/>
<line x1="554.8" y1="260.2" x2="554.8" y2="268.0" stroke="#3a3a3a" stroke-width="0.8"/>
<line x1="554.8" y1="276.0" x2="554.8" y2="296.7" stroke="#26b826" stroke-width="1"/>
<line x1="586.9" y1="260.2" x2="586.9" y2="268.0" stroke="#3a3a3a" stroke-width="0.8"/>
<line x1="586.9" y1="276.0" x2="586.9" y2="296.7" stroke="#26b826" stroke-width="1"/>
<line x1="619.1" y1="260.2" x2="619.1" y2="268.0" stroke="#3a3a3a" stroke-width="0.8"/>
<line x1="619.1" y1="276.0" x2="619.1" y2="296.7" stroke="#26b826" stroke-width="1"/>
<line x1="651.3" y1="260.2" x2="651.3" y2="268.0" stroke="#3a3a3a" stroke-width="0.8"/>
<line x1="651.3" y1="276.0" x2="651.3" y2="296.7" stroke="#26b826" stroke-width="1"/>
<line x1="683.4" y1="260.2" x2="683.4" y2="268.0" stroke="#3a3a3a" stroke-width="0.8"/>
<line x1="683.4" y1="276.0" x2="683.4" y2="296.7" stroke="#26b826" stroke-width="1"/>
<line x1="715.6" y1="260.2" x2="715.6" y2="268.0" stroke="#3a3a3a" stroke-width="0.8"/>
<line x1="715.6" y1="276.0" x2="715.6" y2="296.7" stroke="#26b826" stroke-width="1"/>
<line x1="747.7" y1="260.2" x2="747.7" y2="268.0" stroke="#3a3a3a" stroke-width="0.8"/>
<line x1="747.7" y1="276.0" x2="747.7" y2="296.7" stroke="#26b826" stroke-width="1"/>
<line x1="779.9" y1="260.2" x2="779.9" y2="268.0" stroke="#3a3a3a" stroke-width="0.8"/>
<line x1="779.9" y1="276.0" x2="779.9" y2="296.7" stroke="#26b826" stroke-width="1"/>
<line x1="812.1" y1="260.2" x2="812.1" y2="268.0" stroke="#3a3a3a" stroke-width="0.8"/>
<line x1="812.1" y1="276.0" x2="812.1" y2="296.7" stroke="#26b826" stroke-width="1"/>
<line x1="844.2" y1="260.2" x2="844.2" y2="268.0" stroke="#3a3a3a" stroke-width="0.8"/>
<line x1="844.2" y1="276.0" x2="844.2" y2="296.7" stroke="#26b826" stroke-width="1"/>
<line x1="876.4" y1="260.2" x2="876.4" y2="268.0" stroke="#3a3a3a" stroke-width="0.8"/>
<line x1="876.4" y1="276.0" x2="876.4" y2="296.7" stroke="#26b826" stroke-width="1"/>
<line x1="458.3" y1="286.2" x2="876.4" y2="286.2" stroke="#26b826" stroke-width="1"/>
<rect x="471.4" y="282.4" width="6.0" height="2.4" fill="#c8c8c8" opacity="0.5"/>
<rect x="503.5" y="282.4" width="6.0" height="2.4" fill="#c8c8c8" opacity="0.5"/>
<rect x="535.7" y="282.4" width="6.0" height="2.4" fill="#c8c8c8" opacity="0.5"/>
<rect x="567.9" y="282.4" width="6.0" height="2.4" fill="#c8c8c8" opacity="0.5"/>
<rect x="600.0" y="282.4" width="6.0" height="2.4" fill="#c8c8c8" opacity="0.5"/>
<rect x="632.2" y="282.4" width="6.0" height="2.4" fill="#c8c8c8" opacity="0.5"/>
<rect x="664.3" y="282.4" width="6.0" height="2.4" fill="#c8c8c8" opacity="0.5"/>
<rect x="696.5" y="282.4" width="6.0" height="2.4" fill="#c8c8c8" opacity="0.5"/>
<rect x="728.7" y="282.4" width="6.0" height="2.4" fill="#c8c8c8" opacity="0.5"/>
<rect x="760.8" y="282.4" width="6.0" height="2.4" fill="#c8c8c8" opacity="0.5"/>
<rect x="793.0" y="282.4" width="6.0" height="2.4" fill="#c8c8c8" opacity="0.5"/>
<rect x="825.1" y="282.4" width="6.0" height="2.4" fill="#c8c8c8" opacity="0.5"/>
<rect x="857.3" y="282.4" width="6.0" height="2.4" fill="#c8c8c8" opacity="0.5"/>
<circle cx="458.3" cy="300.6" r="3.9" fill="none" stroke="#26b826" stroke-width="1"/>
<text x="458.3" y="302.4" font-size="5" text-anchor="middle" fill="#d8d8d8" font-family="Liberation Sans">1</text>
<circle cx="490.5" cy="300.6" r="3.9" fill="none" stroke="#26b826" stroke-width="1"/>
<text x="490.5" y="302.4" font-size="5" text-anchor="middle" fill="#d8d8d8" font-family="Liberation Sans">2</text>
<circle cx="522.6" cy="300.6" r="3.9" fill="none" stroke="#26b826" stroke-width="1"/>
<text x="522.6" y="302.4" font-size="5" text-anchor="middle" fill="#d8d8d8" font-family="Liberation Sans">3</text>
<circle cx="554.8" cy="300.6" r="3.9" fill="none" stroke="#26b826" stroke-width="1"/>
<text x="554.8" y="302.4" font-size="5" text-anchor="middle" fill="#d8d8d8" font-family="Liberation Sans">4</text>
<circle cx="586.9" cy="300.6" r="3.9" fill="none" stroke="#26b826" stroke-width="1"/>
<text x="586.9" y="302.4" font-size="5" text-anchor="middle" fill="#d8d8d8" font-family="Liberation Sans">5</text>
<circle cx="619.1" cy="300.6" r="3.9" fill="none" stroke="#26b826" stroke-width="1"/>
<text x="619.1" y="302.4" font-size="5" text-anchor="middle" fill="#d8d8d8" font-family="Liberation Sans">6</text>
<circle cx="651.3" cy="300.6" r="3.9" fill="none" stroke="#26b826" stroke-width="1"/>
<text x="651.3" y="302.4" font-size="5" text-anchor="middle" fill="#d8d8d8" font-family="Liberation Sans">7</text>
<circle cx="683.4" cy="300.6" r="3.9" fill="none" stroke="#26b826" stroke-width="1"/>
<text x="683.4" y="302.4" font-size="5" text-anchor="middle" fill="#d8d8d8" font-family="Liberation Sans">8</text>
<circle cx="715.6" cy="300.6" r="3.9" fill="none" stroke="#26b826" stroke-width="1"/>
<text x="715.6" y="302.4" font-size="5" text-anchor="middle" fill="#d8d8d8" font-family="Liberation Sans">9</text>
<circle cx="747.7" cy="300.6" r="3.9" fill="none" stroke="#26b826" stroke-width="1"/>
<text x="747.7" y="302.4" font-size="5" text-anchor="middle" fill="#d8d8d8" font-family="Liberation Sans">10</text>
<circle cx="779.9" cy="300.6" r="3.9" fill="none" stroke="#26b826" stroke-width="1"/>
<text x="779.9" y="302.4" font-size="5" text-anchor="middle" fill="#d8d8d8" font-family="Liberation Sans">11</text>
<circle cx="812.1" cy="300.6" r="3.9" fill="none" stroke="#26b826" stroke-width="1"/>
<text x="812.1" y="302.4" font-size="5" text-anchor="middle" fill="#d8d8d8" font-family="Liberation Sans">12</text>
<circle cx="844.2" cy="300.6" r="3.9" fill="none" stroke="#26b826" stroke-width="1"/>
<text x="844.2" y="302.4" font-size="5" text-anchor="middle" fill="#d8d8d8" font-family="Liberation Sans">13</text>
<circle cx="876.4" cy="300.6" r="3.9" fill="none" stroke="#26b826" stroke-width="1"/>
<text x="876.4" y="302.4" font-size="5" text-anchor="middle" fill="#d8d8d8" font-family="Liberation Sans">14</text>
</g>
<text x="635" y="321.2" font-size="7.5" fill="#e8e8e8" font-family="Liberation Sans" textLength="34" lengthAdjust="spacingAndGlyphs">一层给排水平面图</text>
<text x="680.6" y="321.2" font-size="5.5" fill="#d0d0d0" font-family="Liberation Sans">1:150</text>
<rect x="635.0" y="322.6" width="64.0" height="1.6" fill="#1a9a1a" stroke="none" stroke-width="1"/>
<line x1="635.0" y1="325.0" x2="699.0" y2="325.0" stroke="#1a9a1a" stroke-width="0.6"/>
<rect x="635.0" y="327.4" width="32.0" height="2.0" fill="#e8e800" opacity="0.55"/>
<rect x="775.4" y="341.4" width="148.1" height="14.9" fill="none" stroke="#a8a8a8" stroke-width="1"/>
<line x1="793.2" y1="341.4" x2="793.2" y2="356.3" stroke="#a8a8a8" stroke-width="1"/>
<line x1="812.2" y1="341.4" x2="812.2" y2="356.3" stroke="#a8a8a8" stroke-width="1"/>
<line x1="832.3" y1="341.4" x2="832.3" y2="356.3" stroke="#a8a8a8" stroke-width="1"/>
<line x1="868.5" y1="341.4" x2="868.5" y2="356.3" stroke="#a8a8a8" stroke-width="1"/>
<line x1="885.5" y1="341.4" x2="885.5" y2="356.3" stroke="#a8a8a8" stroke-width="1"/>
<line x1="775.4" y1="348.8" x2="812.2" y2="348.8" stroke="#a8a8a8" stroke-width="1"/>
<rect x="782.0" y="344.0" width="3.0" height="2.4" fill="#e8e8e8" opacity="0.6"/>
<rect x="797.0" y="344.0" width="9.0" height="2.4" fill="#9a9a9a" opacity="0.5"/>
<rect x="780.0" y="351.5" width="6.0" height="2.4" fill="#e8e8e8" opacity="0.6"/>
<rect x="796.0" y="351.5" width="7.0" height="2.4" fill="#ff2020" opacity="0.7"/>
<rect x="818.5" y="347.8" width="7.0" height="2.6" fill="#e8e8e8" opacity="0.6"/>
<rect x="845.0" y="347.8" width="10.0" height="2.6" fill="#e8e8e8" opacity="0.6"/>
<rect x="873.0" y="347.8" width="8.0" height="2.6" fill="#e8e8e8" opacity="0.6"/>
<rect x="890.0" y="347.8" width="14.0" height="2.6" fill="#ff2020" opacity="0.75"/>
<path transform="translate(619.40,399.20) scale(1.62,1.72)" d="M3.6 0L0 6.9H6M4.3 4.6V10" fill="none" stroke="#f0f0f0" stroke-width="1.3" vector-effect="non-scaling-stroke" stroke-linecap="round" stroke-linejoin="round"/>
<path transform="translate(634.40,399.20) scale(1.62,1.72)" d="M3 4.6Q0.4 4.6 0.4 2.3Q0.4 0 3 0Q5.6 0 5.6 2.3Q5.6 4.6 3 4.6Q0 4.6 0 7.3Q0 10 3 10Q6 10 6 7.3Q6 4.6 3 4.6Z" fill="none" stroke="#f0f0f0" stroke-width="1.3" vector-effect="non-scaling-stroke" stroke-linecap="round" stroke-linejoin="round"/>
<path transform="translate(648.00,399.20) scale(1.62,1.72)" d="M0.3 2Q0.8 0 3 0Q5.8 0 5.8 2.6Q5.8 3.8 4.8 5L0.3 10H6" fill="none" stroke="#f0f0f0" stroke-width="1.3" vector-effect="non-scaling-stroke" stroke-linecap="round" stroke-linejoin="round"/>
<path transform="translate(661.60,399.20) scale(1.62,1.72)" d="M0.4 0.3H5.6L2.8 4.3Q6 4.3 6 7.1Q6 10 3 10Q1 10 0.2 9" fill="none" stroke="#f0f0f0" stroke-width="1.3" vector-effect="non-scaling-stroke" stroke-linecap="round" stroke-linejoin="round"/>
<path transform="translate(674.40,399.20) scale(1.62,1.72)" d="M3.6 0L0 6.9H6M4.3 4.6V10" fill="none" stroke="#f0f0f0" stroke-width="1.3" vector-effect="non-scaling-stroke" stroke-linecap="round" stroke-linejoin="round"/>
<path transform="translate(729.20,396.80) scale(1.83,2.04)" d="M0 2.6L3.5 0V10" fill="none" stroke="#26a626" stroke-width="1.25" vector-effect="non-scaling-stroke" stroke-linecap="round" stroke-linejoin="round"/>
<path transform="translate(739.90,396.80) scale(1.83,2.04)" d="M0.3 2Q0.8 0 3 0Q5.8 0 5.8 2.6Q5.8 3.8 4.8 5L0.3 10H6" fill="none" stroke="#26a626" stroke-width="1.25" vector-effect="non-scaling-stroke" stroke-linecap="round" stroke-linejoin="round"/>
<path transform="translate(756.20,396.80) scale(1.83,2.04)" d="M4.8 0L0.8 5.2Q0 6.4 0 7.3Q0 10 3 10Q6 10 6 7.3Q6 4.6 3 4.6Q1.5 4.6 0.8 5.2" fill="none" stroke="#26a626" stroke-width="1.25" vector-effect="non-scaling-stroke" stroke-linecap="round" stroke-linejoin="round"/>
<path transform="translate(772.30,396.80) scale(1.83,2.04)" d="M3.6 0L0 6.9H6M4.3 4.6V10" fill="none" stroke="#26a626" stroke-width="1.25" vector-effect="non-scaling-stroke" stroke-linecap="round" stroke-linejoin="round"/>
<path transform="translate(790.50,396.80) scale(1.83,2.04)" d="M1.2 10L5.2 4.8Q6 3.6 6 2.7Q6 0 3 0Q0 0 0 2.7Q0 5.4 3 5.4Q4.5 5.4 5.2 4.8" fill="none" stroke="#26a626" stroke-width="1.25" vector-effect="non-scaling-stroke" stroke-linecap="round" stroke-linejoin="round"/>
<path transform="translate(807.00,396.80) scale(1.83,2.04)" d="M3 4.6Q0.4 4.6 0.4 2.3Q0.4 0 3 0Q5.6 0 5.6 2.3Q5.6 4.6 3 4.6Q0 4.6 0 7.3Q0 10 3 10Q6 10 6 7.3Q6 4.6 3 4.6Z" fill="none" stroke="#26a626" stroke-width="1.25" vector-effect="non-scaling-stroke" stroke-linecap="round" stroke-linejoin="round"/>
<text x="843.7" y="411.4" font-size="7.4" fill="#20d8c8" font-family="Liberation Sans" font-weight="bold" textLength="22.6" lengthAdjust="spacingAndGlyphs">127778</text>
<text x="652" y="719.5" font-size="6.5" fill="#e8e8e8" font-family="Liberation Sans" textLength="34" lengthAdjust="spacingAndGlyphs">二层给排水平面图</text>
<text x="697.6" y="719.2" font-size="4.8" fill="#d0d0d0" font-family="Liberation Sans">1:50</text>
<rect x="652.0" y="720.4" width="63.0" height="2.0" fill="#1a9a1a" stroke="none" stroke-width="1"/>
<rect x="500.5" y="687" width="267.8" height="23.5" fill="#5a5a5a"/>
<rect x="567.6" y="688.6" width="111" height="19.6" fill="#4e4e4e" stroke="#303030" stroke-width="1"/>
<rect x="570.5" y="693.7" width="10.1" height="9.9" fill="#2b9a2b" stroke="#1e1e1e" stroke-width="0.6"/>
<text x="582.9" y="701.6" font-size="8.2" fill="#d0d0d0" font-family="Liberation Serif" textLength="17.6" lengthAdjust="spacingAndGlyphs">DN32</text>
<path d="M671 696.8h5.6l-2.8 3.4z" fill="#e8e8e8"/>
<line x1="524.4" y1="690" x2="524.4" y2="707" stroke="#4a4a4a"/>
<text x="527" y="702" font-size="8.6" fill="#c8c8c8" font-family="Liberation Sans">标注分类</text>
<circle cx="509.0" cy="695.2" r="2.5" fill="none" stroke="#e0e0e0" stroke-width="1"/>
<circle cx="515.0" cy="695.2" r="2.5" fill="none" stroke="#e0e0e0" stroke-width="1"/>
<circle cx="509.0" cy="701.2" r="2.5" fill="none" stroke="#e0e0e0" stroke-width="1"/>
<circle cx="515.0" cy="701.2" r="2.5" fill="none" stroke="#e0e0e0" stroke-width="1"/>
<path d="M687 693.5h6M687 693.5v11h11v-5" fill="none" stroke="#e8e8e8" stroke-width="1.1"/><path d="M690 701l7-7 1.6 1.6-7 7h-1.6z" fill="none" stroke="#e8e8e8" stroke-width="1.1"/>
<path d="M713.5 692.5v12M707.5 698.5h12M711.5 694.5l2-2 2 2M711.5 702.5l2 2 2-2M709.5 696.5l-2 2 2 2M717.5 696.5l2 2-2 2" fill="none" stroke="#e8e8e8" stroke-width="1.1"/>
<rect x="729.5" y="695.5" width="7" height="9" rx="1.5" fill="none" stroke="#e8e8e8" stroke-width="1.1"/><path d="M732 693.5h4.5a2 2 0 0 1 2 2v6.5" fill="none" stroke="#e8e8e8" stroke-width="1.1"/>
<path d="M751 703.5v-10h6v3" fill="none" stroke="#e8e8e8" stroke-width="1.1"/><rect x="754.5" y="697.5" width="7" height="7" fill="none" stroke="#e8e8e8" stroke-width="1.1"/>
</svg></div>
<div id="panel" class="abs">
<svg width="0" height="0" style="position:absolute"><defs><pattern id="hb" width="2" height="2" patternUnits="userSpaceOnUse"><rect width="2" height="2" fill="#bfe2f7"/><path d="M0 2L2 0" stroke="#2aa2e6" stroke-width="0.6"/></pattern><pattern id="hg" width="2.5" height="2.5" patternUnits="userSpaceOnUse" patternTransform="rotate(0)"><rect width="2.5" height="2.5" fill="#e9d9b4"/><path d="M0 2.5L2.5 0" stroke="#c49a45" stroke-width="0.9"/></pattern></defs></svg>
<div class="abs" style="left:5.8px;top:4.4px;font-size:8.6px;line-height:12px;color:#8c8c8c">测量</div>
<div class="abs" style="left:81.3px;top:4.6px;width:14px;height:14.5px;background:#dadada"></div><div class="abs" style="left:85.5px;top:5px;font-size:8px;line-height:14px;color:#f6f6f6">×</div>
<div class="pi" style="top:20.20px;"><svg class="abs" style="left:31.7px;top:3.5px" width="12" height="12" viewBox="0 0 12 12"><path d="M2 2.5l8 7" stroke="#2aa2e6" stroke-width="1"/><path d="M0.5 4l3-3M8.5 11l3-3" stroke="#2aa2e6" stroke-width="0.9"/><circle cx="2.8" cy="3.2" r="1" fill="#2aa2e6"/><circle cx="9.2" cy="8.8" r="1" fill="#2aa2e6"/></svg><div class="abs" style="left:46.2px;top:3px;line-height:12px">对齐</div></div>
<div class="pi" style="top:40.02px;border-top:1px solid #cfcfcf;"><svg class="abs" style="left:31.3px;top:3.5px" width="12" height="12" viewBox="0 0 12 12"><path d="M0.8 3.5v5M11.2 3.5v5M1 6h10" stroke="#2aa2e6" stroke-width="1"/><circle cx="2.6" cy="6" r="1.1" fill="#2aa2e6"/><circle cx="9.4" cy="6" r="1.1" fill="#2aa2e6"/></svg><div class="abs" style="left:45.8px;top:3px;line-height:12px">线性</div></div>
<div class="pi" style="top:59.84px;border-top:1px solid #cfcfcf;"><svg class="abs" style="left:32.1px;top:3.5px" width="12" height="12" viewBox="0 0 12 12"><path d="M1 1v6.5h10L8 3z" fill="url(#hb)" stroke="#2aa2e6" stroke-width="0.8"/><path d="M1 8.5v3M11 8.5v3M1 10h10" stroke="#2aa2e6" stroke-width="0.9"/></svg><div class="abs" style="left:46.6px;top:3px;line-height:12px">面积</div></div>
<div class="pi" style="top:79.66px;border-top:1px solid #cfcfcf;"><svg class="abs" style="left:22.9px;top:3.5px" width="12" height="12" viewBox="0 0 12 12"><rect x="1" y="0.8" width="10" height="6.5" fill="url(#hb)" stroke="#2aa2e6" stroke-width="0.8"/><path d="M1 8.5v3M11 8.5v3M1 10h10" stroke="#2aa2e6" stroke-width="0.9"/></svg><div class="abs" style="left:37.4px;top:3px;line-height:12px">矩形面积</div></div>
<div class="pi" style="top:99.48px;border-top:1px solid #cfcfcf;"><svg class="abs" style="left:22.9px;top:3.5px" width="12" height="12" viewBox="0 0 12 12"><path d="M3 9V6h2.5L7 2.5h5M6.5 5.5h5.5" fill="none" stroke="#2aa2e6" stroke-width="0.9"/><rect x="0.8" y="8.5" width="3" height="3" fill="none" stroke="#2aa2e6" stroke-width="0.9"/><path d="M8 0.5l1.5 1.5M9.5 0.5L8 2M8 4l0.8 1 0.8-1" stroke="#2aa2e6" stroke-width="0.6"/></svg><div class="abs" style="left:37.4px;top:3px;line-height:12px">坐标标注</div></div>
<div class="pi" style="top:119.30px;border-top:1px solid #cfcfcf;"><svg class="abs" style="left:14.2px;top:3.5px" width="12" height="12" viewBox="0 0 12 12"><text x="0.5" y="5.5" font-size="5.5" font-weight="bold" font-family="Liberation Mono" fill="#2aa2e6">A:B</text><rect x="0.8" y="7" width="10.5" height="4" fill="none" stroke="#2aa2e6" stroke-width="0.9"/><path d="M2.5 7v1.5M4.5 7v1.5M6.5 7v1.5M8.5 7v1.5" stroke="#2aa2e6" stroke-width="0.6"/></svg><div class="abs" style="left:28.7px;top:3px;line-height:12px">设置标注比例</div></div>
<div class="pi" style="top:139.12px;border-top:1px solid #cfcfcf;"><svg class="abs" style="left:33.3px;top:3.5px" width="12" height="12" viewBox="0 0 12 12"><path d="M1.5 11a9 9 0 0 1 9-9" fill="none" stroke="#c49a45" stroke-width="1.3"/><path d="M4.5 11a6 6 0 0 1 6-6" fill="none" stroke="#c49a45" stroke-width="1.1" stroke-dasharray="1.5 1"/></svg><div class="abs" style="left:47.8px;top:3px;line-height:12px">弧长</div></div>
<div class="pi" style="top:158.94px;border-top:1px solid #cfcfcf;"><svg class="abs" style="left:10.3px;top:3.5px" width="12" height="12" viewBox="0 0 12 12"><circle cx="1.8" cy="2" r="1.2" fill="#c49a45"/><path d="M2 2l4.5 4L10.5 4M2.5 11l8.5-7.5" fill="none" stroke="#c49a45" stroke-width="1"/></svg><div class="abs" style="left:24.8px;top:3px;line-height:12px">点到直线的距离</div></div>
<div class="pi" style="top:178.76px;border-top:1px solid #cfcfcf;"><svg class="abs" style="left:23.7px;top:3.5px" width="12" height="12" viewBox="0 0 12 12"><path d="M5 1.5C2 3 1.5 6 3.5 9l7 1" fill="none" stroke="#c49a45" stroke-width="1.1"/><circle cx="5" cy="1.5" r="1.2" fill="#c49a45"/><circle cx="3.5" cy="9" r="1.2" fill="#c49a45"/><circle cx="10.5" cy="10" r="1.2" fill="#c49a45"/></svg><div class="abs" style="left:38.2px;top:3px;line-height:12px">连续测量</div></div>
<div class="pi" style="top:198.58px;border-top:1px solid #cfcfcf;"><svg class="abs" style="left:23.7px;top:3.5px" width="12" height="12" viewBox="0 0 12 12"><rect x="1" y="1" width="10" height="10" fill="none" stroke="#c49a45" stroke-width="1.1" stroke-dasharray="1.6 0.9"/><path d="M3 8.5c1-3 3-4.5 6-5M7 9.5l2-2" fill="none" stroke="#c49a45" stroke-width="0.9"/></svg><div class="abs" style="left:38.2px;top:3px;line-height:12px">批量测量</div></div>
<div class="pi" style="top:218.40px;border-top:1px solid #cfcfcf;"><svg class="abs" style="left:14.7px;top:3.5px" width="12" height="12" viewBox="0 0 12 12"><path d="M3.5 3.5h7.5v6H5L1 7z" fill="none" stroke="#c49a45" stroke-width="1"/><path d="M6 5.5h3v2H6z" fill="none" stroke="#c49a45" stroke-width="0.8"/><circle cx="3" cy="9" r="1.1" fill="#c49a45"/></svg><div class="abs" style="left:29.2px;top:3px;line-height:12px">查看分段长度</div></div>
<div class="pi" style="top:238.22px;border-top:1px solid #cfcfcf;"><svg class="abs" style="left:5.8px;top:3.5px" width="12" height="12" viewBox="0 0 12 12"><path d="M6 0.8L11.2 6 6 11.2 0.8 6z" fill="url(#hg)" stroke="#c49a45" stroke-width="1"/><path d="M4 7l4-3" stroke="#c49a45" stroke-width="0.9"/></svg><div class="abs" style="left:20.3px;top:3px;line-height:12px">修改单个标注属性</div></div>
<div class="pi" style="top:258.04px;border-top:1px solid #cfcfcf;"><svg class="abs" style="left:14.7px;top:3.5px" width="12" height="12" viewBox="0 0 12 12"><path d="M2 3.5Q6 0 11 1L10 10Q5 11 1.5 10z" fill="url(#hg)" stroke="#c49a45" stroke-width="1"/></svg><div class="abs" style="left:29.2px;top:3px;line-height:12px">面积(含弧线)</div></div>
<div class="pi" style="top:277.86px;border-top:1px solid #cfcfcf;"><svg class="abs" style="left:14.3px;top:3.5px" width="12" height="12" viewBox="0 0 12 12"><path d="M2 4Q4 0.5 9 1.5Q12 4 10.5 8Q7 11.5 2.5 10Q0 7 2 4z" fill="none" stroke="#c49a45" stroke-width="1.1"/><path d="M4 5.5h4v2.5H4z" fill="none" stroke="#c49a45" stroke-width="0.8"/></svg><div class="abs" style="left:28.8px;top:3px;line-height:12px">测量填充面积</div></div>
<div class="pi" style="top:297.68px;border-top:1px solid #cfcfcf;"><svg class="abs" style="left:19.0px;top:3.5px" width="12" height="12" viewBox="0 0 12 12"><path d="M1 3.5L3.5 1H11v7.5L8.5 11H1z" fill="none" stroke="#c49a45" stroke-width="1"/><rect x="1" y="3.5" width="7.5" height="7.5" fill="url(#hg)" stroke="#c49a45" stroke-width="0.9"/></svg><div class="abs" style="left:33.5px;top:3px;line-height:12px">计算侧面积</div></div>
<div class="pi" style="top:317.50px;border-top:1px solid #cfcfcf;"><svg class="abs" style="left:23.3px;top:3.5px" width="12" height="12" viewBox="0 0 12 12"><path d="M1 1l10 2v8H2z" fill="none" stroke="#c49a45" stroke-width="1"/><rect x="4" y="4.5" width="4.5" height="4" fill="none" stroke="#c49a45" stroke-width="0.9"/><circle cx="6.2" cy="6.5" r="1" fill="none" stroke="#c49a45" stroke-width="0.7"/></svg><div class="abs" style="left:37.8px;top:3px;line-height:12px">面积偏移</div></div>
<div class="pi" style="top:337.32px;border-top:1px solid #cfcfcf;"><svg class="abs" style="left:27.7px;top:3.5px" width="12" height="12" viewBox="0 0 12 12"><path d="M6 0.8L11.2 6 6 11.2 0.8 6z" fill="url(#hg)" stroke="#c49a45" stroke-width="1.1"/></svg><div class="abs" style="left:42.2px;top:3px;line-height:12px">测量圆</div></div>
<div class="pi" style="top:357.14px;border-top:1px solid #cfcfcf;"><svg class="abs" style="left:32.1px;top:3.5px" width="12" height="12" viewBox="0 0 12 12"><circle cx="6" cy="6" r="5" fill="none" stroke="#c49a45" stroke-width="1.1"/><path d="M6 6L3 3M3 3h2M3 3v2" fill="none" stroke="#c49a45" stroke-width="0.9"/></svg><div class="abs" style="left:46.6px;top:3px;line-height:12px">半径</div></div>
<div class="pi" style="top:376.96px;border-top:1px solid #cfcfcf;"><svg class="abs" style="left:23.3px;top:3.5px" width="12" height="12" viewBox="0 0 12 12"><path d="M1 9.5h10L7 2.5z" fill="none" stroke="#c49a45" stroke-width="1.1"/><path d="M5 6.5q1 1.5 0.5 3" fill="none" stroke="#c49a45" stroke-width="0.8"/><circle cx="1.2" cy="9.5" r="1.1" fill="#c49a45"/></svg><div class="abs" style="left:37.8px;top:3px;line-height:12px">测量角度</div></div>
<div class="pi" style="top:396.78px;border-top:1px solid #cfcfcf;"><svg class="abs" style="left:23.3px;top:3.5px" width="12" height="12" viewBox="0 0 12 12"><path d="M1 11V1h10v10z" fill="none" stroke="#c49a45" stroke-width="1"/><path d="M3.5 5l2-1.5 2 1 2-2M3 7h6M3 9h1.5M7.5 9H9" fill="none" stroke="#c49a45" stroke-width="0.8"/></svg><div class="abs" style="left:37.8px;top:3px;line-height:12px">测量统计</div></div>
</div>
<div id="btabs" class="abs">
<svg class="abs" style="left:0;top:0" width="120" height="16"><path d="M0 0.5H52.5L48 15.5H5.7z" fill="#000"/><path d="M53.4 0.5H104L98.8 15.5H56.7z" fill="#fff" stroke="#666" stroke-width="1"/><path d="M0 15.5h120" stroke="#6e6e6e"/></svg>
<div class="abs" style="left:18.4px;top:2.5px;font-size:8.6px;line-height:12px;color:#fff">模型</div>
<div class="abs" style="left:61px;top:2.5px;font-size:8.6px;line-height:12px;color:#222">建筑图纸</div>
</div>
<div id="status" class="abs">
<div class="abs" style="left:5.5px;top:4px;font-family:'Liberation Mono',monospace;font-size:8.6px;line-height:12px;color:#333;letter-spacing:-0.75px;white-space:nowrap">x = -300457 y = 96165</div>
<div class="abs" style="left:215px;top:1px;width:1px;height:17px;background:#d8d4cf"></div>
<div class="abs" style="left:324.5px;top:1px;width:1px;height:17px;background:#d8d4cf"></div>
<div class="abs" style="left:327px;top:3.5px;font-size:8.6px;line-height:12px;color:#333;white-space:nowrap">模型中的标注比例:1</div>
<div class="abs" style="left:1180.5px;top:1px;width:1px;height:18px;background:#dedad5"></div>
<div class="abs" style="left:1202.4px;top:1px;width:1px;height:18px;background:#dedad5"></div>
<div class="abs" style="left:1225.5px;top:1px;width:1px;height:18px;background:#dedad5"></div>
<div class="abs" style="left:1247.2px;top:1px;width:1px;height:18px;background:#dedad5"></div>
<svg class="abs" style="left:1186px;top:3.5px" width="12" height="12" viewBox="0 0 12 12"><path d="M3 0.8h5.5l2.7 2.7v7.7H1V2.8z" fill="#f3e8cf" stroke="#c9a04e" stroke-width="1.1"/><text x="2.2" y="7.5" font-size="4" font-weight="bold" fill="#c9a04e" font-family="Liberation Sans">PDF</text><path d="M7 9.5h3" stroke="#c9a04e" stroke-width="0.8"/></svg>
<svg class="abs" style="left:1208.6px;top:3.5px" width="12" height="12" viewBox="0 0 12 12"><path d="M1 3v8h8" fill="none" stroke="#d4a53c" stroke-width="1"/><path d="M3 1.5h8v8H3z" fill="#f5e6c4" stroke="#d4a53c" stroke-width="1.1"/><path d="M4.5 8l2-2.5h3M8 4l1.5 1.5L8 7" fill="none" stroke="#d4a53c" stroke-width="0.9"/><text x="6" y="2.8" font-size="3" font-weight="bold" fill="#d4a53c" font-family="Liberation Sans">PDF</text></svg>
<svg class="abs" style="left:1230.8px;top:3.6px" width="12.4" height="12.2" viewBox="0 0 12.4 12.2"><rect x="0" y="0" width="12.4" height="12.2" rx="2" fill="#1c95de"/><path d="M2 9V3.5h2a1.3 1.3 0 0 1 0 2.6H2M5.3 6.3h2" fill="none" stroke="#fff" stroke-width="1"/><circle cx="9" cy="6.3" r="1.7" fill="none" stroke="#fff" stroke-width="1"/></svg>
<svg class="abs" style="left:1253.8px;top:3.8px" width="11" height="11.5" viewBox="0 0 11 11.5"><rect x="0.6" y="0.6" width="9.8" height="10.3" rx="1.3" fill="#f4f8fb" stroke="#5ab4e6" stroke-width="1.1"/><path d="M2.5 8h6" stroke="#1c95de" stroke-width="1.4"/></svg>
</div>
</body></html>
